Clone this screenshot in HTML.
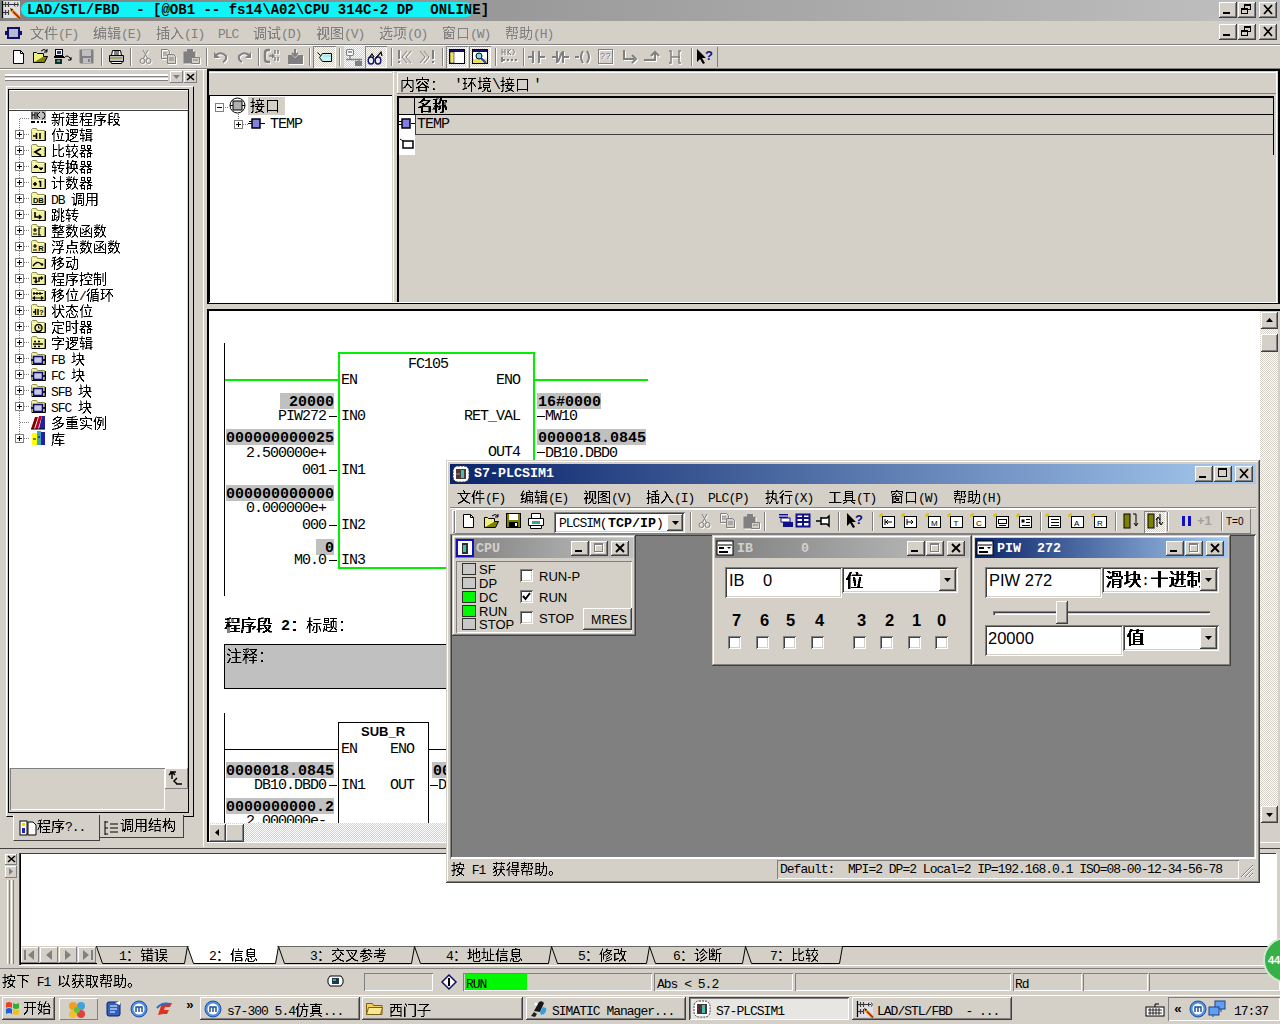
<!DOCTYPE html><html><head><meta charset="utf-8"><style>
*{margin:0;padding:0;box-sizing:border-box}
html,body{width:1280px;height:1024px;overflow:hidden;background:#D4D0C8;position:relative;font-family:"Liberation Mono",monospace;color:#000}
div{position:absolute}
.tx{white-space:nowrap;line-height:12px;height:12px}
svg.c{position:static;display:inline-block;vertical-align:top}
.ra{background:#D4D0C8;box-shadow:inset -1px -1px #404040,inset 1px 1px #fff,inset -2px -2px #808080,inset 2px 2px #D4D0C8}
.ra1{background:#D4D0C8;box-shadow:inset -1px -1px #808080,inset 1px 1px #fff}
.sk{box-shadow:inset 1px 1px #808080,inset -1px -1px #fff,inset 2px 2px #404040,inset -2px -2px #D4D0C8}
.sk1{box-shadow:inset 1px 1px #808080,inset -1px -1px #fff}
.sans{font-family:"Liberation Sans",sans-serif}
.dith{background-color:#fff;background-image:linear-gradient(45deg,#D4D0C8 25%,transparent 25%,transparent 75%,#D4D0C8 75%),linear-gradient(45deg,#D4D0C8 25%,transparent 25%,transparent 75%,#D4D0C8 75%);background-size:2px 2px;background-position:0 0,1px 1px}
svg{position:absolute;overflow:visible}
</style></head><body><svg width="0" height="0" style="position:absolute;left:0;top:0"><defs><g id="g146587"><path d="M6 0h1v1h-1zM7 1h1v1h-1zM7 2h1v1h-1zM1 3h12v1h-12zM3 4h1v1h-1zM10 4h1v1h-1zM4 5h1v1h-1zM9 5h1v1h-1zM4 6h1v1h-1zM9 6h1v1h-1zM5 7h1v1h-1zM8 7h1v1h-1zM5 8h2v1h-2zM8 8h1v1h-1zM6 9h2v1h-2zM5 10h4v1h-4zM4 11h2v1h-2zM8 11h2v1h-2zM2 12h2v1h-2zM10 12h2v1h-2zM1 13h1v1h-1zM12 13h1v1h-1z"/><path d="M6 1h1v1h-1zM0 3h1v1h-1zM13 3h1v1h-1zM3 5h1v1h-1zM10 5h1v1h-1zM4 7h1v1h-1zM9 7h1v1h-1zM7 8h1v1h-1zM3 11h1v1h-1zM10 11h1v1h-1zM1 12h1v1h-1zM4 12h1v1h-1zM9 12h1v1h-1zM12 12h1v1h-1zM2 13h1v1h-1z" opacity="0.5"/></g><g id="g144ef6"><path d="M3 1h1v1h-1zM6 1h1v1h-1zM3 2h1v1h-1zM6 2h1v1h-1zM2 3h1v1h-1zM5 3h8v1h-8zM2 4h1v1h-1zM5 4h1v1h-1zM1 5h2v1h-2zM5 5h1v1h-1zM1 6h2v1h-2zM2 7h1v1h-1zM2 8h1v1h-1zM5 8h8v1h-8zM2 9h1v1h-1zM2 10h1v1h-1zM2 11h1v1h-1zM2 12h1v1h-1z"/><path d="M3 0h2v1h-2zM8 0h2v1h-2zM8 1h2v1h-2zM2 2h1v1h-1zM5 2h1v1h-1zM8 2h2v1h-2zM3 3h1v1h-1zM1 4h1v1h-1zM3 4h1v1h-1zM8 4h2v1h-2zM3 5h2v1h-2zM8 5h2v1h-2zM0 6h1v1h-1zM3 6h1v1h-1zM8 6h2v1h-2zM3 7h1v1h-1zM8 7h2v1h-2zM3 8h2v1h-2zM13 8h1v1h-1zM3 9h1v1h-1zM8 9h2v1h-2zM3 10h1v1h-1zM8 10h2v1h-2zM3 11h1v1h-1zM8 11h2v1h-2zM3 12h1v1h-1zM8 12h2v1h-2zM2 13h2v1h-2zM8 13h2v1h-2z" opacity="0.5"/></g><g id="g147f16"><path d="M3 1h1v1h-1zM9 1h1v1h-1zM2 2h1v1h-1zM6 2h7v1h-7zM2 3h1v1h-1zM6 3h1v1h-1zM12 3h1v1h-1zM1 4h1v1h-1zM4 4h1v1h-1zM6 4h7v1h-7zM1 5h3v1h-3zM6 5h1v1h-1zM2 6h1v1h-1zM6 6h7v1h-7zM2 7h1v1h-1zM6 7h1v1h-1zM12 7h1v1h-1zM1 8h4v1h-4zM6 8h1v1h-1zM12 8h1v1h-1zM1 9h2v1h-2zM6 9h1v1h-1zM12 9h1v1h-1zM5 10h1v1h-1zM7 10h6v1h-6zM2 11h2v1h-2zM5 11h1v1h-1zM12 11h1v1h-1zM1 12h1v1h-1zM5 12h1v1h-1zM12 12h1v1h-1z"/><path d="M3 0h1v1h-1zM8 0h2v1h-2zM2 1h1v1h-1zM1 3h1v1h-1zM4 3h1v1h-1zM2 4h2v1h-2zM0 5h1v1h-1zM3 6h1v1h-1zM5 7h1v1h-1zM7 7h1v1h-1zM9 7h2v1h-2zM5 8h1v1h-1zM7 8h1v1h-1zM9 8h2v1h-2zM3 9h1v1h-1zM5 9h1v1h-1zM7 9h1v1h-1zM9 9h2v1h-2zM6 10h1v1h-1zM1 11h1v1h-1zM4 11h1v1h-1zM6 11h2v1h-2zM9 11h2v1h-2zM0 12h1v1h-1zM2 12h1v1h-1zM4 12h1v1h-1zM7 12h1v1h-1zM9 12h2v1h-2zM7 13h1v1h-1zM11 13h2v1h-2z" opacity="0.5"/></g><g id="g148f91"><path d="M7 1h5v1h-5zM1 2h5v1h-5zM7 2h1v1h-1zM2 3h1v1h-1zM7 3h5v1h-5zM2 4h1v1h-1zM6 5h7v1h-7zM1 6h1v1h-1zM7 6h1v1h-1zM1 7h5v1h-5zM7 7h5v1h-5zM7 8h1v1h-1zM7 9h5v1h-5zM1 10h4v1h-4zM7 10h1v1h-1zM7 11h1v1h-1zM11 11h2v1h-2zM6 12h2v1h-2zM11 12h1v1h-1z"/><path d="M2 0h2v1h-2zM2 1h2v1h-2zM12 1h1v1h-1zM0 2h1v1h-1zM11 2h2v1h-2zM12 3h1v1h-1zM3 4h1v1h-1zM1 5h4v1h-4zM13 5h1v1h-1zM3 6h2v1h-2zM11 6h2v1h-2zM12 7h1v1h-1zM3 8h2v1h-2zM11 8h2v1h-2zM3 9h3v1h-3zM12 9h1v1h-1zM5 10h1v1h-1zM11 10h2v1h-2zM1 11h1v1h-1zM3 11h2v1h-2zM6 11h1v1h-1zM8 11h3v1h-3zM13 11h1v1h-1zM3 12h2v1h-2zM8 12h3v1h-3zM12 12h1v1h-1zM3 13h2v1h-2zM11 13h2v1h-2z" opacity="0.5"/></g><g id="g1463d2"><path d="M2 0h1v1h-1zM11 0h1v1h-1zM2 1h1v1h-1zM6 1h4v1h-4zM2 2h1v1h-1zM9 2h1v1h-1zM1 3h3v1h-3zM9 3h1v1h-1zM2 4h1v1h-1zM5 4h8v1h-8zM2 5h1v1h-1zM9 5h1v1h-1zM2 6h1v1h-1zM6 6h2v1h-2zM9 6h4v1h-4zM2 7h3v1h-3zM9 7h1v1h-1zM12 7h1v1h-1zM1 8h2v1h-2zM9 8h1v1h-1zM12 8h1v1h-1zM2 9h1v1h-1zM6 9h2v1h-2zM9 9h4v1h-4zM2 10h1v1h-1zM9 10h1v1h-1zM12 10h1v1h-1zM2 11h1v1h-1zM9 11h1v1h-1zM12 11h1v1h-1zM2 12h1v1h-1zM6 12h7v1h-7zM1 13h2v1h-2zM12 13h1v1h-1z"/><path d="M10 0h1v1h-1zM10 1h2v1h-2zM8 2h1v1h-1zM4 3h1v1h-1zM13 4h1v1h-1zM5 6h1v1h-1zM8 6h1v1h-1zM1 7h1v1h-1zM5 7h2v1h-2zM0 8h1v1h-1zM3 8h1v1h-1zM5 8h2v1h-2zM5 9h1v1h-1zM8 9h1v1h-1zM5 10h2v1h-2zM5 11h2v1h-2zM5 12h1v1h-1zM5 13h2v1h-2z" opacity="0.5"/></g><g id="g145165"><path d="M5 2h1v1h-1zM6 3h1v1h-1zM6 4h2v1h-2zM6 5h2v1h-2zM6 6h1v1h-1zM8 6h1v1h-1zM5 7h1v1h-1zM8 7h1v1h-1zM5 8h1v1h-1zM9 8h1v1h-1zM4 9h1v1h-1zM9 9h2v1h-2zM3 10h2v1h-2zM10 10h1v1h-1zM2 11h2v1h-2zM11 11h1v1h-1zM1 12h2v1h-2zM12 12h1v1h-1z"/><path d="M4 1h2v1h-2zM6 2h1v1h-1zM8 5h1v1h-1zM5 6h1v1h-1zM7 6h1v1h-1zM6 7h1v1h-1zM9 7h1v1h-1zM5 9h1v1h-1zM11 10h1v1h-1zM10 11h1v1h-1zM12 11h1v1h-1zM11 12h1v1h-1zM13 12h1v1h-1zM1 13h1v1h-1z" opacity="0.5"/></g><g id="g148c03"><path d="M2 1h1v1h-1zM5 1h8v1h-8zM3 2h1v1h-1zM5 2h1v1h-1zM12 2h1v1h-1zM5 3h1v1h-1zM7 3h4v1h-4zM12 3h1v1h-1zM5 4h1v1h-1zM12 4h1v1h-1zM1 5h2v1h-2zM5 5h1v1h-1zM12 5h1v1h-1zM5 6h1v1h-1zM7 6h4v1h-4zM12 6h1v1h-1zM5 7h1v1h-1zM12 7h1v1h-1zM5 8h1v1h-1zM7 8h4v1h-4zM12 8h1v1h-1zM5 9h1v1h-1zM7 9h1v1h-1zM10 9h1v1h-1zM12 9h1v1h-1zM5 10h1v1h-1zM7 10h1v1h-1zM10 10h1v1h-1zM12 10h1v1h-1zM3 11h3v1h-3zM7 11h4v1h-4zM12 11h1v1h-1zM2 12h3v1h-3zM12 12h1v1h-1zM4 13h1v1h-1zM10 13h2v1h-2z"/><path d="M6 2h1v1h-1zM9 2h1v1h-1zM6 3h1v1h-1zM6 4h1v1h-1zM8 4h2v1h-2zM0 5h1v1h-1zM3 5h1v1h-1zM6 5h1v1h-1zM8 5h2v1h-2zM2 6h2v1h-2zM6 6h1v1h-1zM11 6h1v1h-1zM2 7h2v1h-2zM2 8h2v1h-2zM2 9h2v1h-2zM2 10h2v1h-2zM2 11h1v1h-1zM5 12h1v1h-1zM7 12h1v1h-1zM2 13h1v1h-1zM12 13h1v1h-1z" opacity="0.5"/></g><g id="g148bd5"><path d="M2 1h2v1h-2zM12 1h1v1h-1zM3 2h1v1h-1zM5 3h8v1h-8zM1 5h3v1h-3zM10 5h1v1h-1zM3 6h1v1h-1zM10 6h1v1h-1zM3 7h1v1h-1zM5 7h4v1h-4zM10 7h1v1h-1zM3 8h1v1h-1zM7 8h1v1h-1zM10 8h1v1h-1zM3 9h1v1h-1zM7 9h1v1h-1zM10 9h1v1h-1zM3 10h1v1h-1zM7 10h1v1h-1zM10 10h1v1h-1zM3 11h2v1h-2zM7 11h2v1h-2zM10 11h1v1h-1zM2 12h2v1h-2zM5 12h1v1h-1zM11 12h2v1h-2zM11 13h2v1h-2z"/><path d="M2 0h1v1h-1zM9 0h3v1h-3zM9 1h3v1h-3zM9 2h2v1h-2zM12 2h1v1h-1zM13 3h1v1h-1zM9 4h2v1h-2zM0 5h1v1h-1zM9 5h1v1h-1zM2 6h1v1h-1zM9 6h1v1h-1zM2 7h1v1h-1zM9 7h1v1h-1zM2 8h1v1h-1zM2 9h1v1h-1zM2 10h1v1h-1zM2 11h1v1h-1zM5 11h2v1h-2zM9 11h1v1h-1zM11 11h3v1h-3zM6 12h2v1h-2zM10 12h1v1h-1z" opacity="0.5"/></g><g id="g1489c6"><path d="M3 1h1v1h-1zM6 1h7v1h-7zM6 2h1v1h-1zM12 2h1v1h-1zM1 3h4v1h-4zM6 3h1v1h-1zM9 3h1v1h-1zM12 3h1v1h-1zM4 4h1v1h-1zM6 4h1v1h-1zM9 4h1v1h-1zM12 4h1v1h-1zM3 5h1v1h-1zM6 5h1v1h-1zM9 5h1v1h-1zM12 5h1v1h-1zM3 6h1v1h-1zM6 6h1v1h-1zM9 6h1v1h-1zM12 6h1v1h-1zM2 7h3v1h-3zM6 7h1v1h-1zM9 7h1v1h-1zM12 7h1v1h-1zM1 8h4v1h-4zM6 8h1v1h-1zM9 8h1v1h-1zM12 8h1v1h-1zM3 9h1v1h-1zM8 9h2v1h-2zM3 10h1v1h-1zM8 10h2v1h-2zM3 11h1v1h-1zM7 11h1v1h-1zM3 12h1v1h-1zM6 12h2v1h-2zM3 13h1v1h-1zM5 13h1v1h-1zM10 13h3v1h-3z"/><path d="M2 0h1v1h-1zM2 1h1v1h-1zM3 2h1v1h-1zM7 2h1v1h-1zM11 2h1v1h-1zM5 3h1v1h-1zM7 3h1v1h-1zM11 3h1v1h-1zM7 4h1v1h-1zM11 4h1v1h-1zM4 5h1v1h-1zM7 5h1v1h-1zM11 5h1v1h-1zM7 6h1v1h-1zM11 6h1v1h-1zM7 7h1v1h-1zM11 7h1v1h-1zM5 8h1v1h-1zM7 8h2v1h-2zM11 8h1v1h-1zM1 9h2v1h-2zM10 9h1v1h-1zM2 10h1v1h-1zM10 10h1v1h-1zM2 11h1v1h-1zM8 11h3v1h-3zM12 11h2v1h-2zM2 12h1v1h-1zM9 12h2v1h-2zM12 12h2v1h-2zM2 13h1v1h-1zM6 13h1v1h-1z" opacity="0.5"/></g><g id="g1456fe"><path d="M1 1h12v1h-12zM1 2h1v1h-1zM12 2h1v1h-1zM1 3h1v1h-1zM5 3h5v1h-5zM12 3h1v1h-1zM1 4h1v1h-1zM4 4h2v1h-2zM9 4h1v1h-1zM12 4h1v1h-1zM1 5h1v1h-1zM6 5h2v1h-2zM12 5h1v1h-1zM1 6h1v1h-1zM5 6h4v1h-4zM12 6h1v1h-1zM1 7h1v1h-1zM3 7h2v1h-2zM9 7h2v1h-2zM12 7h1v1h-1zM1 8h1v1h-1zM6 8h2v1h-2zM12 8h1v1h-1zM1 9h1v1h-1zM12 9h1v1h-1zM1 10h1v1h-1zM6 10h3v1h-3zM12 10h1v1h-1zM1 11h1v1h-1zM12 11h1v1h-1zM1 12h12v1h-12zM1 13h1v1h-1zM12 13h1v1h-1z"/><path d="M5 2h2v1h-2zM4 3h1v1h-1zM3 4h1v1h-1zM8 4h1v1h-1zM3 5h1v1h-1zM5 5h1v1h-1zM8 5h1v1h-1zM9 6h1v1h-1zM2 7h1v1h-1zM5 7h1v1h-1zM11 7h1v1h-1zM5 8h1v1h-1zM8 8h1v1h-1zM4 9h2v1h-2zM8 9h1v1h-1zM4 10h2v1h-2zM9 10h1v1h-1zM9 11h1v1h-1z" opacity="0.5"/></g><g id="g149009"><path d="M1 1h2v1h-2zM6 1h1v1h-1zM2 2h1v1h-1zM6 2h7v1h-7zM5 3h1v1h-1zM5 5h8v1h-8zM1 6h2v1h-2zM7 6h1v1h-1zM7 7h1v1h-1zM6 8h1v1h-1zM6 9h1v1h-1zM12 9h1v1h-1zM4 10h2v1h-2zM10 10h3v1h-3zM2 11h2v1h-2zM1 12h2v1h-2zM4 12h2v1h-2zM1 13h1v1h-1zM6 13h7v1h-7z"/><path d="M6 0h1v1h-1zM8 0h2v1h-2zM8 1h2v1h-2zM3 2h1v1h-1zM5 2h1v1h-1zM8 3h2v1h-2zM8 4h2v1h-2zM4 5h1v1h-1zM13 5h1v1h-1zM3 6h1v1h-1zM9 6h2v1h-2zM2 7h2v1h-2zM6 7h1v1h-1zM9 7h2v1h-2zM2 8h2v1h-2zM7 8h1v1h-1zM9 8h2v1h-2zM12 8h1v1h-1zM2 9h2v1h-2zM5 9h1v1h-1zM9 9h2v1h-2zM13 9h1v1h-1zM2 10h2v1h-2zM9 10h1v1h-1zM4 11h1v1h-1zM12 12h1v1h-1zM5 13h1v1h-1z" opacity="0.5"/></g><g id="g149879"><path d="M1 1h12v1h-12zM8 2h1v1h-1zM6 3h6v1h-6zM6 4h1v1h-1zM6 5h1v1h-1zM9 5h1v1h-1zM6 6h1v1h-1zM9 6h1v1h-1zM6 7h1v1h-1zM9 7h1v1h-1zM6 8h1v1h-1zM9 8h1v1h-1zM2 9h2v1h-2zM6 9h1v1h-1zM1 10h1v1h-1zM8 10h1v1h-1zM7 11h2v1h-2zM10 11h1v1h-1zM6 12h1v1h-1zM11 12h2v1h-2zM5 13h1v1h-1z"/><path d="M0 1h1v1h-1zM13 1h1v1h-1zM2 2h2v1h-2zM9 2h1v1h-1zM2 3h2v1h-2zM12 3h1v1h-1zM2 4h2v1h-2zM11 4h2v1h-2zM2 5h2v1h-2zM8 5h1v1h-1zM11 5h2v1h-2zM2 6h2v1h-2zM8 6h1v1h-1zM11 6h2v1h-2zM2 7h2v1h-2zM8 7h1v1h-1zM11 7h2v1h-2zM2 8h4v1h-4zM8 8h1v1h-1zM11 8h2v1h-2zM1 9h1v1h-1zM4 9h1v1h-1zM8 9h2v1h-2zM11 9h2v1h-2zM0 10h1v1h-1zM2 10h1v1h-1zM11 11h1v1h-1zM5 12h1v1h-1zM7 12h1v1h-1zM12 13h1v1h-1z" opacity="0.5"/></g><g id="g147a97"><path d="M6 0h1v1h-1zM1 1h12v1h-12zM1 2h1v1h-1zM12 2h1v1h-1zM4 3h1v1h-1zM9 3h1v1h-1zM2 4h2v1h-2zM6 4h1v1h-1zM10 4h2v1h-2zM2 6h10v1h-10zM2 7h1v1h-1zM5 7h1v1h-1zM11 7h1v1h-1zM2 8h1v1h-1zM5 8h4v1h-4zM11 8h1v1h-1zM2 9h1v1h-1zM8 9h1v1h-1zM11 9h1v1h-1zM2 10h1v1h-1zM6 10h3v1h-3zM11 10h1v1h-1zM2 11h1v1h-1zM4 11h2v1h-2zM11 11h1v1h-1zM2 12h10v1h-10z"/><path d="M7 0h1v1h-1zM5 2h1v1h-1zM8 2h1v1h-1zM1 3h1v1h-1zM3 3h1v1h-1zM5 3h1v1h-1zM8 3h1v1h-1zM10 3h1v1h-1zM12 3h1v1h-1zM4 4h1v1h-1zM1 5h2v1h-2zM5 5h2v1h-2zM11 5h2v1h-2zM3 7h1v1h-1zM3 8h2v1h-2zM9 8h1v1h-1zM3 9h5v1h-5zM3 10h1v1h-1zM3 11h1v1h-1zM9 11h1v1h-1zM2 13h1v1h-1zM11 13h1v1h-1z" opacity="0.5"/></g><g id="g1453e3"><path d="M2 2h10v1h-10zM2 3h1v1h-1zM11 3h1v1h-1zM2 4h1v1h-1zM11 4h1v1h-1zM2 5h1v1h-1zM11 5h1v1h-1zM2 6h1v1h-1zM11 6h1v1h-1zM2 7h1v1h-1zM11 7h1v1h-1zM2 8h1v1h-1zM11 8h1v1h-1zM2 9h1v1h-1zM11 9h1v1h-1zM2 10h1v1h-1zM11 10h1v1h-1zM2 11h10v1h-10zM2 12h1v1h-1zM11 12h1v1h-1z"/><path d="M2 13h1v1h-1zM11 13h1v1h-1z" opacity="0.5"/></g><g id="g145e2e"><path d="M4 0h1v1h-1zM1 1h6v1h-6zM8 1h5v1h-5zM4 2h1v1h-1zM8 2h1v1h-1zM11 2h1v1h-1zM1 3h6v1h-6zM8 3h1v1h-1zM11 3h1v1h-1zM4 4h1v1h-1zM8 4h1v1h-1zM1 5h6v1h-6zM8 5h1v1h-1zM12 5h1v1h-1zM3 6h1v1h-1zM8 6h1v1h-1zM11 6h2v1h-2zM2 7h1v1h-1zM8 7h1v1h-1zM1 8h1v1h-1zM2 9h10v1h-10zM2 10h1v1h-1zM11 10h1v1h-1zM2 11h1v1h-1zM11 11h1v1h-1zM2 12h1v1h-1zM9 12h3v1h-3z"/><path d="M7 1h1v1h-1zM10 3h1v1h-1zM11 4h2v1h-2zM7 5h1v1h-1zM9 6h2v1h-2zM1 7h1v1h-1zM3 7h1v1h-1zM6 7h1v1h-1zM10 7h2v1h-2zM2 8h1v1h-1zM6 8h2v1h-2zM6 10h2v1h-2zM6 11h2v1h-2zM6 12h2v1h-2zM6 13h2v1h-2z" opacity="0.5"/></g><g id="g1452a9"><path d="M9 0h1v1h-1zM2 1h4v1h-4zM9 1h1v1h-1zM5 2h1v1h-1zM9 2h1v1h-1zM5 3h1v1h-1zM9 3h1v1h-1zM2 4h4v1h-4zM7 4h6v1h-6zM5 5h1v1h-1zM9 5h1v1h-1zM12 5h1v1h-1zM5 6h1v1h-1zM9 6h1v1h-1zM12 6h1v1h-1zM2 7h4v1h-4zM12 7h1v1h-1zM5 8h1v1h-1zM8 8h1v1h-1zM12 8h1v1h-1zM5 9h1v1h-1zM8 9h1v1h-1zM12 9h1v1h-1zM4 10h3v1h-3zM8 10h1v1h-1zM12 10h1v1h-1zM1 11h3v1h-3zM7 11h1v1h-1zM12 11h1v1h-1zM6 12h1v1h-1zM9 13h3v1h-3z"/><path d="M1 1h1v1h-1zM1 2h2v1h-2zM1 3h2v1h-2zM1 4h1v1h-1zM6 4h1v1h-1zM1 5h2v1h-2zM1 6h2v1h-2zM8 6h1v1h-1zM1 7h1v1h-1zM8 7h2v1h-2zM1 8h2v1h-2zM1 9h2v1h-2zM1 10h3v1h-3zM7 10h1v1h-1zM0 11h1v1h-1zM4 11h2v1h-2zM11 11h1v1h-1zM1 12h1v1h-1zM7 12h1v1h-1zM11 12h2v1h-2zM5 13h2v1h-2z" opacity="0.5"/></g><g id="g147a0b"><path d="M2 1h2v1h-2zM7 1h6v1h-6zM3 2h1v1h-1zM12 2h1v1h-1zM3 3h1v1h-1zM12 3h1v1h-1zM1 4h5v1h-5zM7 4h6v1h-6zM3 5h1v1h-1zM2 6h2v1h-2zM2 7h3v1h-3zM6 7h7v1h-7zM3 8h1v1h-1zM5 8h1v1h-1zM9 8h1v1h-1zM1 9h1v1h-1zM3 9h1v1h-1zM9 9h1v1h-1zM3 10h1v1h-1zM6 10h7v1h-7zM3 11h1v1h-1zM9 11h1v1h-1zM3 12h1v1h-1zM9 12h1v1h-1zM3 13h1v1h-1zM5 13h8v1h-8z"/><path d="M4 0h1v1h-1zM1 1h1v1h-1zM4 1h1v1h-1zM6 1h1v1h-1zM1 2h1v1h-1zM6 2h2v1h-2zM11 2h1v1h-1zM6 3h2v1h-2zM11 3h1v1h-1zM0 4h1v1h-1zM6 4h1v1h-1zM2 5h1v1h-1zM1 8h2v1h-2zM4 8h1v1h-1zM0 10h2v1h-2zM13 13h1v1h-1z" opacity="0.5"/></g><g id="g145e8f"><path d="M7 0h1v1h-1zM7 1h1v1h-1zM2 2h11v1h-11zM2 3h1v1h-1zM2 4h1v1h-1zM4 4h8v1h-8zM2 5h1v1h-1zM10 5h1v1h-1zM2 6h1v1h-1zM6 6h1v1h-1zM8 6h2v1h-2zM7 7h2v1h-2zM3 8h10v1h-10zM8 9h1v1h-1zM11 9h1v1h-1zM1 10h1v1h-1zM8 10h1v1h-1zM1 11h1v1h-1zM8 11h1v1h-1zM1 12h1v1h-1zM8 12h1v1h-1zM5 13h3v1h-3z"/><path d="M1 2h1v1h-1zM13 2h1v1h-1zM1 3h1v1h-1zM1 4h1v1h-1zM1 5h1v1h-1zM9 5h1v1h-1zM1 6h1v1h-1zM5 6h1v1h-1zM7 6h1v1h-1zM1 7h2v1h-2zM9 7h1v1h-1zM1 8h2v1h-2zM1 9h2v1h-2zM7 9h1v1h-1zM12 9h1v1h-1zM2 10h1v1h-1zM7 10h1v1h-1zM10 10h2v1h-2zM7 11h1v1h-1zM7 12h1v1h-1zM0 13h2v1h-2zM8 13h1v1h-1z" opacity="0.5"/></g><g id="g147528"><path d="M2 1h10v1h-10zM2 2h1v1h-1zM11 2h1v1h-1zM2 3h1v1h-1zM11 3h1v1h-1zM2 4h1v1h-1zM11 4h1v1h-1zM2 5h10v1h-10zM2 6h1v1h-1zM11 6h1v1h-1zM2 7h1v1h-1zM11 7h1v1h-1zM2 8h10v1h-10zM2 9h1v1h-1zM11 9h1v1h-1zM2 10h1v1h-1zM11 10h1v1h-1zM11 11h1v1h-1zM1 12h1v1h-1zM11 12h1v1h-1zM1 13h1v1h-1zM9 13h3v1h-3z"/><path d="M12 1h1v1h-1zM6 2h2v1h-2zM12 2h1v1h-1zM6 3h2v1h-2zM12 3h1v1h-1zM6 4h2v1h-2zM12 4h1v1h-1zM12 5h1v1h-1zM6 6h2v1h-2zM12 6h1v1h-1zM6 7h2v1h-2zM12 7h1v1h-1zM12 8h1v1h-1zM6 9h2v1h-2zM12 9h1v1h-1zM6 10h2v1h-2zM12 10h1v1h-1zM1 11h2v1h-2zM6 11h2v1h-2zM12 11h1v1h-1zM6 12h2v1h-2zM12 12h1v1h-1zM0 13h1v1h-1zM6 13h2v1h-2z" opacity="0.5"/></g><g id="g147ed3"><path d="M3 0h1v1h-1zM9 0h1v1h-1zM3 1h1v1h-1zM9 1h1v1h-1zM2 2h1v1h-1zM6 2h7v1h-7zM2 3h1v1h-1zM9 3h1v1h-1zM1 4h1v1h-1zM4 4h1v1h-1zM9 4h1v1h-1zM1 5h4v1h-4zM9 5h1v1h-1zM3 6h1v1h-1zM6 6h7v1h-7zM2 7h1v1h-1zM1 8h2v1h-2zM4 8h1v1h-1zM7 8h5v1h-5zM1 9h1v1h-1zM2 11h3v1h-3zM1 12h1v1h-1zM7 12h5v1h-5z"/><path d="M2 1h1v1h-1zM3 2h1v1h-1zM5 2h1v1h-1zM1 3h1v1h-1zM4 3h1v1h-1zM2 4h1v1h-1zM5 4h1v1h-1zM0 5h1v1h-1zM1 6h2v1h-2zM3 7h1v1h-1zM3 8h1v1h-1zM5 8h2v1h-2zM12 8h1v1h-1zM0 9h1v1h-1zM2 9h2v1h-2zM6 9h2v1h-2zM11 9h2v1h-2zM6 10h2v1h-2zM11 10h2v1h-2zM1 11h1v1h-1zM5 11h3v1h-3zM11 11h2v1h-2zM0 12h1v1h-1zM2 12h1v1h-1zM6 12h1v1h-1zM12 12h1v1h-1zM6 13h2v1h-2zM11 13h2v1h-2z" opacity="0.5"/></g><g id="g146784"><path d="M3 0h1v1h-1zM7 0h1v1h-1zM3 1h1v1h-1zM7 1h1v1h-1zM3 2h1v1h-1zM7 2h1v1h-1zM1 3h4v1h-4zM6 3h7v1h-7zM3 4h1v1h-1zM6 4h1v1h-1zM12 4h1v1h-1zM2 5h2v1h-2zM5 5h1v1h-1zM12 5h1v1h-1zM2 6h3v1h-3zM7 6h1v1h-1zM12 6h1v1h-1zM2 7h2v1h-2zM7 7h1v1h-1zM9 7h1v1h-1zM12 7h1v1h-1zM1 8h1v1h-1zM3 8h1v1h-1zM9 8h1v1h-1zM12 8h1v1h-1zM1 9h1v1h-1zM3 9h1v1h-1zM6 9h4v1h-4zM12 9h1v1h-1zM3 10h1v1h-1zM6 10h1v1h-1zM10 10h1v1h-1zM12 10h1v1h-1zM3 11h1v1h-1zM12 11h1v1h-1zM3 12h1v1h-1zM11 12h1v1h-1zM3 13h1v1h-1zM9 13h3v1h-3z"/><path d="M6 2h1v1h-1zM0 3h1v1h-1zM5 3h1v1h-1zM2 4h1v1h-1zM5 4h1v1h-1zM4 5h1v1h-1zM6 5h3v1h-3zM8 6h1v1h-1zM1 7h1v1h-1zM4 7h2v1h-2zM2 8h1v1h-1zM6 8h2v1h-2zM0 9h1v1h-1zM10 9h1v1h-1zM7 10h1v1h-1zM11 11h1v1h-1zM12 12h1v1h-1z" opacity="0.5"/></g><g id="g1465b0"><path d="M3 0h1v1h-1zM10 1h1v1h-1zM1 2h6v1h-6zM8 2h1v1h-1zM2 3h1v1h-1zM5 3h1v1h-1zM8 3h1v1h-1zM2 4h1v1h-1zM5 4h1v1h-1zM8 4h1v1h-1zM1 5h6v1h-6zM8 5h5v1h-5zM8 6h1v1h-1zM11 6h1v1h-1zM8 7h1v1h-1zM11 7h1v1h-1zM1 8h6v1h-6zM11 8h1v1h-1zM11 9h1v1h-1zM5 10h1v1h-1zM11 10h1v1h-1zM1 11h1v1h-1zM6 11h2v1h-2zM11 11h1v1h-1zM7 12h1v1h-1zM11 12h1v1h-1zM3 13h1v1h-1zM11 13h1v1h-1z"/><path d="M11 0h2v1h-2zM3 1h2v1h-2zM8 1h2v1h-2zM11 1h2v1h-2zM7 2h1v1h-1zM0 5h1v1h-1zM7 5h1v1h-1zM13 5h1v1h-1zM3 6h2v1h-2zM3 7h2v1h-2zM7 7h1v1h-1zM0 8h1v1h-1zM7 8h2v1h-2zM3 9h3v1h-3zM7 9h2v1h-2zM1 10h4v1h-4zM6 10h3v1h-3zM3 11h2v1h-2zM3 12h2v1h-2zM2 13h1v1h-1zM6 13h2v1h-2z" opacity="0.5"/></g><g id="g145efa"><path d="M8 0h1v1h-1zM1 1h3v1h-3zM6 1h6v1h-6zM3 2h1v1h-1zM8 2h1v1h-1zM11 2h1v1h-1zM5 3h8v1h-8zM2 4h1v1h-1zM8 4h1v1h-1zM11 4h1v1h-1zM1 5h3v1h-3zM6 5h6v1h-6zM8 6h1v1h-1zM3 7h1v1h-1zM6 7h6v1h-6zM1 8h1v1h-1zM3 8h1v1h-1zM8 8h1v1h-1zM3 9h1v1h-1zM8 9h1v1h-1zM2 10h2v1h-2zM5 10h8v1h-8zM2 11h2v1h-2zM8 11h1v1h-1zM2 12h1v1h-1zM4 12h1v1h-1zM1 13h1v1h-1zM6 13h7v1h-7z"/><path d="M4 1h2v1h-2zM2 3h3v1h-3zM4 5h2v1h-2zM3 6h2v1h-2zM1 7h1v1h-1zM4 7h2v1h-2zM12 7h1v1h-1zM1 9h2v1h-2zM1 12h1v1h-1zM3 12h1v1h-1zM5 12h2v1h-2zM8 12h1v1h-1zM5 13h1v1h-1z" opacity="0.5"/></g><g id="g146bb5"><path d="M3 1h2v1h-2zM8 1h3v1h-3zM2 2h1v1h-1zM2 3h1v1h-1zM2 4h4v1h-4zM7 4h1v1h-1zM2 5h1v1h-1zM7 5h1v1h-1zM11 5h2v1h-2zM2 6h1v1h-1zM2 7h4v1h-4zM7 7h5v1h-5zM2 8h1v1h-1zM7 8h1v1h-1zM11 8h1v1h-1zM2 9h1v1h-1zM8 9h1v1h-1zM1 10h4v1h-4zM8 10h3v1h-3zM2 11h1v1h-1zM9 11h2v1h-2zM2 12h1v1h-1zM7 12h2v1h-2zM10 12h2v1h-2zM6 13h1v1h-1zM12 13h1v1h-1z"/><path d="M4 0h2v1h-2zM2 1h1v1h-1zM5 1h1v1h-1zM7 1h1v1h-1zM11 1h1v1h-1zM1 2h1v1h-1zM7 2h2v1h-2zM10 2h2v1h-2zM1 3h1v1h-1zM7 3h2v1h-2zM10 3h2v1h-2zM1 4h1v1h-1zM10 4h2v1h-2zM1 5h1v1h-1zM6 5h1v1h-1zM10 5h1v1h-1zM1 6h1v1h-1zM6 6h1v1h-1zM1 7h1v1h-1zM6 7h1v1h-1zM1 8h1v1h-1zM1 9h1v1h-1zM5 9h1v1h-1zM7 9h1v1h-1zM10 9h2v1h-2zM0 10h1v1h-1zM5 10h1v1h-1zM1 11h1v1h-1zM8 11h1v1h-1zM1 12h1v1h-1zM6 12h1v1h-1zM9 12h1v1h-1zM12 12h1v1h-1zM2 13h1v1h-1zM7 13h1v1h-1zM11 13h1v1h-1z" opacity="0.5"/></g><g id="g144f4d"><path d="M8 0h1v1h-1zM8 1h1v1h-1zM3 2h1v1h-1zM3 3h1v1h-1zM5 3h8v1h-8zM2 4h1v1h-1zM1 5h2v1h-2zM6 5h1v1h-1zM11 5h1v1h-1zM1 6h1v1h-1zM6 6h1v1h-1zM11 6h1v1h-1zM7 8h1v1h-1zM10 8h1v1h-1zM7 9h1v1h-1zM10 9h1v1h-1zM7 10h1v1h-1zM10 10h1v1h-1zM5 12h8v1h-8z"/><path d="M4 0h1v1h-1zM3 1h2v1h-2zM9 1h1v1h-1zM8 2h2v1h-2zM2 3h1v1h-1zM3 4h1v1h-1zM3 5h1v1h-1zM10 5h1v1h-1zM2 6h2v1h-2zM7 6h1v1h-1zM10 6h1v1h-1zM2 7h2v1h-2zM6 7h2v1h-2zM10 7h2v1h-2zM2 8h2v1h-2zM6 8h1v1h-1zM2 9h2v1h-2zM2 10h2v1h-2zM2 11h2v1h-2zM9 11h2v1h-2zM2 12h3v1h-3zM13 12h1v1h-1zM2 13h2v1h-2z" opacity="0.5"/></g><g id="g14903b"><path d="M5 1h8v1h-8zM2 2h1v1h-1zM5 2h1v1h-1zM7 2h1v1h-1zM12 2h1v1h-1zM3 3h1v1h-1zM5 3h1v1h-1zM7 3h1v1h-1zM12 3h1v1h-1zM5 4h8v1h-8zM1 5h3v1h-3zM7 5h1v1h-1zM3 6h1v1h-1zM6 6h6v1h-6zM3 7h1v1h-1zM5 7h2v1h-2zM11 7h1v1h-1zM3 8h1v1h-1zM7 8h1v1h-1zM10 8h1v1h-1zM3 9h1v1h-1zM8 9h2v1h-2zM3 10h1v1h-1zM7 10h2v1h-2zM2 11h2v1h-2zM5 11h2v1h-2zM1 12h1v1h-1zM4 12h2v1h-2zM1 13h1v1h-1zM5 13h8v1h-8z"/><path d="M1 1h2v1h-2zM3 2h1v1h-1zM9 2h2v1h-2zM9 3h2v1h-2zM0 5h1v1h-1zM8 5h1v1h-1zM2 6h1v1h-1zM2 7h1v1h-1zM10 7h1v1h-1zM2 8h1v1h-1zM5 8h1v1h-1zM8 8h1v1h-1zM2 9h1v1h-1zM10 9h1v1h-1zM2 10h1v1h-1zM7 11h1v1h-1zM2 12h2v1h-2zM0 13h1v1h-1zM13 13h1v1h-1z" opacity="0.5"/></g><g id="g146bd4"><path d="M2 0h1v1h-1zM2 1h1v1h-1zM2 2h1v1h-1zM2 3h1v1h-1zM2 4h1v1h-1zM11 4h1v1h-1zM2 5h4v1h-4zM8 5h3v1h-3zM2 6h1v1h-1zM8 6h1v1h-1zM2 7h1v1h-1zM2 8h1v1h-1zM2 9h1v1h-1zM12 9h1v1h-1zM2 10h1v1h-1zM12 10h1v1h-1zM2 11h1v1h-1zM4 11h2v1h-2zM8 11h1v1h-1zM12 11h1v1h-1zM2 12h1v1h-1zM8 12h4v1h-4z"/><path d="M7 0h2v1h-2zM7 1h2v1h-2zM7 2h2v1h-2zM7 3h2v1h-2zM11 3h2v1h-2zM7 4h2v1h-2zM10 4h1v1h-1zM12 4h1v1h-1zM6 5h2v1h-2zM7 6h1v1h-1zM9 6h1v1h-1zM7 7h2v1h-2zM7 8h2v1h-2zM7 9h2v1h-2zM7 10h2v1h-2zM3 11h1v1h-1zM7 11h1v1h-1zM1 12h1v1h-1zM3 12h1v1h-1zM12 12h1v1h-1z" opacity="0.5"/></g><g id="g148f83"><path d="M9 0h1v1h-1zM9 1h1v1h-1zM1 2h4v1h-4zM6 2h7v1h-7zM2 3h1v1h-1zM2 4h1v1h-1zM8 4h1v1h-1zM11 4h1v1h-1zM7 5h1v1h-1zM1 6h1v1h-1zM7 6h1v1h-1zM12 6h1v1h-1zM1 7h4v1h-4zM11 7h1v1h-1zM8 8h1v1h-1zM10 8h1v1h-1zM9 9h2v1h-2zM1 10h4v1h-4zM9 10h1v1h-1zM8 11h3v1h-3zM7 12h2v1h-2zM11 12h1v1h-1zM6 13h1v1h-1zM12 13h1v1h-1z"/><path d="M2 0h2v1h-2zM2 1h2v1h-2zM0 2h1v1h-1zM5 2h1v1h-1zM8 3h1v1h-1zM3 4h1v1h-1zM7 4h1v1h-1zM1 5h4v1h-4zM11 5h2v1h-2zM3 6h2v1h-2zM6 6h1v1h-1zM5 7h4v1h-4zM12 7h1v1h-1zM3 8h2v1h-2zM11 8h1v1h-1zM3 9h2v1h-2zM8 9h1v1h-1zM5 10h1v1h-1zM10 10h1v1h-1zM1 11h1v1h-1zM3 11h2v1h-2zM3 12h2v1h-2zM10 12h1v1h-1zM12 12h1v1h-1zM3 13h2v1h-2zM7 13h1v1h-1z" opacity="0.5"/></g><g id="g145668"><path d="M2 1h4v1h-4zM8 1h4v1h-4zM2 2h1v1h-1zM5 2h1v1h-1zM8 2h1v1h-1zM11 2h1v1h-1zM2 3h1v1h-1zM5 3h1v1h-1zM8 3h1v1h-1zM11 3h1v1h-1zM2 4h4v1h-4zM8 4h4v1h-4zM6 5h1v1h-1zM9 5h2v1h-2zM1 6h12v1h-12zM4 7h1v1h-1zM9 7h1v1h-1zM2 8h2v1h-2zM10 8h2v1h-2zM1 9h5v1h-5zM8 9h5v1h-5zM2 10h1v1h-1zM5 10h1v1h-1zM8 10h1v1h-1zM11 10h1v1h-1zM2 11h1v1h-1zM5 11h1v1h-1zM8 11h1v1h-1zM11 11h1v1h-1zM2 12h4v1h-4zM8 12h4v1h-4zM5 13h1v1h-1zM8 13h1v1h-1z"/><path d="M5 5h1v1h-1zM3 7h1v1h-1zM8 7h1v1h-1zM9 8h1v1h-1zM0 9h1v1h-1zM13 9h1v1h-1zM1 10h1v1h-1zM2 13h1v1h-1zM11 13h1v1h-1z" opacity="0.5"/></g><g id="g148f6c"><path d="M3 1h1v1h-1zM9 1h1v1h-1zM1 2h5v1h-5zM7 2h6v1h-6zM2 3h1v1h-1zM9 3h1v1h-1zM2 4h1v1h-1zM6 5h7v1h-7zM1 6h1v1h-1zM8 6h1v1h-1zM1 7h5v1h-5zM8 7h1v1h-1zM7 8h6v1h-6zM11 9h1v1h-1zM1 10h4v1h-4zM10 10h1v1h-1zM3 11h1v1h-1zM8 11h2v1h-2zM10 12h1v1h-1zM11 13h1v1h-1z"/><path d="M3 0h1v1h-1zM9 0h2v1h-2zM2 1h1v1h-1zM0 2h1v1h-1zM6 2h1v1h-1zM8 3h1v1h-1zM3 4h1v1h-1zM8 4h2v1h-2zM1 5h4v1h-4zM13 5h1v1h-1zM3 6h2v1h-2zM7 7h1v1h-1zM3 8h2v1h-2zM3 9h3v1h-3zM5 10h1v1h-1zM8 10h1v1h-1zM11 10h1v1h-1zM1 11h1v1h-1zM4 11h1v1h-1zM10 11h1v1h-1zM3 12h2v1h-2zM9 12h1v1h-1zM3 13h2v1h-2z" opacity="0.5"/></g><g id="g146362"><path d="M2 0h1v1h-1zM7 0h1v1h-1zM2 1h1v1h-1zM7 1h5v1h-5zM2 2h1v1h-1zM6 2h1v1h-1zM10 2h1v1h-1zM1 3h3v1h-3zM5 3h2v1h-2zM10 3h1v1h-1zM2 4h1v1h-1zM5 4h7v1h-7zM2 5h1v1h-1zM6 5h1v1h-1zM11 5h1v1h-1zM2 6h1v1h-1zM6 6h1v1h-1zM11 6h1v1h-1zM2 7h2v1h-2zM6 7h1v1h-1zM11 7h1v1h-1zM1 8h2v1h-2zM5 8h8v1h-8zM2 9h1v1h-1zM8 9h2v1h-2zM2 10h1v1h-1zM7 10h1v1h-1zM2 11h1v1h-1zM7 11h1v1h-1zM10 11h1v1h-1zM2 12h1v1h-1zM5 12h2v1h-2zM11 12h1v1h-1zM1 13h2v1h-2zM4 13h1v1h-1zM12 13h1v1h-1z"/><path d="M3 0h1v1h-1zM8 0h1v1h-1zM3 1h1v1h-1zM6 1h1v1h-1zM3 2h1v1h-1zM11 2h1v1h-1zM0 3h1v1h-1zM4 3h1v1h-1zM9 3h1v1h-1zM3 4h1v1h-1zM12 4h1v1h-1zM3 5h1v1h-1zM5 5h1v1h-1zM8 5h2v1h-2zM12 5h1v1h-1zM3 6h3v1h-3zM8 6h2v1h-2zM12 6h1v1h-1zM1 7h1v1h-1zM4 7h2v1h-2zM8 7h2v1h-2zM12 7h1v1h-1zM3 8h2v1h-2zM3 9h1v1h-1zM3 10h1v1h-1zM8 10h3v1h-3zM3 11h1v1h-1zM6 11h1v1h-1zM11 11h1v1h-1zM3 12h1v1h-1zM12 12h1v1h-1zM5 13h1v1h-1z" opacity="0.5"/></g><g id="g148ba1"><path d="M9 0h1v1h-1zM2 1h2v1h-2zM9 1h1v1h-1zM3 2h1v1h-1zM9 2h1v1h-1zM9 3h1v1h-1zM9 4h1v1h-1zM1 5h3v1h-3zM5 5h8v1h-8zM3 6h1v1h-1zM9 6h1v1h-1zM3 7h1v1h-1zM9 7h1v1h-1zM3 8h1v1h-1zM9 8h1v1h-1zM3 9h1v1h-1zM9 9h1v1h-1zM3 10h1v1h-1zM5 10h1v1h-1zM9 10h1v1h-1zM3 11h2v1h-2zM9 11h1v1h-1zM2 12h2v1h-2zM9 12h1v1h-1zM9 13h1v1h-1z"/><path d="M2 0h1v1h-1zM4 2h1v1h-1zM0 5h1v1h-1zM13 5h1v1h-1zM8 6h1v1h-1zM5 11h1v1h-1z" opacity="0.5"/></g><g id="g146570"><path d="M6 1h1v1h-1zM8 2h1v1h-1zM1 3h6v1h-6zM8 3h5v1h-5zM3 4h3v1h-3zM8 4h1v1h-1zM11 4h1v1h-1zM2 5h1v1h-1zM6 5h1v1h-1zM8 5h1v1h-1zM11 5h1v1h-1zM1 6h1v1h-1zM7 6h1v1h-1zM11 6h1v1h-1zM3 7h1v1h-1zM9 7h1v1h-1zM1 8h6v1h-6zM9 8h2v1h-2zM2 9h1v1h-1zM5 9h1v1h-1zM10 9h1v1h-1zM2 10h1v1h-1zM5 10h1v1h-1zM9 10h2v1h-2zM3 11h2v1h-2zM9 11h1v1h-1zM11 11h1v1h-1zM2 12h2v1h-2zM7 12h2v1h-2zM12 12h1v1h-1zM1 13h1v1h-1z"/><path d="M3 0h2v1h-2zM6 0h1v1h-1zM9 0h1v1h-1zM1 1h5v1h-5zM8 1h2v1h-2zM2 2h4v1h-4zM9 2h1v1h-1zM7 3h1v1h-1zM2 4h1v1h-1zM1 5h1v1h-1zM3 5h3v1h-3zM7 5h1v1h-1zM9 5h1v1h-1zM3 6h2v1h-2zM8 6h2v1h-2zM7 7h1v1h-1zM10 7h2v1h-2zM6 9h1v1h-1zM9 9h1v1h-1zM3 10h2v1h-2zM5 11h1v1h-1zM8 11h1v1h-1zM10 11h1v1h-1zM1 12h1v1h-1zM5 12h1v1h-1zM11 12h1v1h-1zM6 13h2v1h-2zM12 13h1v1h-1z" opacity="0.5"/></g><g id="g148df3"><path d="M10 0h1v1h-1zM1 1h4v1h-4zM10 1h1v1h-1zM1 2h1v1h-1zM4 2h1v1h-1zM10 2h1v1h-1zM12 2h1v1h-1zM1 3h1v1h-1zM4 3h1v1h-1zM6 3h1v1h-1zM10 3h1v1h-1zM12 3h1v1h-1zM1 4h4v1h-4zM7 4h1v1h-1zM10 4h2v1h-2zM3 5h1v1h-1zM10 5h2v1h-2zM3 6h1v1h-1zM10 6h1v1h-1zM1 7h1v1h-1zM3 7h2v1h-2zM10 7h1v1h-1zM1 8h1v1h-1zM3 8h1v1h-1zM7 8h1v1h-1zM10 8h2v1h-2zM1 9h1v1h-1zM3 9h1v1h-1zM5 9h1v1h-1zM7 9h1v1h-1zM10 9h1v1h-1zM12 9h1v1h-1zM1 10h1v1h-1zM3 10h1v1h-1zM7 10h1v1h-1zM10 10h1v1h-1zM1 11h1v1h-1zM3 11h2v1h-2zM7 11h1v1h-1zM10 11h1v1h-1zM1 12h2v1h-2zM6 12h1v1h-1zM10 12h1v1h-1zM10 13h3v1h-3z"/><path d="M7 0h2v1h-2zM7 1h2v1h-2zM5 2h4v1h-4zM5 3h1v1h-1zM7 3h2v1h-2zM6 4h1v1h-1zM8 4h1v1h-1zM12 4h1v1h-1zM7 5h2v1h-2zM7 6h2v1h-2zM5 7h1v1h-1zM7 7h2v1h-2zM11 7h1v1h-1zM6 8h1v1h-1zM8 8h1v1h-1zM12 8h1v1h-1zM6 9h1v1h-1zM8 9h1v1h-1zM13 9h1v1h-1zM5 10h1v1h-1zM2 11h1v1h-1zM5 11h2v1h-2zM0 12h1v1h-1zM3 12h1v1h-1zM5 12h1v1h-1zM12 12h2v1h-2zM5 13h1v1h-1z" opacity="0.5"/></g><g id="g146574"><path d="M1 1h6v1h-6zM8 2h5v1h-5zM1 3h8v1h-8zM11 3h1v1h-1zM1 4h6v1h-6zM9 4h1v1h-1zM11 4h1v1h-1zM3 5h2v1h-2zM10 5h1v1h-1zM2 6h1v1h-1zM9 6h3v1h-3zM7 7h1v1h-1zM12 7h1v1h-1zM2 8h10v1h-10zM3 10h1v1h-1zM7 10h4v1h-4zM3 11h1v1h-1zM3 12h1v1h-1zM1 13h12v1h-12z"/><path d="M3 0h2v1h-2zM9 0h1v1h-1zM8 1h2v1h-2zM3 2h2v1h-2zM13 2h1v1h-1zM9 3h1v1h-1zM7 4h1v1h-1zM10 4h1v1h-1zM2 5h1v1h-1zM5 5h1v1h-1zM9 5h1v1h-1zM1 6h1v1h-1zM3 6h4v1h-4zM8 6h1v1h-1zM1 7h1v1h-1zM3 7h2v1h-2zM8 7h1v1h-1zM11 7h1v1h-1zM1 8h1v1h-1zM12 8h1v1h-1zM6 9h2v1h-2zM6 10h1v1h-1zM11 10h1v1h-1zM6 11h2v1h-2zM6 12h2v1h-2zM0 13h1v1h-1zM13 13h1v1h-1z" opacity="0.5"/></g><g id="g1451fd"><path d="M3 1h8v1h-8zM9 2h1v1h-1zM7 3h1v1h-1zM1 4h1v1h-1zM10 4h1v1h-1zM12 4h1v1h-1zM1 5h1v1h-1zM4 5h1v1h-1zM9 5h1v1h-1zM12 5h1v1h-1zM1 6h1v1h-1zM7 6h2v1h-2zM12 6h1v1h-1zM1 7h1v1h-1zM5 7h4v1h-4zM12 7h1v1h-1zM1 8h1v1h-1zM4 8h1v1h-1zM9 8h1v1h-1zM12 8h1v1h-1zM1 9h1v1h-1zM3 9h1v1h-1zM10 9h1v1h-1zM12 9h1v1h-1zM1 10h1v1h-1zM5 10h2v1h-2zM12 10h1v1h-1zM1 11h1v1h-1zM12 11h1v1h-1zM1 12h12v1h-12zM12 13h1v1h-1z"/><path d="M2 1h1v1h-1zM8 2h1v1h-1zM1 3h1v1h-1zM8 3h1v1h-1zM12 3h1v1h-1zM3 4h1v1h-1zM6 4h2v1h-2zM3 5h1v1h-1zM6 5h2v1h-2zM4 6h1v1h-1zM6 6h1v1h-1zM9 6h1v1h-1zM9 7h1v1h-1zM2 8h2v1h-2zM5 8h3v1h-3zM10 8h1v1h-1zM2 9h1v1h-1zM6 9h2v1h-2zM11 9h1v1h-1zM7 10h1v1h-1z" opacity="0.5"/></g><g id="g146d6e"><path d="M11 0h1v1h-1zM2 1h2v1h-2zM5 1h4v1h-4zM8 2h1v1h-1zM11 2h1v1h-1zM8 3h1v1h-1zM11 3h1v1h-1zM1 4h1v1h-1zM6 4h1v1h-1zM2 5h1v1h-1zM5 5h7v1h-7zM10 6h1v1h-1zM9 7h1v1h-1zM8 8h1v1h-1zM3 9h10v1h-10zM2 10h1v1h-1zM8 10h1v1h-1zM2 11h1v1h-1zM8 11h1v1h-1zM1 12h1v1h-1zM8 12h1v1h-1zM7 13h2v1h-2z"/><path d="M1 0h2v1h-2zM9 0h2v1h-2zM12 0h1v1h-1zM4 1h1v1h-1zM9 1h3v1h-3zM3 2h1v1h-1zM5 2h1v1h-1zM5 3h2v1h-2zM10 3h1v1h-1zM8 4h1v1h-1zM10 4h1v1h-1zM1 5h1v1h-1zM3 5h1v1h-1zM11 6h1v1h-1zM10 7h1v1h-1zM3 8h1v1h-1zM9 8h1v1h-1zM2 9h1v1h-1zM3 10h1v1h-1zM9 10h1v1h-1zM9 11h1v1h-1zM2 12h1v1h-1zM9 12h1v1h-1zM1 13h1v1h-1zM6 13h1v1h-1z" opacity="0.5"/></g><g id="g1470b9"><path d="M6 0h1v1h-1zM6 1h1v1h-1zM6 2h7v1h-7zM6 3h1v1h-1zM6 4h1v1h-1zM2 5h10v1h-10zM2 6h1v1h-1zM11 6h1v1h-1zM2 7h1v1h-1zM11 7h1v1h-1zM2 8h10v1h-10zM2 10h1v1h-1zM11 10h1v1h-1zM2 11h1v1h-1zM5 11h1v1h-1zM8 11h1v1h-1zM11 11h1v1h-1zM1 12h1v1h-1zM5 12h1v1h-1zM8 12h1v1h-1zM12 12h1v1h-1z"/><path d="M7 0h1v1h-1zM7 1h1v1h-1zM7 3h1v1h-1zM7 4h1v1h-1zM3 6h1v1h-1zM10 6h1v1h-1zM3 7h1v1h-1zM10 7h1v1h-1zM5 10h1v1h-1zM8 10h1v1h-1zM12 11h1v1h-1zM2 12h1v1h-1zM9 12h1v1h-1zM1 13h1v1h-1zM5 13h1v1h-1zM9 13h1v1h-1zM12 13h1v1h-1z" opacity="0.5"/></g><g id="g1479fb"><path d="M2 1h3v1h-3zM8 1h1v1h-1zM3 2h1v1h-1zM7 2h5v1h-5zM3 3h1v1h-1zM6 3h1v1h-1zM10 3h2v1h-2zM1 4h4v1h-4zM8 4h2v1h-2zM3 5h1v1h-1zM7 5h3v1h-3zM2 6h2v1h-2zM6 6h1v1h-1zM9 6h1v1h-1zM2 7h3v1h-3zM8 7h5v1h-5zM3 8h1v1h-1zM7 8h2v1h-2zM12 8h1v1h-1zM1 9h1v1h-1zM3 9h1v1h-1zM6 9h1v1h-1zM11 9h1v1h-1zM3 10h1v1h-1zM9 10h2v1h-2zM3 11h1v1h-1zM9 11h1v1h-1zM3 12h1v1h-1zM7 12h2v1h-2zM3 13h1v1h-1zM5 13h2v1h-2z"/><path d="M4 0h1v1h-1zM9 0h1v1h-1zM1 1h1v1h-1zM9 1h1v1h-1zM1 2h2v1h-2zM12 2h1v1h-1zM5 3h1v1h-1zM7 3h2v1h-2zM0 4h1v1h-1zM5 4h1v1h-1zM10 4h1v1h-1zM2 5h1v1h-1zM6 5h1v1h-1zM10 5h1v1h-1zM4 6h2v1h-2zM7 6h1v1h-1zM10 6h1v1h-1zM1 8h2v1h-2zM4 8h1v1h-1zM7 9h2v1h-2zM12 9h1v1h-1zM0 10h2v1h-2zM8 10h1v1h-1zM11 10h1v1h-1zM8 11h1v1h-1zM10 11h1v1h-1zM6 12h1v1h-1zM7 13h1v1h-1z" opacity="0.5"/></g><g id="g1452a8"><path d="M9 0h1v1h-1zM1 1h5v1h-5zM9 1h1v1h-1zM9 2h1v1h-1zM7 3h6v1h-6zM9 4h1v1h-1zM12 4h1v1h-1zM1 5h6v1h-6zM9 5h1v1h-1zM12 5h1v1h-1zM3 6h1v1h-1zM9 6h1v1h-1zM12 6h1v1h-1zM2 7h1v1h-1zM9 7h1v1h-1zM12 7h1v1h-1zM2 8h1v1h-1zM5 8h1v1h-1zM12 8h1v1h-1zM2 9h1v1h-1zM12 9h1v1h-1zM2 10h1v1h-1zM4 10h3v1h-3zM8 10h1v1h-1zM12 10h1v1h-1zM1 11h3v1h-3zM6 11h1v1h-1zM8 11h1v1h-1zM12 11h1v1h-1zM7 12h1v1h-1zM12 12h1v1h-1zM7 13h1v1h-1zM9 13h3v1h-3z"/><path d="M6 1h1v1h-1zM2 6h1v1h-1zM3 7h1v1h-1zM5 7h1v1h-1zM8 8h2v1h-2zM5 9h2v1h-2zM8 9h2v1h-2zM1 10h1v1h-1zM3 10h1v1h-1zM4 11h1v1h-1zM7 11h1v1h-1zM8 12h1v1h-1zM11 12h1v1h-1zM6 13h1v1h-1z" opacity="0.5"/></g><g id="g1463a7"><path d="M2 0h1v1h-1zM2 1h1v1h-1zM9 1h1v1h-1zM2 2h1v1h-1zM5 2h8v1h-8zM1 3h5v1h-5zM12 3h1v1h-1zM2 4h1v1h-1zM10 4h1v1h-1zM2 5h1v1h-1zM7 5h1v1h-1zM11 5h1v1h-1zM2 6h1v1h-1zM6 6h1v1h-1zM12 6h1v1h-1zM2 7h2v1h-2zM1 8h3v1h-3zM6 8h6v1h-6zM2 9h1v1h-1zM9 9h1v1h-1zM2 10h1v1h-1zM9 10h1v1h-1zM2 11h1v1h-1zM9 11h1v1h-1zM2 12h1v1h-1zM5 12h8v1h-8zM1 13h2v1h-2z"/><path d="M8 0h2v1h-2zM8 1h1v1h-1zM13 2h1v1h-1zM0 3h1v1h-1zM13 3h1v1h-1zM5 4h1v1h-1zM7 4h2v1h-2zM12 4h1v1h-1zM6 5h1v1h-1zM10 5h1v1h-1zM5 6h1v1h-1zM11 6h1v1h-1zM4 7h1v1h-1zM12 8h1v1h-1zM1 9h1v1h-1zM8 9h1v1h-1zM8 10h1v1h-1zM8 11h1v1h-1zM4 12h1v1h-1zM13 12h1v1h-1z" opacity="0.5"/></g><g id="g145236"><path d="M4 0h1v1h-1zM12 0h1v1h-1zM2 1h1v1h-1zM4 1h1v1h-1zM12 1h1v1h-1zM1 2h7v1h-7zM12 2h1v1h-1zM1 3h1v1h-1zM4 3h1v1h-1zM12 3h1v1h-1zM4 4h1v1h-1zM12 4h1v1h-1zM1 5h7v1h-7zM12 5h1v1h-1zM4 6h1v1h-1zM12 6h1v1h-1zM1 7h7v1h-7zM12 7h1v1h-1zM1 8h1v1h-1zM4 8h1v1h-1zM7 8h1v1h-1zM12 8h1v1h-1zM1 9h1v1h-1zM4 9h1v1h-1zM7 9h1v1h-1zM12 9h1v1h-1zM1 10h1v1h-1zM4 10h1v1h-1zM7 10h1v1h-1zM12 10h1v1h-1zM1 11h1v1h-1zM4 11h1v1h-1zM7 11h1v1h-1zM12 11h1v1h-1zM1 12h1v1h-1zM4 12h1v1h-1zM6 12h2v1h-2zM12 12h1v1h-1zM4 13h1v1h-1zM10 13h2v1h-2z"/><path d="M2 0h1v1h-1zM1 1h1v1h-1zM9 1h2v1h-2zM9 2h2v1h-2zM9 3h2v1h-2zM1 4h1v1h-1zM9 4h2v1h-2zM0 5h1v1h-1zM8 5h3v1h-3zM9 6h2v1h-2zM9 7h2v1h-2zM9 8h2v1h-2zM9 9h2v1h-2zM5 12h1v1h-1zM12 13h1v1h-1z" opacity="0.5"/></g><g id="g145faa"><path d="M2 1h1v1h-1zM6 1h5v1h-5zM2 2h1v1h-1zM5 2h1v1h-1zM9 2h1v1h-1zM1 3h1v1h-1zM5 3h1v1h-1zM9 3h1v1h-1zM3 4h1v1h-1zM5 4h8v1h-8zM2 5h1v1h-1zM5 5h1v1h-1zM9 5h1v1h-1zM1 6h2v1h-2zM5 6h1v1h-1zM7 6h5v1h-5zM1 7h2v1h-2zM5 7h1v1h-1zM2 8h1v1h-1zM5 8h1v1h-1zM7 8h5v1h-5zM2 9h1v1h-1zM5 9h1v1h-1zM2 10h1v1h-1zM7 10h5v1h-5zM2 11h1v1h-1zM2 12h1v1h-1zM4 12h1v1h-1zM7 12h5v1h-5zM4 13h1v1h-1z"/><path d="M3 0h1v1h-1zM10 0h2v1h-2zM3 1h1v1h-1zM5 1h1v1h-1zM11 1h1v1h-1zM1 2h1v1h-1zM6 2h1v1h-1zM3 5h1v1h-1zM6 6h1v1h-1zM12 6h1v1h-1zM0 7h1v1h-1zM6 7h2v1h-2zM11 7h2v1h-2zM6 8h1v1h-1zM12 8h1v1h-1zM4 9h1v1h-1zM6 9h2v1h-2zM11 9h2v1h-2zM4 10h3v1h-3zM12 10h1v1h-1zM4 11h4v1h-4zM11 11h2v1h-2zM6 12h1v1h-1zM12 12h1v1h-1zM2 13h1v1h-1zM6 13h2v1h-2zM11 13h2v1h-2z" opacity="0.5"/></g><g id="g1473af"><path d="M1 1h4v1h-4zM6 1h7v1h-7zM2 2h1v1h-1zM9 2h1v1h-1zM2 3h1v1h-1zM8 3h1v1h-1zM2 4h1v1h-1zM8 4h2v1h-2zM1 5h3v1h-3zM7 5h2v1h-2zM10 5h1v1h-1zM2 6h1v1h-1zM7 6h1v1h-1zM11 6h1v1h-1zM2 7h1v1h-1zM6 7h1v1h-1zM12 7h1v1h-1zM2 8h1v1h-1zM5 8h1v1h-1zM12 8h1v1h-1zM2 9h1v1h-1zM2 10h2v1h-2zM1 11h1v1h-1z"/><path d="M0 1h1v1h-1zM5 1h1v1h-1zM9 3h1v1h-1zM10 4h1v1h-1zM4 5h1v1h-1zM9 5h1v1h-1zM6 6h1v1h-1zM8 6h3v1h-3zM5 7h1v1h-1zM8 7h2v1h-2zM11 7h1v1h-1zM6 8h1v1h-1zM8 8h2v1h-2zM3 9h2v1h-2zM8 9h2v1h-2zM1 10h1v1h-1zM4 10h1v1h-1zM8 10h2v1h-2zM0 11h1v1h-1zM2 11h1v1h-1zM8 11h2v1h-2zM8 12h2v1h-2zM8 13h2v1h-2z" opacity="0.5"/></g><g id="g1472b6"><path d="M8 1h1v1h-1zM11 1h1v1h-1zM8 2h1v1h-1zM11 2h1v1h-1zM1 3h1v1h-1zM8 3h1v1h-1zM12 3h1v1h-1zM2 4h1v1h-1zM8 4h1v1h-1zM3 5h1v1h-1zM5 5h8v1h-8zM8 6h1v1h-1zM3 7h1v1h-1zM8 7h2v1h-2zM2 8h2v1h-2zM8 8h2v1h-2zM1 9h1v1h-1zM7 9h1v1h-1zM7 10h1v1h-1zM10 10h1v1h-1zM6 11h1v1h-1zM11 11h1v1h-1zM5 12h2v1h-2zM11 12h2v1h-2zM4 13h2v1h-2zM12 13h1v1h-1z"/><path d="M3 0h2v1h-2zM8 0h1v1h-1zM3 1h2v1h-2zM10 1h1v1h-1zM1 2h1v1h-1zM3 2h2v1h-2zM12 2h1v1h-1zM2 3h3v1h-3zM11 3h1v1h-1zM3 4h2v1h-2zM9 4h1v1h-1zM2 5h1v1h-1zM4 5h1v1h-1zM13 5h1v1h-1zM3 6h2v1h-2zM9 6h1v1h-1zM4 7h1v1h-1zM4 8h1v1h-1zM7 8h1v1h-1zM2 9h3v1h-3zM8 9h3v1h-3zM1 10h1v1h-1zM3 10h2v1h-2zM3 11h2v1h-2zM7 11h1v1h-1zM10 11h1v1h-1zM3 12h2v1h-2zM3 13h1v1h-1zM13 13h1v1h-1z" opacity="0.5"/></g><g id="g146001"><path d="M6 1h1v1h-1zM1 2h12v1h-12zM6 3h2v1h-2zM5 4h1v1h-1zM8 4h1v1h-1zM5 5h1v1h-1zM8 5h2v1h-2zM4 6h1v1h-1zM6 6h1v1h-1zM9 6h2v1h-2zM2 7h2v1h-2zM7 7h1v1h-1zM10 7h3v1h-3zM1 8h1v1h-1zM6 9h1v1h-1zM2 10h1v1h-1zM4 10h1v1h-1zM7 10h1v1h-1zM11 10h1v1h-1zM4 11h1v1h-1zM1 12h1v1h-1zM4 12h1v1h-1zM10 12h1v1h-1zM12 12h1v1h-1zM4 13h6v1h-6z"/><path d="M6 0h2v1h-2zM7 1h1v1h-1zM5 3h1v1h-1zM8 3h1v1h-1zM6 4h1v1h-1zM4 5h1v1h-1zM3 6h1v1h-1zM5 6h1v1h-1zM1 7h1v1h-1zM6 7h1v1h-1zM6 8h2v1h-2zM12 8h1v1h-1zM2 9h1v1h-1zM4 9h1v1h-1zM7 9h1v1h-1zM11 9h1v1h-1zM8 10h1v1h-1zM1 11h2v1h-2zM8 11h1v1h-1zM10 11h3v1h-3zM9 12h1v1h-1zM1 13h1v1h-1zM10 13h1v1h-1zM12 13h1v1h-1z" opacity="0.5"/></g><g id="g145b9a"><path d="M6 0h1v1h-1zM1 2h12v1h-12zM1 3h1v1h-1zM12 3h1v1h-1zM1 4h1v1h-1zM12 4h1v1h-1zM3 5h8v1h-8zM3 7h1v1h-1zM3 8h1v1h-1zM7 8h5v1h-5zM3 9h1v1h-1zM2 10h2v1h-2zM2 11h1v1h-1zM4 11h1v1h-1zM1 12h2v1h-2zM5 12h3v1h-3zM1 13h1v1h-1zM7 13h6v1h-6z"/><path d="M6 1h2v1h-2zM6 6h2v1h-2zM6 7h2v1h-2zM6 8h1v1h-1zM2 9h1v1h-1zM6 9h2v1h-2zM4 10h1v1h-1zM6 10h2v1h-2zM5 11h3v1h-3zM6 13h1v1h-1z" opacity="0.5"/></g><g id="g1465f6"><path d="M11 0h1v1h-1zM1 1h4v1h-4zM11 1h1v1h-1zM1 2h1v1h-1zM11 2h1v1h-1zM1 3h1v1h-1zM6 3h7v1h-7zM1 4h1v1h-1zM11 4h1v1h-1zM1 5h1v1h-1zM11 5h1v1h-1zM1 6h4v1h-4zM7 6h1v1h-1zM11 6h1v1h-1zM1 7h1v1h-1zM8 7h1v1h-1zM11 7h1v1h-1zM1 8h1v1h-1zM8 8h1v1h-1zM11 8h1v1h-1zM1 9h1v1h-1zM11 9h1v1h-1zM1 10h4v1h-4zM11 10h1v1h-1zM1 11h1v1h-1zM11 11h1v1h-1zM11 12h1v1h-1zM8 13h3v1h-3z"/><path d="M10 0h1v1h-1zM5 1h1v1h-1zM10 1h1v1h-1zM4 2h2v1h-2zM10 2h1v1h-1zM4 3h2v1h-2zM13 3h1v1h-1zM4 4h2v1h-2zM10 4h1v1h-1zM4 5h2v1h-2zM10 5h1v1h-1zM5 6h1v1h-1zM10 6h1v1h-1zM4 7h2v1h-2zM7 7h1v1h-1zM10 7h1v1h-1zM4 8h2v1h-2zM9 8h2v1h-2zM4 9h2v1h-2zM10 9h1v1h-1zM5 10h1v1h-1zM10 10h1v1h-1zM10 11h1v1h-1zM1 12h1v1h-1zM10 12h1v1h-1zM11 13h1v1h-1z" opacity="0.5"/></g><g id="g145b57"><path d="M6 0h1v1h-1zM7 1h1v1h-1zM1 2h12v1h-12zM1 3h1v1h-1zM12 3h1v1h-1zM1 4h1v1h-1zM3 4h7v1h-7zM12 4h1v1h-1zM8 5h2v1h-2zM7 6h2v1h-2zM7 7h1v1h-1zM1 8h12v1h-12zM6 12h1v1h-1zM4 13h3v1h-3z"/><path d="M6 1h1v1h-1zM10 4h1v1h-1zM10 5h1v1h-1zM6 7h1v1h-1zM6 9h2v1h-2zM6 10h2v1h-2zM6 11h2v1h-2zM7 12h1v1h-1z" opacity="0.5"/></g><g id="g145757"><path d="M8 1h1v1h-1zM8 2h1v1h-1zM6 3h6v1h-6zM1 4h4v1h-4zM8 4h1v1h-1zM11 4h1v1h-1zM8 5h1v1h-1zM11 5h1v1h-1zM8 6h1v1h-1zM11 6h1v1h-1zM5 7h8v1h-8zM8 8h2v1h-2zM2 9h2v1h-2zM9 9h1v1h-1zM1 10h1v1h-1zM7 10h1v1h-1zM10 10h1v1h-1zM6 11h1v1h-1zM10 11h2v1h-2zM5 12h2v1h-2zM11 12h2v1h-2zM12 13h1v1h-1z"/><path d="M2 0h1v1h-1zM8 0h1v1h-1zM2 1h2v1h-2zM2 2h2v1h-2zM2 3h2v1h-2zM5 3h1v1h-1zM12 3h1v1h-1zM12 4h1v1h-1zM2 5h2v1h-2zM12 5h1v1h-1zM2 6h2v1h-2zM12 6h1v1h-1zM2 7h2v1h-2zM13 7h1v1h-1zM2 8h3v1h-3zM4 9h1v1h-1zM7 9h2v1h-2zM10 9h1v1h-1zM0 10h1v1h-1zM2 10h1v1h-1zM9 10h1v1h-1zM7 11h1v1h-1zM4 13h2v1h-2z" opacity="0.5"/></g><g id="g14591a"><path d="M6 0h1v1h-1zM5 1h6v1h-6zM3 2h2v1h-2zM9 2h1v1h-1zM2 3h2v1h-2zM8 3h2v1h-2zM5 4h1v1h-1zM7 4h2v1h-2zM6 5h1v1h-1zM4 6h2v1h-2zM8 6h1v1h-1zM1 7h3v1h-3zM7 7h6v1h-6zM6 8h1v1h-1zM11 8h1v1h-1zM4 9h1v1h-1zM10 9h2v1h-2zM7 10h1v1h-1zM9 10h2v1h-2zM7 11h2v1h-2zM4 12h3v1h-3zM1 13h2v1h-2z"/><path d="M4 1h1v1h-1zM10 2h1v1h-1zM4 3h1v1h-1zM2 4h1v1h-1zM6 4h1v1h-1zM5 5h1v1h-1zM7 5h3v1h-3zM3 6h1v1h-1zM6 7h1v1h-1zM5 8h1v1h-1zM12 8h1v1h-1zM3 9h1v1h-1zM5 9h3v1h-3zM3 10h1v1h-1zM8 10h1v1h-1zM6 11h1v1h-1zM9 11h1v1h-1zM2 12h2v1h-2zM7 12h1v1h-1zM3 13h2v1h-2z" opacity="0.5"/></g><g id="g1491cd"><path d="M10 0h1v1h-1zM2 1h6v1h-6zM1 3h12v1h-12zM2 5h10v1h-10zM2 6h10v1h-10zM2 7h1v1h-1zM11 7h1v1h-1zM2 8h10v1h-10zM2 10h10v1h-10zM1 12h12v1h-12z"/><path d="M7 0h3v1h-3zM11 0h1v1h-1zM8 1h2v1h-2zM6 2h2v1h-2zM6 4h2v1h-2zM6 7h2v1h-2zM6 9h2v1h-2zM12 10h1v1h-1zM6 11h2v1h-2z" opacity="0.5"/></g><g id="g145b9e"><path d="M6 0h1v1h-1zM7 1h1v1h-1zM1 2h12v1h-12zM1 3h1v1h-1zM12 3h1v1h-1zM1 4h1v1h-1zM4 4h1v1h-1zM7 4h1v1h-1zM12 4h1v1h-1zM5 5h1v1h-1zM7 5h1v1h-1zM2 6h1v1h-1zM7 6h1v1h-1zM3 7h1v1h-1zM7 7h1v1h-1zM7 8h1v1h-1zM1 9h12v1h-12zM6 10h1v1h-1zM5 11h1v1h-1zM9 11h1v1h-1zM3 12h2v1h-2zM11 12h1v1h-1zM2 13h1v1h-1z"/><path d="M6 1h1v1h-1zM2 3h1v1h-1zM11 3h1v1h-1zM3 4h1v1h-1zM4 5h1v1h-1zM3 6h1v1h-1zM4 7h1v1h-1zM6 8h1v1h-1zM5 10h1v1h-1zM8 10h1v1h-1zM4 11h1v1h-1zM8 11h1v1h-1zM10 11h1v1h-1zM2 12h1v1h-1zM10 12h1v1h-1zM12 12h1v1h-1zM1 13h1v1h-1zM3 13h1v1h-1zM12 13h1v1h-1z" opacity="0.5"/></g><g id="g144f8b"><path d="M12 0h1v1h-1zM4 1h5v1h-5zM12 1h1v1h-1zM2 2h1v1h-1zM12 2h1v1h-1zM2 3h1v1h-1zM5 3h1v1h-1zM12 3h1v1h-1zM1 4h2v1h-2zM5 4h4v1h-4zM12 4h1v1h-1zM1 5h2v1h-2zM5 5h1v1h-1zM12 5h1v1h-1zM2 6h1v1h-1zM4 6h1v1h-1zM7 6h1v1h-1zM12 6h1v1h-1zM2 7h1v1h-1zM4 7h1v1h-1zM7 7h1v1h-1zM12 7h1v1h-1zM2 8h1v1h-1zM5 8h3v1h-3zM12 8h1v1h-1zM2 9h1v1h-1zM6 9h2v1h-2zM12 9h1v1h-1zM2 10h1v1h-1zM6 10h1v1h-1zM12 10h1v1h-1zM2 11h1v1h-1zM6 11h1v1h-1zM12 11h1v1h-1zM2 12h1v1h-1zM5 12h1v1h-1zM12 12h1v1h-1zM2 13h1v1h-1zM4 13h1v1h-1zM10 13h2v1h-2z"/><path d="M3 0h1v1h-1zM2 1h2v1h-2zM5 2h2v1h-2zM9 2h2v1h-2zM1 3h1v1h-1zM6 3h1v1h-1zM9 3h2v1h-2zM9 4h2v1h-2zM0 5h1v1h-1zM4 5h1v1h-1zM7 5h4v1h-4zM5 6h1v1h-1zM8 6h3v1h-3zM9 7h2v1h-2zM4 8h1v1h-1zM9 8h2v1h-2zM9 9h2v1h-2zM5 11h1v1h-1zM12 13h1v1h-1z" opacity="0.5"/></g><g id="g145e93"><path d="M7 1h1v1h-1zM2 2h11v1h-11zM2 3h1v1h-1zM2 4h1v1h-1zM4 4h9v1h-9zM2 5h1v1h-1zM6 5h1v1h-1zM2 6h1v1h-1zM5 6h1v1h-1zM5 7h1v1h-1zM8 7h1v1h-1zM4 8h8v1h-8zM8 9h1v1h-1zM1 10h1v1h-1zM8 10h1v1h-1zM1 11h1v1h-1zM3 11h10v1h-10zM1 12h1v1h-1zM8 12h1v1h-1zM8 13h1v1h-1z"/><path d="M7 0h1v1h-1zM1 2h1v1h-1zM13 2h1v1h-1zM1 3h1v1h-1zM6 3h2v1h-2zM1 4h1v1h-1zM3 4h1v1h-1zM1 5h1v1h-1zM5 5h1v1h-1zM1 6h1v1h-1zM8 6h1v1h-1zM1 7h2v1h-2zM4 7h1v1h-1zM9 7h1v1h-1zM1 8h2v1h-2zM12 8h1v1h-1zM1 9h2v1h-2zM9 9h1v1h-1zM2 10h1v1h-1zM9 10h1v1h-1zM13 11h1v1h-1zM9 12h1v1h-1zM0 13h2v1h-2zM9 13h1v1h-1z" opacity="0.5"/></g><g id="g1563a5"><path d="M9 1h1v1h-1zM6 2h8v1h-8zM2 3h1v1h-1zM1 4h4v1h-4zM7 4h1v1h-1zM11 4h1v1h-1zM11 5h1v1h-1zM5 6h9v1h-9zM2 7h2v1h-2zM8 7h1v1h-1zM1 8h3v1h-3zM5 8h9v1h-9zM7 9h1v1h-1zM11 9h1v1h-1zM7 10h1v1h-1zM11 10h1v1h-1zM7 11h2v1h-2zM10 11h2v1h-2zM9 12h2v1h-2zM2 13h1v1h-1zM8 13h2v1h-2zM11 13h2v1h-2zM1 14h2v1h-2zM5 14h2v1h-2zM13 14h1v1h-1z"/><path d="M2 0h2v1h-2zM9 0h1v1h-1zM2 1h2v1h-2zM2 2h2v1h-2zM3 3h1v1h-1zM7 3h1v1h-1zM11 3h1v1h-1zM0 4h1v1h-1zM8 4h1v1h-1zM2 5h2v1h-2zM7 5h2v1h-2zM10 5h1v1h-1zM2 6h2v1h-2zM4 7h1v1h-1zM9 7h1v1h-1zM0 8h1v1h-1zM14 8h1v1h-1zM2 9h2v1h-2zM12 9h1v1h-1zM2 10h2v1h-2zM6 10h1v1h-1zM2 11h2v1h-2zM6 11h1v1h-1zM9 11h1v1h-1zM2 12h2v1h-2zM8 12h1v1h-1zM11 12h1v1h-1zM3 13h1v1h-1zM6 13h2v1h-2zM10 13h1v1h-1zM7 14h1v1h-1zM12 14h1v1h-1z" opacity="0.5"/></g><g id="g1553e3"><path d="M2 2h11v1h-11zM2 3h1v1h-1zM12 3h1v1h-1zM2 4h1v1h-1zM12 4h1v1h-1zM2 5h1v1h-1zM12 5h1v1h-1zM2 6h1v1h-1zM12 6h1v1h-1zM2 7h1v1h-1zM12 7h1v1h-1zM2 8h1v1h-1zM12 8h1v1h-1zM2 9h1v1h-1zM12 9h1v1h-1zM2 10h1v1h-1zM12 10h1v1h-1zM2 11h1v1h-1zM12 11h1v1h-1zM2 12h11v1h-11zM2 13h1v1h-1zM12 13h1v1h-1z"/><path d="M2 14h1v1h-1zM12 14h1v1h-1z" opacity="0.5"/></g><g id="g155185"><path d="M7 0h1v1h-1zM7 1h1v1h-1zM7 2h1v1h-1zM2 3h11v1h-11zM7 4h1v1h-1zM7 5h1v1h-1zM7 6h1v1h-1zM6 7h3v1h-3zM6 8h1v1h-1zM9 8h1v1h-1zM5 9h1v1h-1zM10 9h1v1h-1zM4 10h1v1h-1zM10 10h2v1h-2zM12 13h1v1h-1zM10 14h3v1h-3z"/><path d="M1 3h1v1h-1zM13 3h1v1h-1zM1 4h2v1h-2zM12 4h2v1h-2zM1 5h2v1h-2zM12 5h2v1h-2zM1 6h2v1h-2zM6 6h1v1h-1zM12 6h2v1h-2zM1 7h2v1h-2zM12 7h2v1h-2zM1 8h2v1h-2zM5 8h1v1h-1zM8 8h1v1h-1zM12 8h2v1h-2zM1 9h2v1h-2zM4 9h1v1h-1zM9 9h1v1h-1zM12 9h2v1h-2zM1 10h3v1h-3zM5 10h1v1h-1zM12 10h2v1h-2zM1 11h3v1h-3zM12 11h2v1h-2zM1 12h2v1h-2zM12 12h2v1h-2zM1 13h2v1h-2zM13 13h1v1h-1zM1 14h2v1h-2z" opacity="0.5"/></g><g id="g155bb9"><path d="M7 0h1v1h-1zM7 1h1v1h-1zM1 2h13v1h-13zM1 3h1v1h-1zM13 3h1v1h-1zM4 4h2v1h-2zM9 4h1v1h-1zM3 5h2v1h-2zM7 5h1v1h-1zM10 5h2v1h-2zM2 6h2v1h-2zM7 6h2v1h-2zM11 6h2v1h-2zM6 7h1v1h-1zM8 7h2v1h-2zM5 8h1v1h-1zM9 8h2v1h-2zM3 9h2v1h-2zM10 9h3v1h-3zM1 10h11v1h-11zM13 10h1v1h-1zM3 11h1v1h-1zM11 11h1v1h-1zM3 12h1v1h-1zM11 12h1v1h-1zM3 13h9v1h-9z"/><path d="M2 3h1v1h-1zM12 3h1v1h-1zM1 4h1v1h-1zM10 4h1v1h-1zM12 4h2v1h-2zM6 6h1v1h-1zM2 7h1v1h-1zM5 7h1v1h-1zM7 7h1v1h-1zM12 7h1v1h-1zM4 8h1v1h-1zM11 8h1v1h-1zM13 9h1v1h-1zM12 10h1v1h-1zM1 11h1v1h-1zM4 11h1v1h-1zM10 11h1v1h-1zM4 12h1v1h-1zM10 12h1v1h-1zM3 14h2v1h-2zM10 14h2v1h-2z" opacity="0.5"/></g><g id="g15ff1a"><path d="M3 4h2v1h-2zM3 5h1v1h-1zM3 11h1v1h-1zM3 12h2v1h-2z"/><path d="M4 5h1v1h-1zM4 11h1v1h-1z" opacity="0.5"/></g><g id="g1573af"><path d="M1 1h4v1h-4zM6 1h8v1h-8zM2 2h1v1h-1zM10 2h1v1h-1zM9 3h1v1h-1zM9 4h1v1h-1zM2 5h1v1h-1zM8 5h2v1h-2zM1 6h4v1h-4zM8 6h2v1h-2zM11 6h1v1h-1zM7 7h1v1h-1zM9 7h1v1h-1zM12 7h1v1h-1zM6 8h2v1h-2zM9 8h1v1h-1zM12 8h1v1h-1zM6 9h1v1h-1zM9 9h1v1h-1zM13 9h1v1h-1zM9 10h1v1h-1zM2 11h3v1h-3zM9 11h1v1h-1zM1 12h1v1h-1zM9 12h1v1h-1zM9 13h1v1h-1zM9 14h1v1h-1z"/><path d="M0 1h1v1h-1zM3 2h1v1h-1zM9 2h1v1h-1zM2 3h2v1h-2zM10 3h1v1h-1zM2 4h2v1h-2zM3 5h1v1h-1zM10 5h2v1h-2zM7 6h1v1h-1zM10 6h1v1h-1zM2 7h2v1h-2zM8 7h1v1h-1zM11 7h1v1h-1zM2 8h2v1h-2zM13 8h1v1h-1zM2 9h2v1h-2zM5 9h1v1h-1zM2 10h3v1h-3zM1 11h1v1h-1zM0 12h1v1h-1zM2 12h1v1h-1z" opacity="0.5"/></g><g id="g155883"><path d="M9 0h1v1h-1zM6 1h7v1h-7zM11 2h1v1h-1zM11 3h1v1h-1zM1 4h4v1h-4zM6 4h8v1h-8zM2 5h1v1h-1zM7 6h6v1h-6zM6 7h1v1h-1zM12 7h1v1h-1zM6 8h7v1h-7zM6 9h1v1h-1zM12 9h1v1h-1zM2 10h3v1h-3zM6 10h7v1h-7zM1 11h3v1h-3zM8 11h1v1h-1zM10 11h1v1h-1zM7 12h1v1h-1zM10 12h1v1h-1zM7 13h1v1h-1zM10 13h1v1h-1zM13 13h1v1h-1zM5 14h1v1h-1zM11 14h3v1h-3z"/><path d="M2 0h2v1h-2zM2 1h2v1h-2zM13 1h1v1h-1zM2 2h2v1h-2zM7 2h1v1h-1zM2 3h2v1h-2zM7 3h2v1h-2zM5 4h1v1h-1zM3 5h1v1h-1zM2 6h2v1h-2zM6 6h1v1h-1zM2 7h2v1h-2zM2 8h2v1h-2zM2 9h2v1h-2zM4 11h1v1h-1zM7 11h1v1h-1zM1 12h1v1h-1zM8 12h1v1h-1zM13 12h1v1h-1zM6 13h1v1h-1zM11 13h1v1h-1zM6 14h1v1h-1zM10 14h1v1h-1z" opacity="0.5"/></g><g id="g15b540d"><path d="M6 0h2v1h-2zM5 1h3v1h-3zM4 2h9v1h-9zM3 3h3v1h-3zM11 3h2v1h-2zM2 4h2v1h-2zM10 4h2v1h-2zM5 5h2v1h-2zM9 5h2v1h-2zM6 6h4v1h-4zM5 7h3v1h-3zM3 8h11v1h-11zM1 9h5v1h-5zM12 9h2v1h-2zM4 10h2v1h-2zM12 10h2v1h-2zM4 11h2v1h-2zM12 11h2v1h-2zM4 12h2v1h-2zM12 12h2v1h-2zM4 13h10v1h-10zM4 14h2v1h-2z"/><path d="M13 2h1v1h-1zM10 3h1v1h-1zM1 4h1v1h-1zM4 4h1v1h-1zM9 4h1v1h-1zM4 5h1v1h-1zM8 5h1v1h-1zM5 6h1v1h-1zM8 7h1v1h-1zM2 8h1v1h-1zM11 9h1v1h-1zM11 10h1v1h-1zM11 11h1v1h-1zM11 12h1v1h-1zM11 14h3v1h-3z" opacity="0.5"/></g><g id="g15b79f0"><path d="M8 0h2v1h-2zM1 1h4v1h-4zM8 1h2v1h-2zM3 2h2v1h-2zM8 2h7v1h-7zM3 3h2v1h-2zM7 3h2v1h-2zM10 3h2v1h-2zM13 3h2v1h-2zM3 4h2v1h-2zM7 4h2v1h-2zM10 4h2v1h-2zM1 5h7v1h-7zM10 5h2v1h-2zM3 6h2v1h-2zM10 6h2v1h-2zM3 7h3v1h-3zM10 7h4v1h-4zM2 8h7v1h-7zM10 8h4v1h-4zM3 9h2v1h-2zM7 9h2v1h-2zM10 9h2v1h-2zM13 9h2v1h-2zM1 10h4v1h-4zM7 10h2v1h-2zM10 10h2v1h-2zM13 10h2v1h-2zM3 11h2v1h-2zM6 11h2v1h-2zM10 11h2v1h-2zM13 11h2v1h-2zM3 12h2v1h-2zM10 12h2v1h-2zM3 13h2v1h-2zM10 13h2v1h-2zM3 14h2v1h-2zM8 14h3v1h-3z"/><path d="M4 0h3v1h-3zM5 1h1v1h-1zM7 1h1v1h-1zM7 2h1v1h-1zM6 4h1v1h-1zM12 4h3v1h-3zM8 5h1v1h-1zM12 5h2v1h-2zM6 6h2v1h-2zM12 6h2v1h-2zM2 7h1v1h-1zM7 7h3v1h-3zM14 8h1v1h-1zM1 9h2v1h-2zM5 9h2v1h-2zM12 9h1v1h-1zM6 10h1v1h-1zM0 11h3v1h-3zM9 13h1v1h-1zM11 14h1v1h-1z" opacity="0.5"/></g><g id="g16b7a0b"><path d="M3 1h4v1h-4zM8 1h7v1h-7zM1 2h4v1h-4zM13 2h2v1h-2zM13 3h2v1h-2zM13 4h2v1h-2zM1 5h6v1h-6zM8 5h7v1h-7zM3 6h2v1h-2zM3 7h3v1h-3zM2 8h14v1h-14zM2 9h5v1h-5zM10 9h2v1h-2zM1 10h2v1h-2zM10 10h2v1h-2zM1 11h2v1h-2zM7 11h9v1h-9zM10 12h2v1h-2zM10 13h2v1h-2zM6 14h10v1h-10z"/><path d="M5 0h2v1h-2zM1 1h2v1h-2zM7 1h1v1h-1zM15 1h1v1h-1zM5 2h1v1h-1zM7 2h3v1h-3zM15 2h1v1h-1zM3 3h3v1h-3zM7 3h3v1h-3zM15 3h1v1h-1zM3 4h3v1h-3zM7 4h3v1h-3zM15 4h1v1h-1zM7 5h1v1h-1zM15 5h1v1h-1zM5 6h1v1h-1zM2 7h1v1h-1zM7 9h1v1h-1zM12 9h1v1h-1zM3 10h3v1h-3zM12 10h1v1h-1zM0 11h1v1h-1zM3 11h3v1h-3zM3 12h3v1h-3zM12 12h1v1h-1zM3 13h3v1h-3zM12 13h1v1h-1zM3 14h3v1h-3zM3 15h3v1h-3z" opacity="0.5"/></g><g id="g16b5e8f"><path d="M8 0h2v1h-2zM8 1h2v1h-2zM2 2h14v1h-14zM2 3h2v1h-2zM2 4h2v1h-2zM2 5h2v1h-2zM5 5h9v1h-9zM2 6h2v1h-2zM11 6h2v1h-2zM2 7h2v1h-2zM7 7h2v1h-2zM10 7h2v1h-2zM2 8h2v1h-2zM9 8h2v1h-2zM2 9h14v1h-14zM2 10h2v1h-2zM9 10h2v1h-2zM13 10h2v1h-2zM2 11h2v1h-2zM9 11h2v1h-2zM12 11h2v1h-2zM9 12h2v1h-2zM1 13h2v1h-2zM9 13h2v1h-2zM1 14h2v1h-2zM9 14h2v1h-2zM1 15h2v1h-2zM6 15h4v1h-4z"/><path d="M10 1h1v1h-1zM4 5h1v1h-1zM6 7h1v1h-1zM9 7h1v1h-1zM8 8h1v1h-1zM11 8h1v1h-1zM8 10h1v1h-1zM15 10h1v1h-1zM1 11h1v1h-1zM8 11h1v1h-1zM14 11h1v1h-1zM1 12h3v1h-3zM8 12h1v1h-1zM12 12h2v1h-2zM3 13h1v1h-1zM8 13h1v1h-1zM8 14h1v1h-1zM10 15h1v1h-1z" opacity="0.5"/></g><g id="g16b6bb5"><path d="M3 1h4v1h-4zM9 1h5v1h-5zM2 2h2v1h-2zM9 2h2v1h-2zM12 2h2v1h-2zM2 3h2v1h-2zM9 3h2v1h-2zM12 3h2v1h-2zM2 4h8v1h-8zM12 4h2v1h-2zM2 5h2v1h-2zM8 5h2v1h-2zM12 5h2v1h-2zM2 6h2v1h-2zM7 6h2v1h-2zM12 6h4v1h-4zM2 7h2v1h-2zM2 8h13v1h-13zM2 9h2v1h-2zM8 9h2v1h-2zM13 9h2v1h-2zM2 10h2v1h-2zM9 10h2v1h-2zM12 10h2v1h-2zM2 11h6v1h-6zM9 11h2v1h-2zM12 11h2v1h-2zM1 12h3v1h-3zM10 12h3v1h-3zM2 13h2v1h-2zM9 13h5v1h-5zM2 14h2v1h-2zM7 14h4v1h-4zM12 14h4v1h-4zM7 15h2v1h-2z"/><path d="M5 0h3v1h-3zM2 1h1v1h-1zM7 1h2v1h-2zM4 2h1v1h-1zM8 2h1v1h-1zM8 3h1v1h-1zM10 4h1v1h-1zM9 6h1v1h-1zM7 7h2v1h-2zM12 9h1v1h-1zM8 10h1v1h-1zM14 10h1v1h-1zM1 11h1v1h-1zM11 11h1v1h-1zM0 12h1v1h-1zM4 12h2v1h-2zM2 15h2v1h-2zM6 15h1v1h-1zM13 15h3v1h-3z" opacity="0.5"/></g><g id="g16bff1a"><path d="M3 4h3v1h-3zM3 5h3v1h-3zM3 12h3v1h-3zM3 13h3v1h-3z"/></g><g id="g166807"><path d="M3 1h1v1h-1zM3 2h1v1h-1zM8 2h6v1h-6zM3 3h1v1h-1zM1 4h5v1h-5zM3 5h1v1h-1zM3 6h2v1h-2zM7 6h8v1h-8zM2 7h4v1h-4zM10 7h1v1h-1zM2 8h2v1h-2zM5 8h1v1h-1zM10 8h1v1h-1zM1 9h1v1h-1zM3 9h1v1h-1zM8 9h1v1h-1zM10 9h1v1h-1zM13 9h1v1h-1zM1 10h1v1h-1zM3 10h1v1h-1zM7 10h1v1h-1zM10 10h1v1h-1zM13 10h1v1h-1zM3 11h1v1h-1zM7 11h1v1h-1zM10 11h1v1h-1zM13 11h1v1h-1zM3 12h1v1h-1zM7 12h1v1h-1zM10 12h1v1h-1zM14 12h1v1h-1zM3 13h1v1h-1zM6 13h1v1h-1zM10 13h1v1h-1zM14 13h1v1h-1zM3 14h1v1h-1zM10 14h1v1h-1zM3 15h1v1h-1zM8 15h3v1h-3z"/><path d="M3 0h2v1h-2zM4 1h1v1h-1zM4 2h1v1h-1zM7 2h1v1h-1zM14 2h1v1h-1zM4 3h1v1h-1zM6 4h1v1h-1zM4 5h1v1h-1zM2 6h1v1h-1zM15 6h1v1h-1zM11 7h1v1h-1zM4 8h1v1h-1zM6 8h1v1h-1zM11 8h1v1h-1zM2 9h1v1h-1zM4 9h1v1h-1zM7 9h1v1h-1zM11 9h2v1h-2zM4 10h1v1h-1zM8 10h1v1h-1zM11 10h1v1h-1zM0 11h2v1h-2zM4 11h1v1h-1zM11 11h1v1h-1zM14 11h1v1h-1zM4 12h1v1h-1zM6 12h1v1h-1zM11 12h1v1h-1zM13 12h1v1h-1zM4 13h1v1h-1zM7 13h1v1h-1zM11 13h1v1h-1zM4 14h1v1h-1zM11 14h1v1h-1zM14 14h1v1h-1zM4 15h1v1h-1z" opacity="0.5"/></g><g id="g169898"><path d="M2 1h5v1h-5zM8 1h7v1h-7zM2 2h1v1h-1zM6 2h1v1h-1zM11 2h1v1h-1zM2 3h5v1h-5zM11 3h1v1h-1zM2 4h1v1h-1zM6 4h1v1h-1zM9 4h5v1h-5zM2 5h5v1h-5zM9 5h1v1h-1zM11 5h1v1h-1zM9 6h1v1h-1zM11 6h1v1h-1zM1 7h7v1h-7zM9 7h1v1h-1zM11 7h1v1h-1zM4 8h1v1h-1zM9 8h1v1h-1zM11 8h1v1h-1zM2 9h1v1h-1zM4 9h1v1h-1zM9 9h1v1h-1zM11 9h1v1h-1zM2 10h1v1h-1zM4 10h4v1h-4zM9 10h2v1h-2zM2 11h1v1h-1zM4 11h1v1h-1zM10 11h1v1h-1zM12 11h2v1h-2zM2 12h3v1h-3zM9 12h1v1h-1zM13 12h2v1h-2zM1 13h1v1h-1zM4 13h1v1h-1zM8 13h1v1h-1zM1 14h1v1h-1zM6 14h9v1h-9z"/><path d="M10 3h1v1h-1zM8 4h1v1h-1zM14 4h1v1h-1zM8 5h1v1h-1zM13 5h2v1h-2zM8 6h1v1h-1zM13 6h2v1h-2zM8 7h1v1h-1zM13 7h2v1h-2zM8 8h1v1h-1zM13 8h2v1h-2zM8 9h1v1h-1zM10 9h1v1h-1zM13 9h2v1h-2zM8 10h1v1h-1zM11 10h4v1h-4zM1 11h1v1h-1zM9 11h1v1h-1zM1 12h1v1h-1zM8 12h1v1h-1zM2 13h2v1h-2zM5 13h1v1h-1zM7 13h1v1h-1zM14 13h1v1h-1zM5 14h1v1h-1z" opacity="0.5"/></g><g id="g16ff1a"><path d="M3 4h2v1h-2zM3 5h2v1h-2zM3 12h2v1h-2zM3 13h2v1h-2z"/></g><g id="g166ce8"><path d="M9 0h1v1h-1zM2 1h2v1h-2zM9 1h1v1h-1zM3 2h2v1h-2zM10 2h1v1h-1zM10 3h1v1h-1zM5 4h10v1h-10zM10 5h1v1h-1zM1 6h2v1h-2zM10 6h1v1h-1zM3 7h1v1h-1zM10 7h1v1h-1zM10 8h1v1h-1zM6 9h8v1h-8zM4 10h1v1h-1zM10 10h1v1h-1zM3 11h1v1h-1zM10 11h1v1h-1zM3 12h1v1h-1zM10 12h1v1h-1zM2 13h1v1h-1zM10 13h1v1h-1zM1 14h2v1h-2zM5 14h10v1h-10z"/><path d="M2 0h1v1h-1zM10 1h1v1h-1zM9 2h1v1h-1zM4 3h1v1h-1zM1 5h1v1h-1zM9 5h1v1h-1zM3 6h1v1h-1zM9 6h1v1h-1zM2 7h1v1h-1zM9 7h1v1h-1zM9 8h1v1h-1zM14 9h1v1h-1zM3 10h1v1h-1zM9 10h1v1h-1zM4 11h1v1h-1zM9 11h1v1h-1zM2 12h1v1h-1zM9 12h1v1h-1zM3 13h1v1h-1zM9 13h1v1h-1zM15 14h1v1h-1z" opacity="0.5"/></g><g id="g1691ca"><path d="M1 1h4v1h-4zM8 1h7v1h-7zM13 2h1v1h-1zM1 3h1v1h-1zM6 3h1v1h-1zM9 3h1v1h-1zM12 3h2v1h-2zM2 4h1v1h-1zM5 4h1v1h-1zM10 4h3v1h-3zM10 5h2v1h-2zM1 6h9v1h-9zM12 6h2v1h-2zM3 7h2v1h-2zM7 7h1v1h-1zM14 7h1v1h-1zM3 8h2v1h-2zM11 8h1v1h-1zM2 9h4v1h-4zM8 9h6v1h-6zM2 10h1v1h-1zM11 10h1v1h-1zM1 11h1v1h-1zM11 11h1v1h-1zM7 12h8v1h-8zM11 13h1v1h-1zM11 14h1v1h-1z"/><path d="M4 0h3v1h-3zM5 1h3v1h-3zM3 2h2v1h-2zM6 2h1v1h-1zM8 2h2v1h-2zM14 2h1v1h-1zM3 3h3v1h-3zM10 3h1v1h-1zM3 4h2v1h-2zM3 5h2v1h-2zM9 5h1v1h-1zM12 5h1v1h-1zM10 6h1v1h-1zM14 6h1v1h-1zM8 7h1v1h-1zM11 7h1v1h-1zM13 7h1v1h-1zM2 8h1v1h-1zM5 8h1v1h-1zM10 8h1v1h-1zM6 9h2v1h-2zM14 9h1v1h-1zM1 10h1v1h-1zM3 10h2v1h-2zM6 10h1v1h-1zM10 10h1v1h-1zM2 11h3v1h-3zM10 11h1v1h-1zM0 12h2v1h-2zM3 12h2v1h-2zM3 13h2v1h-2zM10 13h1v1h-1zM3 14h2v1h-2zM10 14h1v1h-1zM3 15h2v1h-2zM10 15h2v1h-2z" opacity="0.5"/></g><g id="g14ff1a"><path d="M3 3h1v1h-1zM3 4h1v1h-1zM3 11h1v1h-1zM3 12h1v1h-1z"/><path d="M2 3h1v1h-1zM2 4h1v1h-1zM4 4h1v1h-1zM2 11h1v1h-1zM4 11h1v1h-1zM2 12h1v1h-1zM4 12h1v1h-1z" opacity="0.5"/></g><g id="g149519"><path d="M2 1h1v1h-1zM2 2h3v1h-3zM6 2h7v1h-7zM1 3h1v1h-1zM2 5h3v1h-3zM6 5h7v1h-7zM3 6h1v1h-1zM3 7h1v1h-1zM7 7h5v1h-5zM1 8h5v1h-5zM7 8h1v1h-1zM3 9h1v1h-1zM7 9h1v1h-1zM3 10h1v1h-1zM7 10h5v1h-5zM3 11h1v1h-1zM7 11h1v1h-1zM3 12h1v1h-1zM7 12h5v1h-5z"/><path d="M2 0h1v1h-1zM7 0h2v1h-2zM10 0h2v1h-2zM7 1h2v1h-2zM10 1h2v1h-2zM1 2h1v1h-1zM5 2h1v1h-1zM7 3h2v1h-2zM10 3h2v1h-2zM1 4h1v1h-1zM7 4h2v1h-2zM10 4h2v1h-2zM1 5h1v1h-1zM5 5h1v1h-1zM13 5h1v1h-1zM12 7h1v1h-1zM6 8h1v1h-1zM11 8h2v1h-2zM6 9h1v1h-1zM11 9h2v1h-2zM6 10h1v1h-1zM12 10h1v1h-1zM4 11h3v1h-3zM11 11h2v1h-2zM2 12h1v1h-1zM4 12h1v1h-1zM6 12h1v1h-1zM12 12h1v1h-1zM2 13h1v1h-1zM7 13h1v1h-1zM11 13h2v1h-2z" opacity="0.5"/></g><g id="g148bef"><path d="M2 1h1v1h-1zM6 1h6v1h-6zM3 2h1v1h-1zM6 2h1v1h-1zM6 3h1v1h-1zM1 4h3v1h-3zM6 4h6v1h-6zM3 5h1v1h-1zM3 6h1v1h-1zM6 6h7v1h-7zM3 7h1v1h-1zM9 7h1v1h-1zM3 8h1v1h-1zM3 9h1v1h-1zM5 9h8v1h-8zM3 10h1v1h-1zM8 10h2v1h-2zM3 11h2v1h-2zM8 11h1v1h-1zM10 11h1v1h-1zM2 12h2v1h-2zM6 12h2v1h-2zM11 12h1v1h-1zM5 13h1v1h-1zM12 13h1v1h-1z"/><path d="M1 1h1v1h-1zM12 1h1v1h-1zM2 2h1v1h-1zM11 2h2v1h-2zM3 3h1v1h-1zM11 3h2v1h-2zM0 4h1v1h-1zM12 4h1v1h-1zM2 5h1v1h-1zM2 6h1v1h-1zM5 6h1v1h-1zM2 7h1v1h-1zM8 7h1v1h-1zM2 8h1v1h-1zM8 8h2v1h-2zM2 9h1v1h-1zM13 9h1v1h-1zM2 10h1v1h-1zM2 11h1v1h-1zM7 11h1v1h-1zM10 12h1v1h-1zM12 12h1v1h-1zM6 13h1v1h-1z" opacity="0.5"/></g><g id="g144fe1"><path d="M3 1h1v1h-1zM8 1h1v1h-1zM3 2h1v1h-1zM2 3h1v1h-1zM5 3h8v1h-8zM2 4h1v1h-1zM1 5h2v1h-2zM6 5h6v1h-6zM1 6h2v1h-2zM2 7h1v1h-1zM6 7h6v1h-6zM2 8h1v1h-1zM2 9h1v1h-1zM5 9h7v1h-7zM2 10h1v1h-1zM5 10h1v1h-1zM11 10h1v1h-1zM2 11h1v1h-1zM5 11h1v1h-1zM11 11h1v1h-1zM2 12h1v1h-1zM5 12h7v1h-7zM5 13h1v1h-1z"/><path d="M3 0h1v1h-1zM8 0h1v1h-1zM2 2h1v1h-1zM8 2h1v1h-1zM3 3h2v1h-2zM3 4h1v1h-1zM3 5h1v1h-1zM5 5h1v1h-1zM0 6h1v1h-1zM3 6h1v1h-1zM3 7h1v1h-1zM5 7h1v1h-1zM3 8h1v1h-1zM3 9h1v1h-1zM3 10h1v1h-1zM12 10h1v1h-1zM3 11h1v1h-1zM12 11h1v1h-1zM3 12h1v1h-1zM12 12h1v1h-1zM2 13h1v1h-1zM11 13h1v1h-1z" opacity="0.5"/></g><g id="g14606f"><path d="M6 0h1v1h-1zM3 1h8v1h-8zM3 2h1v1h-1zM10 2h1v1h-1zM3 3h1v1h-1zM10 3h1v1h-1zM3 4h8v1h-8zM3 5h1v1h-1zM10 5h1v1h-1zM3 6h8v1h-8zM3 7h1v1h-1zM10 7h1v1h-1zM3 8h8v1h-8zM6 9h1v1h-1zM2 10h1v1h-1zM4 10h1v1h-1zM7 10h1v1h-1zM11 10h1v1h-1zM4 11h1v1h-1zM12 11h1v1h-1zM1 12h1v1h-1zM4 12h1v1h-1zM10 12h1v1h-1zM12 12h1v1h-1zM4 13h6v1h-6z"/><path d="M7 0h1v1h-1zM2 2h1v1h-1zM2 3h1v1h-1zM2 4h1v1h-1zM2 5h1v1h-1zM2 6h1v1h-1zM2 7h1v1h-1zM7 9h1v1h-1zM3 10h1v1h-1zM1 11h3v1h-3zM7 11h1v1h-1zM10 11h2v1h-2zM3 12h1v1h-1zM9 12h1v1h-1zM1 13h1v1h-1z" opacity="0.5"/></g><g id="g144ea4"><path d="M6 0h1v1h-1zM7 1h1v1h-1zM1 2h12v1h-12zM4 4h1v1h-1zM9 4h2v1h-2zM3 5h1v1h-1zM10 5h2v1h-2zM1 6h2v1h-2zM9 6h1v1h-1zM11 6h2v1h-2zM9 7h1v1h-1zM5 8h1v1h-1zM8 8h1v1h-1zM6 9h2v1h-2zM6 10h2v1h-2zM5 11h1v1h-1zM8 11h2v1h-2zM2 12h3v1h-3zM9 12h3v1h-3zM1 13h1v1h-1zM12 13h1v1h-1z"/><path d="M6 1h1v1h-1zM4 3h1v1h-1zM9 3h1v1h-1zM3 4h1v1h-1zM2 5h1v1h-1zM4 6h1v1h-1zM4 7h2v1h-2zM8 7h1v1h-1zM5 9h1v1h-1zM8 9h1v1h-1zM4 11h1v1h-1zM6 11h2v1h-2zM1 12h1v1h-1zM12 12h1v1h-1zM2 13h1v1h-1zM11 13h1v1h-1z" opacity="0.5"/></g><g id="g1453c9"><path d="M1 2h11v1h-11zM11 3h1v1h-1zM3 4h1v1h-1zM6 4h1v1h-1zM10 4h1v1h-1zM7 5h1v1h-1zM10 5h1v1h-1zM4 6h1v1h-1zM9 6h1v1h-1zM5 7h1v1h-1zM9 7h1v1h-1zM5 8h1v1h-1zM8 8h1v1h-1zM6 9h2v1h-2zM6 10h3v1h-3zM4 11h2v1h-2zM8 11h2v1h-2zM2 12h2v1h-2zM10 12h3v1h-3zM1 13h1v1h-1z"/><path d="M2 3h2v1h-2zM10 3h1v1h-1zM11 4h1v1h-1zM3 5h2v1h-2zM6 5h1v1h-1zM9 5h1v1h-1zM7 6h1v1h-1zM10 6h1v1h-1zM4 7h1v1h-1zM8 7h1v1h-1zM6 8h2v1h-2zM5 10h1v1h-1zM3 11h1v1h-1zM10 11h1v1h-1zM1 12h1v1h-1zM4 12h1v1h-1zM9 12h1v1h-1zM2 13h1v1h-1zM12 13h1v1h-1z" opacity="0.5"/></g><g id="g1453c2"><path d="M9 1h1v1h-1zM4 2h8v1h-8zM2 3h5v1h-5zM11 3h1v1h-1zM5 4h1v1h-1zM1 5h12v1h-12zM4 6h1v1h-1zM9 6h1v1h-1zM3 7h1v1h-1zM6 7h2v1h-2zM10 7h1v1h-1zM1 8h2v1h-2zM4 8h2v1h-2zM11 8h2v1h-2zM7 9h2v1h-2zM4 10h3v1h-3zM10 10h1v1h-1zM9 11h1v1h-1zM6 12h2v1h-2zM3 13h2v1h-2z"/><path d="M5 0h2v1h-2zM4 1h2v1h-2zM10 1h1v1h-1zM3 2h1v1h-1zM6 4h1v1h-1zM13 5h1v1h-1zM10 6h1v1h-1zM2 7h1v1h-1zM4 7h1v1h-1zM11 7h1v1h-1zM3 8h1v1h-1zM6 8h1v1h-1zM8 8h1v1h-1zM1 9h1v1h-1zM6 9h1v1h-1zM12 9h1v1h-1zM4 11h1v1h-1zM8 11h1v1h-1zM10 11h1v1h-1zM4 12h2v1h-2zM8 12h1v1h-1zM5 13h1v1h-1z" opacity="0.5"/></g><g id="g148003"><path d="M6 0h1v1h-1zM6 1h1v1h-1zM11 1h1v1h-1zM2 2h8v1h-8zM6 3h1v1h-1zM10 3h1v1h-1zM6 4h1v1h-1zM9 4h1v1h-1zM1 5h12v1h-12zM6 6h1v1h-1zM4 7h8v1h-8zM1 8h2v1h-2zM4 9h7v1h-7zM10 10h1v1h-1zM10 11h1v1h-1zM9 12h1v1h-1zM6 13h4v1h-4z"/><path d="M10 2h2v1h-2zM9 3h1v1h-1zM8 4h1v1h-1zM5 6h1v1h-1zM7 6h1v1h-1zM3 7h1v1h-1zM3 8h3v1h-3zM1 9h1v1h-1zM10 12h1v1h-1z" opacity="0.5"/></g><g id="g145730"><path d="M9 0h1v1h-1zM2 1h1v1h-1zM9 1h1v1h-1zM2 2h1v1h-1zM6 2h1v1h-1zM9 2h1v1h-1zM2 3h1v1h-1zM6 3h1v1h-1zM9 3h1v1h-1zM11 3h2v1h-2zM1 4h4v1h-4zM6 4h1v1h-1zM9 4h4v1h-4zM2 5h1v1h-1zM6 5h4v1h-4zM12 5h1v1h-1zM2 6h1v1h-1zM5 6h2v1h-2zM9 6h1v1h-1zM12 6h1v1h-1zM2 7h1v1h-1zM6 7h1v1h-1zM9 7h1v1h-1zM12 7h1v1h-1zM2 8h1v1h-1zM6 8h1v1h-1zM9 8h1v1h-1zM12 8h1v1h-1zM2 9h3v1h-3zM6 9h1v1h-1zM9 9h1v1h-1zM11 9h1v1h-1zM1 10h2v1h-2zM6 10h1v1h-1zM6 11h1v1h-1zM6 12h1v1h-1zM12 12h1v1h-1zM7 13h6v1h-6z"/><path d="M2 0h1v1h-1zM3 1h1v1h-1zM6 1h1v1h-1zM3 2h1v1h-1zM3 3h1v1h-1zM0 4h1v1h-1zM8 4h1v1h-1zM3 5h1v1h-1zM3 6h2v1h-2zM3 7h1v1h-1zM3 8h2v1h-2zM10 9h1v1h-1zM12 9h1v1h-1zM0 10h1v1h-1zM3 10h1v1h-1zM9 10h1v1h-1zM1 11h1v1h-1zM12 11h2v1h-2zM13 12h1v1h-1zM6 13h1v1h-1z" opacity="0.5"/></g><g id="g145740"><path d="M9 1h1v1h-1zM9 2h1v1h-1zM9 3h1v1h-1zM1 4h4v1h-4zM6 4h1v1h-1zM9 4h1v1h-1zM6 5h1v1h-1zM9 5h1v1h-1zM6 6h1v1h-1zM9 6h4v1h-4zM6 7h1v1h-1zM9 7h1v1h-1zM6 8h1v1h-1zM9 8h1v1h-1zM2 9h3v1h-3zM6 9h1v1h-1zM9 9h1v1h-1zM1 10h1v1h-1zM6 10h1v1h-1zM9 10h1v1h-1zM6 11h1v1h-1zM9 11h1v1h-1zM4 12h9v1h-9z"/><path d="M2 0h2v1h-2zM9 0h1v1h-1zM2 1h2v1h-2zM2 2h2v1h-2zM2 3h2v1h-2zM6 3h1v1h-1zM0 4h1v1h-1zM5 4h1v1h-1zM2 5h2v1h-2zM2 6h2v1h-2zM2 7h2v1h-2zM2 8h2v1h-2zM0 10h1v1h-1zM2 10h1v1h-1zM13 12h1v1h-1z" opacity="0.5"/></g><g id="g144fee"><path d="M3 1h1v1h-1zM7 1h1v1h-1zM7 2h6v1h-6zM2 3h1v1h-1zM6 3h2v1h-2zM11 3h1v1h-1zM2 4h1v1h-1zM5 4h1v1h-1zM8 4h1v1h-1zM10 4h1v1h-1zM1 5h2v1h-2zM4 5h1v1h-1zM9 5h2v1h-2zM2 6h1v1h-1zM4 6h1v1h-1zM7 6h1v1h-1zM11 6h2v1h-2zM2 7h1v1h-1zM4 7h1v1h-1zM9 7h1v1h-1zM2 8h1v1h-1zM4 8h1v1h-1zM8 8h1v1h-1zM2 9h1v1h-1zM4 9h1v1h-1zM10 9h1v1h-1zM2 10h1v1h-1zM4 10h1v1h-1zM8 10h1v1h-1zM12 10h1v1h-1zM2 11h1v1h-1zM11 11h1v1h-1zM2 12h1v1h-1zM8 12h2v1h-2zM2 13h1v1h-1zM6 13h1v1h-1z"/><path d="M3 0h1v1h-1zM8 0h1v1h-1zM8 1h1v1h-1zM2 2h2v1h-2zM1 4h1v1h-1zM4 4h1v1h-1zM6 4h1v1h-1zM9 4h1v1h-1zM11 4h1v1h-1zM8 5h1v1h-1zM0 6h2v1h-2zM5 6h2v1h-2zM8 6h1v1h-1zM10 6h1v1h-1zM5 7h2v1h-2zM12 7h1v1h-1zM7 8h1v1h-1zM11 8h1v1h-1zM7 9h1v1h-1zM9 9h1v1h-1zM7 10h1v1h-1zM9 10h1v1h-1zM4 11h1v1h-1zM7 11h1v1h-1zM10 11h1v1h-1zM12 11h1v1h-1zM7 12h1v1h-1zM10 12h1v1h-1zM7 13h1v1h-1z" opacity="0.5"/></g><g id="g146539"><path d="M8 0h1v1h-1zM1 1h5v1h-5zM8 1h1v1h-1zM5 2h1v1h-1zM8 2h1v1h-1zM5 3h1v1h-1zM8 3h5v1h-5zM5 4h1v1h-1zM7 4h1v1h-1zM11 4h1v1h-1zM1 5h8v1h-8zM11 5h1v1h-1zM1 6h1v1h-1zM6 6h1v1h-1zM8 6h1v1h-1zM11 6h1v1h-1zM1 7h1v1h-1zM10 7h1v1h-1zM1 8h1v1h-1zM9 8h2v1h-2zM1 9h1v1h-1zM9 9h2v1h-2zM1 10h1v1h-1zM4 10h2v1h-2zM9 10h2v1h-2zM1 11h3v1h-3zM8 11h1v1h-1zM11 11h1v1h-1zM1 12h1v1h-1zM6 12h2v1h-2zM11 12h2v1h-2zM6 13h1v1h-1z"/><path d="M7 2h1v1h-1zM7 3h1v1h-1zM13 3h1v1h-1zM8 4h1v1h-1zM2 6h1v1h-1zM10 6h1v1h-1zM2 7h1v1h-1zM8 7h2v1h-2zM11 7h1v1h-1zM2 8h1v1h-1zM2 9h1v1h-1zM2 10h2v1h-2zM8 10h1v1h-1zM4 11h1v1h-1zM7 11h1v1h-1zM9 11h2v1h-2zM2 12h1v1h-1zM8 12h1v1h-1zM12 13h1v1h-1z" opacity="0.5"/></g><g id="g148bca"><path d="M2 1h2v1h-2zM8 1h2v1h-2zM3 2h1v1h-1zM8 2h1v1h-1zM10 2h1v1h-1zM7 3h1v1h-1zM11 3h1v1h-1zM5 4h2v1h-2zM12 4h1v1h-1zM1 5h3v1h-3zM8 5h1v1h-1zM3 6h1v1h-1zM7 6h1v1h-1zM3 7h1v1h-1zM10 7h1v1h-1zM3 8h1v1h-1zM9 8h1v1h-1zM3 9h1v1h-1zM7 9h2v1h-2zM12 9h1v1h-1zM3 10h1v1h-1zM11 10h1v1h-1zM3 11h2v1h-2zM9 11h2v1h-2zM2 12h2v1h-2zM7 12h2v1h-2zM6 13h1v1h-1z"/><path d="M2 0h1v1h-1zM9 0h1v1h-1zM4 2h1v1h-1zM7 2h1v1h-1zM9 2h1v1h-1zM6 3h1v1h-1zM10 3h1v1h-1zM9 4h1v1h-1zM11 4h1v1h-1zM13 4h1v1h-1zM0 5h1v1h-1zM5 5h1v1h-1zM9 5h1v1h-1zM12 5h1v1h-1zM6 6h1v1h-1zM8 6h1v1h-1zM10 6h1v1h-1zM6 7h1v1h-1zM9 7h1v1h-1zM8 8h1v1h-1zM11 9h1v1h-1zM4 10h4v1h-4zM10 10h1v1h-1zM2 11h1v1h-1zM6 12h1v1h-1zM9 12h1v1h-1zM7 13h1v1h-1z" opacity="0.5"/></g><g id="g1465ad"><path d="M12 0h1v1h-1zM1 1h1v1h-1zM9 1h2v1h-2zM1 2h1v1h-1zM3 2h1v1h-1zM6 2h1v1h-1zM8 2h1v1h-1zM1 3h1v1h-1zM3 3h1v1h-1zM6 3h1v1h-1zM8 3h1v1h-1zM1 4h1v1h-1zM8 4h1v1h-1zM1 5h1v1h-1zM3 5h4v1h-4zM8 5h5v1h-5zM1 6h1v1h-1zM4 6h2v1h-2zM8 6h1v1h-1zM11 6h1v1h-1zM1 7h1v1h-1zM4 7h3v1h-3zM8 7h1v1h-1zM11 7h1v1h-1zM1 8h1v1h-1zM3 8h1v1h-1zM8 8h1v1h-1zM11 8h1v1h-1zM1 9h1v1h-1zM8 9h1v1h-1zM11 9h1v1h-1zM1 10h1v1h-1zM8 10h1v1h-1zM11 10h1v1h-1zM1 11h7v1h-7zM11 11h1v1h-1zM7 12h1v1h-1zM11 12h1v1h-1zM11 13h1v1h-1z"/><path d="M1 0h1v1h-1zM4 0h2v1h-2zM11 0h1v1h-1zM3 1h4v1h-4zM8 1h1v1h-1zM11 1h1v1h-1zM4 2h2v1h-2zM4 3h2v1h-2zM4 4h2v1h-2zM2 5h1v1h-1zM7 5h1v1h-1zM13 5h1v1h-1zM3 7h1v1h-1zM2 8h1v1h-1zM4 8h3v1h-3zM2 9h1v1h-1zM4 9h2v1h-2zM4 10h1v1h-1zM7 10h1v1h-1zM8 11h1v1h-1zM7 13h1v1h-1z" opacity="0.5"/></g><g id="g146309"><path d="M9 1h1v1h-1zM6 2h7v1h-7zM1 3h5v1h-5zM12 3h1v1h-1zM5 4h1v1h-1zM8 4h1v1h-1zM12 4h1v1h-1zM8 5h1v1h-1zM5 6h8v1h-8zM3 7h2v1h-2zM7 7h1v1h-1zM11 7h1v1h-1zM1 8h3v1h-3zM6 8h1v1h-1zM6 9h2v1h-2zM10 9h1v1h-1zM8 10h3v1h-3zM8 11h3v1h-3zM7 12h2v1h-2zM11 12h1v1h-1zM1 13h2v1h-2zM5 13h2v1h-2zM12 13h1v1h-1z"/><path d="M2 0h2v1h-2zM8 0h2v1h-2zM2 1h2v1h-2zM8 1h1v1h-1zM2 2h2v1h-2zM5 2h1v1h-1zM0 3h1v1h-1zM6 3h1v1h-1zM2 4h2v1h-2zM6 4h1v1h-1zM2 5h2v1h-2zM7 5h1v1h-1zM2 6h2v1h-2zM13 6h1v1h-1zM2 7h1v1h-1zM10 7h1v1h-1zM0 8h1v1h-1zM4 8h1v1h-1zM7 8h1v1h-1zM10 8h2v1h-2zM1 9h3v1h-3zM2 10h2v1h-2zM7 10h1v1h-1zM2 11h2v1h-2zM2 12h2v1h-2zM6 12h1v1h-1zM10 12h1v1h-1zM12 12h1v1h-1z" opacity="0.5"/></g><g id="g144e0b"><path d="M1 1h12v1h-12zM6 2h1v1h-1zM6 3h1v1h-1zM6 4h1v1h-1zM6 5h3v1h-3zM6 6h1v1h-1zM9 6h2v1h-2zM6 7h1v1h-1zM10 7h2v1h-2zM6 8h1v1h-1zM6 9h1v1h-1zM6 10h1v1h-1zM6 11h1v1h-1zM6 12h1v1h-1zM6 13h1v1h-1z"/><path d="M7 2h1v1h-1zM7 4h1v1h-1zM7 6h2v1h-2zM11 8h1v1h-1z" opacity="0.5"/></g><g id="g144ee5"><path d="M11 1h1v1h-1zM2 2h1v1h-1zM6 2h1v1h-1zM11 2h1v1h-1zM2 3h1v1h-1zM6 3h1v1h-1zM2 4h1v1h-1zM7 4h1v1h-1zM10 4h1v1h-1zM2 5h1v1h-1zM10 5h1v1h-1zM2 6h1v1h-1zM10 6h1v1h-1zM2 7h1v1h-1zM10 7h1v1h-1zM2 8h1v1h-1zM9 8h1v1h-1zM2 9h1v1h-1zM5 9h1v1h-1zM9 9h2v1h-2zM2 10h2v1h-2zM8 10h1v1h-1zM10 10h2v1h-2zM7 11h1v1h-1zM11 11h1v1h-1zM5 12h2v1h-2zM12 12h1v1h-1z"/><path d="M2 1h1v1h-1zM10 1h1v1h-1zM3 2h1v1h-1zM5 2h1v1h-1zM10 2h1v1h-1zM3 3h1v1h-1zM7 3h1v1h-1zM10 3h2v1h-2zM3 4h1v1h-1zM11 4h1v1h-1zM3 5h1v1h-1zM7 5h1v1h-1zM3 6h1v1h-1zM3 7h1v1h-1zM9 7h1v1h-1zM3 8h1v1h-1zM6 8h1v1h-1zM10 8h1v1h-1zM3 9h2v1h-2zM6 9h1v1h-1zM8 9h1v1h-1zM4 10h1v1h-1zM9 10h1v1h-1zM1 11h2v1h-2zM6 11h1v1h-1zM8 11h1v1h-1zM12 11h1v1h-1z" opacity="0.5"/></g><g id="g1483b7"><path d="M4 0h1v1h-1zM9 0h1v1h-1zM1 1h12v1h-12zM4 2h1v1h-1zM9 2h1v1h-1zM2 4h1v1h-1zM4 4h1v1h-1zM10 4h1v1h-1zM2 5h2v1h-2zM11 5h1v1h-1zM2 6h2v1h-2zM1 7h1v1h-1zM5 7h8v1h-8zM3 8h2v1h-2zM8 8h2v1h-2zM2 9h3v1h-3zM8 9h2v1h-2zM1 10h1v1h-1zM4 10h1v1h-1zM8 10h1v1h-1zM4 11h1v1h-1zM7 11h1v1h-1zM10 11h1v1h-1zM6 12h1v1h-1zM11 12h1v1h-1zM2 13h2v1h-2zM5 13h1v1h-1zM12 13h1v1h-1z"/><path d="M4 3h1v1h-1zM9 3h1v1h-1zM1 4h1v1h-1zM8 4h2v1h-2zM11 4h1v1h-1zM4 5h1v1h-1zM8 5h2v1h-2zM1 6h1v1h-1zM8 6h2v1h-2zM11 6h1v1h-1zM3 7h2v1h-2zM2 10h1v1h-1zM7 10h1v1h-1zM9 10h2v1h-2zM11 11h1v1h-1zM3 12h2v1h-2zM7 12h1v1h-1zM12 12h1v1h-1zM1 13h1v1h-1zM6 13h1v1h-1z" opacity="0.5"/></g><g id="g1453d6"><path d="M1 1h6v1h-6zM5 2h1v1h-1zM7 2h6v1h-6zM5 3h1v1h-1zM8 3h1v1h-1zM12 3h1v1h-1zM2 4h4v1h-4zM8 4h1v1h-1zM5 5h1v1h-1zM8 5h1v1h-1zM11 5h1v1h-1zM5 6h1v1h-1zM11 6h1v1h-1zM2 7h4v1h-4zM9 7h1v1h-1zM11 7h1v1h-1zM5 8h1v1h-1zM9 8h2v1h-2zM5 9h1v1h-1zM10 9h1v1h-1zM1 10h6v1h-6zM9 10h2v1h-2zM1 11h1v1h-1zM5 11h1v1h-1zM9 11h1v1h-1zM11 11h1v1h-1zM5 12h1v1h-1zM8 12h1v1h-1zM11 12h2v1h-2zM5 13h1v1h-1zM7 13h1v1h-1z"/><path d="M0 1h1v1h-1zM1 2h2v1h-2zM1 3h2v1h-2zM1 4h1v1h-1zM11 4h2v1h-2zM1 5h2v1h-2zM12 5h1v1h-1zM1 6h2v1h-2zM8 6h2v1h-2zM1 7h1v1h-1zM10 7h1v1h-1zM1 8h2v1h-2zM11 8h1v1h-1zM1 9h2v1h-2zM9 9h1v1h-1zM0 11h1v1h-1zM2 11h2v1h-2zM8 11h1v1h-1zM10 11h1v1h-1zM7 12h1v1h-1zM12 13h1v1h-1z" opacity="0.5"/></g><g id="g143002"><path d="M2 9h2v1h-2zM1 10h1v1h-1zM4 10h1v1h-1zM4 11h1v1h-1zM1 12h1v1h-1zM2 13h1v1h-1z"/><path d="M1 9h1v1h-1zM0 11h2v1h-2zM3 12h2v1h-2zM3 13h1v1h-1z" opacity="0.5"/></g><g id="g145f00"><path d="M1 1h12v1h-12zM4 2h1v1h-1zM9 2h1v1h-1zM4 3h1v1h-1zM9 3h1v1h-1zM4 4h1v1h-1zM9 4h1v1h-1zM4 5h1v1h-1zM9 5h1v1h-1zM1 6h12v1h-12zM4 7h1v1h-1zM9 7h1v1h-1zM4 8h1v1h-1zM9 8h1v1h-1zM4 9h1v1h-1zM9 9h1v1h-1zM3 10h1v1h-1zM9 10h1v1h-1zM2 11h2v1h-2zM9 11h1v1h-1zM1 12h2v1h-2zM9 12h1v1h-1zM1 13h1v1h-1zM9 13h1v1h-1z"/><path d="M3 9h1v1h-1zM4 10h1v1h-1z" opacity="0.5"/></g><g id="g1459cb"><path d="M2 1h1v1h-1zM8 1h1v1h-1zM2 2h1v1h-1zM8 2h1v1h-1zM1 3h4v1h-4zM7 3h1v1h-1zM11 3h1v1h-1zM2 4h1v1h-1zM4 4h1v1h-1zM7 4h1v1h-1zM12 4h1v1h-1zM4 5h1v1h-1zM6 5h7v1h-7zM4 6h1v1h-1zM1 7h1v1h-1zM4 7h1v1h-1zM1 8h1v1h-1zM4 8h1v1h-1zM7 8h6v1h-6zM2 9h2v1h-2zM12 9h1v1h-1zM3 10h2v1h-2zM12 10h1v1h-1zM2 11h1v1h-1zM12 11h1v1h-1zM1 12h1v1h-1zM7 12h6v1h-6z"/><path d="M2 0h2v1h-2zM8 0h2v1h-2zM7 2h1v1h-1zM10 2h2v1h-2zM0 3h1v1h-1zM5 3h1v1h-1zM6 4h1v1h-1zM11 4h1v1h-1zM1 5h2v1h-2zM5 5h1v1h-1zM1 6h2v1h-2zM6 6h2v1h-2zM12 6h2v1h-2zM2 8h2v1h-2zM6 8h1v1h-1zM4 9h1v1h-1zM6 9h2v1h-2zM11 9h1v1h-1zM6 10h2v1h-2zM11 10h1v1h-1zM3 11h5v1h-5zM11 11h1v1h-1zM2 12h1v1h-1zM6 12h1v1h-1zM1 13h1v1h-1zM6 13h2v1h-2zM12 13h1v1h-1z" opacity="0.5"/></g><g id="g144eff"><path d="M3 1h1v1h-1zM9 1h1v1h-1zM3 2h1v1h-1zM9 2h1v1h-1zM2 3h1v1h-1zM5 3h8v1h-8zM2 4h1v1h-1zM7 4h1v1h-1zM1 5h2v1h-2zM7 5h1v1h-1zM2 6h1v1h-1zM7 6h5v1h-5zM2 7h1v1h-1zM7 7h1v1h-1zM11 7h1v1h-1zM2 8h1v1h-1zM11 8h1v1h-1zM2 9h1v1h-1zM6 9h1v1h-1zM11 9h1v1h-1zM2 10h1v1h-1zM6 10h1v1h-1zM11 10h1v1h-1zM2 11h1v1h-1zM6 11h1v1h-1zM11 11h1v1h-1zM2 12h1v1h-1zM5 12h1v1h-1zM11 12h1v1h-1zM2 13h1v1h-1zM4 13h1v1h-1zM9 13h2v1h-2z"/><path d="M3 0h2v1h-2zM8 0h2v1h-2zM4 1h1v1h-1zM8 1h1v1h-1zM3 3h2v1h-2zM13 3h1v1h-1zM1 4h1v1h-1zM3 4h1v1h-1zM3 5h1v1h-1zM0 6h2v1h-2zM3 6h1v1h-1zM12 6h1v1h-1zM3 7h1v1h-1zM6 7h1v1h-1zM12 7h1v1h-1zM3 8h1v1h-1zM6 8h2v1h-2zM12 8h1v1h-1zM3 9h1v1h-1zM7 9h1v1h-1zM3 10h1v1h-1zM3 11h1v1h-1zM5 11h1v1h-1zM3 12h2v1h-2zM3 13h1v1h-1zM5 13h1v1h-1zM8 13h1v1h-1zM11 13h1v1h-1z" opacity="0.5"/></g><g id="g14771f"><path d="M1 1h12v1h-12zM6 2h1v1h-1zM3 3h8v1h-8zM3 4h1v1h-1zM10 4h1v1h-1zM3 5h8v1h-8zM3 6h1v1h-1zM10 6h1v1h-1zM3 7h8v1h-8zM3 8h8v1h-8zM3 9h1v1h-1zM10 9h1v1h-1zM1 10h12v1h-12zM3 12h2v1h-2zM10 12h2v1h-2zM1 13h1v1h-1zM12 13h1v1h-1z"/><path d="M6 0h2v1h-2zM7 2h1v1h-1zM4 11h1v1h-1zM9 11h1v1h-1zM2 12h1v1h-1zM9 12h1v1h-1zM2 13h1v1h-1zM11 13h1v1h-1z" opacity="0.5"/></g><g id="g14897f"><path d="M1 1h12v1h-12zM5 2h1v1h-1zM8 2h1v1h-1zM5 3h1v1h-1zM8 3h1v1h-1zM2 4h10v1h-10zM5 5h1v1h-1zM8 5h1v1h-1zM5 6h1v1h-1zM8 6h1v1h-1zM4 7h1v1h-1zM8 7h1v1h-1zM2 8h2v1h-2zM8 8h4v1h-4zM2 9h1v1h-1zM2 12h10v1h-10z"/><path d="M1 4h1v1h-1zM12 4h1v1h-1zM1 5h2v1h-2zM11 5h2v1h-2zM1 6h2v1h-2zM4 6h1v1h-1zM11 6h2v1h-2zM1 7h2v1h-2zM5 7h1v1h-1zM11 7h2v1h-2zM1 8h1v1h-1zM4 8h1v1h-1zM12 8h1v1h-1zM1 9h1v1h-1zM3 9h1v1h-1zM11 9h2v1h-2zM1 10h2v1h-2zM11 10h2v1h-2zM1 11h2v1h-2zM11 11h2v1h-2zM1 12h1v1h-1zM12 12h1v1h-1zM1 13h2v1h-2zM11 13h2v1h-2z" opacity="0.5"/></g><g id="g1495e8"><path d="M2 1h1v1h-1zM5 1h8v1h-8zM3 2h1v1h-1zM12 2h1v1h-1zM12 3h1v1h-1zM1 4h1v1h-1zM12 4h1v1h-1zM1 5h1v1h-1zM12 5h1v1h-1zM1 6h1v1h-1zM12 6h1v1h-1zM1 7h1v1h-1zM12 7h1v1h-1zM1 8h1v1h-1zM12 8h1v1h-1zM1 9h1v1h-1zM12 9h1v1h-1zM1 10h1v1h-1zM12 10h1v1h-1zM1 11h1v1h-1zM12 11h1v1h-1zM1 12h1v1h-1zM12 12h1v1h-1zM1 13h1v1h-1zM9 13h3v1h-3z"/><path d="M2 0h1v1h-1zM3 1h1v1h-1zM11 2h1v1h-1zM1 3h1v1h-1zM3 3h1v1h-1zM11 3h1v1h-1zM2 4h1v1h-1zM11 4h1v1h-1zM2 5h1v1h-1zM11 5h1v1h-1zM2 6h1v1h-1zM11 6h1v1h-1zM2 7h1v1h-1zM11 7h1v1h-1zM2 8h1v1h-1zM11 8h1v1h-1zM2 9h1v1h-1zM11 9h1v1h-1zM2 10h1v1h-1zM11 10h1v1h-1zM2 11h1v1h-1zM11 11h1v1h-1zM2 12h1v1h-1zM11 12h1v1h-1zM2 13h1v1h-1zM12 13h1v1h-1z" opacity="0.5"/></g><g id="g145b50"><path d="M2 1h10v1h-10zM10 2h1v1h-1zM8 3h2v1h-2zM7 4h1v1h-1zM7 5h1v1h-1zM1 7h12v1h-12zM4 13h3v1h-3z"/><path d="M9 2h1v1h-1zM8 4h1v1h-1zM6 5h1v1h-1zM6 6h2v1h-2zM0 7h1v1h-1zM13 7h1v1h-1zM6 8h2v1h-2zM6 9h2v1h-2zM6 10h2v1h-2zM6 11h2v1h-2zM6 12h2v1h-2z" opacity="0.5"/></g><g id="g146267"><path d="M7 1h1v1h-1zM7 2h1v1h-1zM1 3h10v1h-10zM7 4h1v1h-1zM7 5h1v1h-1zM7 6h1v1h-1zM2 7h3v1h-3zM6 7h2v1h-2zM1 8h2v1h-2zM7 8h2v1h-2zM9 9h2v1h-2zM6 10h1v1h-1zM6 11h1v1h-1zM5 12h1v1h-1zM11 12h1v1h-1zM1 13h2v1h-2zM4 13h1v1h-1zM11 13h2v1h-2z"/><path d="M2 0h2v1h-2zM7 0h2v1h-2zM2 1h2v1h-2zM8 1h1v1h-1zM2 2h2v1h-2zM8 2h1v1h-1zM0 3h1v1h-1zM11 3h1v1h-1zM2 4h2v1h-2zM8 4h1v1h-1zM10 4h2v1h-2zM2 5h2v1h-2zM10 5h2v1h-2zM2 6h5v1h-5zM10 6h2v1h-2zM1 7h1v1h-1zM10 7h2v1h-2zM0 8h1v1h-1zM3 8h1v1h-1zM9 8h3v1h-3zM2 9h2v1h-2zM6 9h3v1h-3zM11 9h1v1h-1zM2 10h2v1h-2zM10 10h2v1h-2zM2 11h2v1h-2zM5 11h1v1h-1zM10 11h4v1h-4zM2 12h3v1h-3zM12 12h2v1h-2zM5 13h1v1h-1z" opacity="0.5"/></g><g id="g14884c"><path d="M3 1h1v1h-1zM6 1h7v1h-7zM2 2h1v1h-1zM1 3h1v1h-1zM4 3h1v1h-1zM3 4h2v1h-2zM3 5h1v1h-1zM6 5h7v1h-7zM2 6h2v1h-2zM10 6h1v1h-1zM1 7h3v1h-3zM10 7h1v1h-1zM3 8h1v1h-1zM10 8h1v1h-1zM3 9h1v1h-1zM10 9h1v1h-1zM3 10h1v1h-1zM10 10h1v1h-1zM3 11h1v1h-1zM10 11h1v1h-1zM3 12h1v1h-1zM10 12h1v1h-1zM3 13h1v1h-1zM8 13h3v1h-3z"/><path d="M3 0h2v1h-2zM2 1h1v1h-1zM1 2h1v1h-1zM0 3h1v1h-1zM2 5h1v1h-1zM5 5h1v1h-1zM13 5h1v1h-1zM1 6h1v1h-1zM0 7h1v1h-1zM1 8h2v1h-2zM2 9h1v1h-1zM2 10h1v1h-1zM2 11h1v1h-1zM2 12h1v1h-1zM2 13h1v1h-1z" opacity="0.5"/></g><g id="g145de5"><path d="M2 2h10v1h-10zM6 3h1v1h-1zM6 4h1v1h-1zM6 5h1v1h-1zM6 6h1v1h-1zM6 7h1v1h-1zM6 8h1v1h-1zM6 9h1v1h-1zM6 10h1v1h-1zM6 11h1v1h-1zM1 12h12v1h-12z"/><path d="M1 2h1v1h-1zM12 2h1v1h-1zM7 3h1v1h-1zM7 4h1v1h-1zM7 5h1v1h-1zM7 6h1v1h-1zM7 7h1v1h-1zM7 8h1v1h-1zM7 9h1v1h-1zM7 10h1v1h-1zM7 11h1v1h-1zM13 12h1v1h-1z" opacity="0.5"/></g><g id="g145177"><path d="M3 1h8v1h-8zM3 2h1v1h-1zM10 2h1v1h-1zM3 3h8v1h-8zM3 4h1v1h-1zM10 4h1v1h-1zM3 5h8v1h-8zM3 6h1v1h-1zM10 6h1v1h-1zM3 7h8v1h-8zM3 8h1v1h-1zM10 8h1v1h-1zM3 9h1v1h-1zM10 9h1v1h-1zM1 10h12v1h-12zM4 11h1v1h-1zM9 11h1v1h-1zM2 12h2v1h-2zM10 12h2v1h-2zM1 13h1v1h-1zM12 13h1v1h-1z"/><path d="M13 10h1v1h-1zM10 11h1v1h-1zM4 12h1v1h-1zM12 12h1v1h-1zM2 13h1v1h-1zM11 13h1v1h-1z" opacity="0.5"/></g><g id="g145f97"><path d="M3 0h1v1h-1zM6 0h6v1h-6zM3 1h1v1h-1zM6 1h1v1h-1zM11 1h1v1h-1zM2 2h1v1h-1zM6 2h1v1h-1zM11 2h1v1h-1zM1 3h1v1h-1zM6 3h6v1h-6zM3 4h1v1h-1zM6 4h1v1h-1zM11 4h1v1h-1zM3 5h1v1h-1zM6 5h6v1h-6zM2 6h1v1h-1zM1 7h2v1h-2zM5 7h8v1h-8zM10 8h1v1h-1zM5 9h8v1h-8zM10 10h1v1h-1zM7 11h1v1h-1zM10 11h1v1h-1zM10 12h1v1h-1zM9 13h2v1h-2z"/><path d="M12 0h1v1h-1zM2 1h1v1h-1zM12 1h1v1h-1zM1 2h1v1h-1zM12 2h1v1h-1zM12 3h1v1h-1zM4 4h1v1h-1zM12 4h1v1h-1zM2 5h1v1h-1zM12 5h1v1h-1zM3 6h1v1h-1zM0 7h1v1h-1zM3 7h1v1h-1zM0 8h4v1h-4zM2 9h3v1h-3zM13 9h1v1h-1zM2 10h2v1h-2zM6 10h1v1h-1zM2 11h2v1h-2zM6 11h1v1h-1zM2 12h2v1h-2zM7 12h1v1h-1zM2 13h2v1h-2zM8 13h1v1h-1z" opacity="0.5"/></g><g id="g18b4f4d"><path d="M5 0h2v1h-2zM11 0h2v1h-2zM4 1h2v1h-2zM11 1h2v1h-2zM4 2h2v1h-2zM11 2h2v1h-2zM3 3h3v1h-3zM7 3h10v1h-10zM3 4h2v1h-2zM2 5h3v1h-3zM8 5h2v1h-2zM14 5h2v1h-2zM1 6h4v1h-4zM8 6h2v1h-2zM14 6h2v1h-2zM1 7h4v1h-4zM8 7h2v1h-2zM14 7h2v1h-2zM3 8h2v1h-2zM8 8h3v1h-3zM14 8h2v1h-2zM3 9h2v1h-2zM9 9h2v1h-2zM13 9h2v1h-2zM3 10h2v1h-2zM9 10h2v1h-2zM13 10h2v1h-2zM3 11h2v1h-2zM9 11h2v1h-2zM13 11h2v1h-2zM3 12h2v1h-2zM9 12h2v1h-2zM13 12h2v1h-2zM3 13h2v1h-2zM9 13h2v1h-2zM13 13h2v1h-2zM3 14h2v1h-2zM12 14h3v1h-3zM3 15h2v1h-2zM6 15h12v1h-12zM3 16h2v1h-2z"/><path d="M4 0h1v1h-1zM10 0h1v1h-1zM6 1h1v1h-1zM13 1h1v1h-1zM3 2h1v1h-1zM7 2h4v1h-4zM13 2h4v1h-4zM6 3h1v1h-1zM17 3h1v1h-1zM2 4h1v1h-1zM5 4h1v1h-1zM5 5h1v1h-1zM5 6h1v1h-1zM10 6h1v1h-1zM5 7h1v1h-1zM10 7h1v1h-1zM13 7h1v1h-1zM5 8h1v1h-1zM13 8h1v1h-1zM5 9h1v1h-1zM8 9h1v1h-1zM15 9h1v1h-1zM5 10h1v1h-1zM8 10h1v1h-1zM15 10h1v1h-1zM5 11h1v1h-1zM5 12h1v1h-1zM12 12h1v1h-1zM5 13h1v1h-1zM12 13h1v1h-1zM5 14h1v1h-1zM5 15h1v1h-1zM5 16h1v1h-1z" opacity="0.5"/></g><g id="g18b6ed1"><path d="M2 0h3v1h-3zM7 0h9v1h-9zM3 1h3v1h-3zM7 1h2v1h-2zM14 1h2v1h-2zM7 2h6v1h-6zM14 2h2v1h-2zM7 3h2v1h-2zM11 3h2v1h-2zM14 3h2v1h-2zM7 4h2v1h-2zM11 4h2v1h-2zM14 4h2v1h-2zM1 5h3v1h-3zM5 5h13v1h-13zM2 6h5v1h-5zM16 6h2v1h-2zM3 7h4v1h-4zM16 7h2v1h-2zM7 8h9v1h-9zM7 9h2v1h-2zM14 9h2v1h-2zM4 10h2v1h-2zM7 10h9v1h-9zM4 11h2v1h-2zM7 11h2v1h-2zM14 11h2v1h-2zM3 12h2v1h-2zM7 12h2v1h-2zM14 12h2v1h-2zM3 13h2v1h-2zM7 13h9v1h-9zM2 14h2v1h-2zM7 14h2v1h-2zM14 14h2v1h-2zM2 15h2v1h-2zM7 15h2v1h-2zM14 15h2v1h-2zM7 16h2v1h-2zM12 16h4v1h-4z"/><path d="M6 1h1v1h-1zM9 1h1v1h-1zM4 2h2v1h-2zM9 3h1v1h-1zM9 4h1v1h-1zM7 6h1v1h-1zM7 7h1v1h-1zM16 8h1v1h-1zM16 9h1v1h-1zM16 10h1v1h-1zM3 11h1v1h-1zM9 11h1v1h-1zM16 11h1v1h-1zM5 12h1v1h-1zM16 12h1v1h-1zM2 13h1v1h-1zM16 13h1v1h-1zM4 14h1v1h-1zM16 14h1v1h-1zM1 15h1v1h-1zM16 15h1v1h-1zM2 16h2v1h-2z" opacity="0.5"/></g><g id="g18b5757"><path d="M3 0h2v1h-2zM11 0h2v1h-2zM3 1h2v1h-2zM11 1h2v1h-2zM3 2h2v1h-2zM10 2h3v1h-3zM3 3h2v1h-2zM7 3h10v1h-10zM1 4h6v1h-6zM11 4h2v1h-2zM15 4h2v1h-2zM3 5h2v1h-2zM11 5h2v1h-2zM15 5h2v1h-2zM3 6h2v1h-2zM11 6h2v1h-2zM15 6h2v1h-2zM3 7h2v1h-2zM11 7h2v1h-2zM15 7h2v1h-2zM3 8h2v1h-2zM7 8h11v1h-11zM3 9h2v1h-2zM10 9h4v1h-4zM3 10h4v1h-4zM10 10h4v1h-4zM2 11h4v1h-4zM10 11h4v1h-4zM1 12h3v1h-3zM9 12h2v1h-2zM13 12h2v1h-2zM8 13h3v1h-3zM13 13h3v1h-3zM7 14h3v1h-3zM14 14h3v1h-3zM6 15h3v1h-3zM15 15h3v1h-3z"/><path d="M5 0h1v1h-1zM10 0h1v1h-1zM5 1h1v1h-1zM10 1h1v1h-1zM5 2h1v1h-1zM5 3h1v1h-1zM7 4h1v1h-1zM10 4h1v1h-1zM14 4h1v1h-1zM5 5h1v1h-1zM10 5h1v1h-1zM14 5h1v1h-1zM5 6h1v1h-1zM10 6h1v1h-1zM14 6h1v1h-1zM5 7h1v1h-1zM10 7h1v1h-1zM14 7h1v1h-1zM5 8h2v1h-2zM5 9h1v1h-1zM7 10h1v1h-1zM1 11h1v1h-1zM6 11h1v1h-1zM9 11h1v1h-1zM14 11h1v1h-1zM4 12h1v1h-1zM11 12h2v1h-2zM1 13h2v1h-2zM5 15h1v1h-1zM14 15h1v1h-1zM6 16h2v1h-2zM16 16h2v1h-2z" opacity="0.5"/></g><g id="g18b5341"><path d="M8 0h3v1h-3zM8 1h3v1h-3zM8 2h3v1h-3zM8 3h3v1h-3zM8 4h3v1h-3zM8 5h3v1h-3zM8 6h3v1h-3zM1 7h17v1h-17zM8 8h3v1h-3zM8 9h3v1h-3zM8 10h3v1h-3zM8 11h3v1h-3zM8 12h3v1h-3zM8 13h3v1h-3zM8 14h3v1h-3zM8 15h3v1h-3z"/><path d="M1 6h7v1h-7zM11 6h7v1h-7zM8 16h3v1h-3z" opacity="0.5"/></g><g id="g18b8fdb"><path d="M2 0h2v1h-2zM9 0h2v1h-2zM13 0h2v1h-2zM3 1h2v1h-2zM9 1h2v1h-2zM13 1h2v1h-2zM3 2h3v1h-3zM9 2h2v1h-2zM13 2h2v1h-2zM6 3h12v1h-12zM9 4h2v1h-2zM13 4h2v1h-2zM9 5h2v1h-2zM13 5h2v1h-2zM1 6h5v1h-5zM9 6h2v1h-2zM13 6h2v1h-2zM3 7h3v1h-3zM9 7h2v1h-2zM13 7h2v1h-2zM3 8h15v1h-15zM3 9h3v1h-3zM8 9h3v1h-3zM13 9h2v1h-2zM3 10h3v1h-3zM8 10h2v1h-2zM13 10h2v1h-2zM3 11h3v1h-3zM8 11h2v1h-2zM13 11h2v1h-2zM3 12h3v1h-3zM7 12h2v1h-2zM13 12h2v1h-2zM3 13h3v1h-3zM13 13h2v1h-2zM2 14h2v1h-2zM5 14h3v1h-3zM1 15h2v1h-2zM7 15h11v1h-11z"/><path d="M4 0h1v1h-1zM8 0h1v1h-1zM15 0h1v1h-1zM2 1h1v1h-1zM8 1h1v1h-1zM15 1h1v1h-1zM8 2h1v1h-1zM12 2h1v1h-1zM15 2h1v1h-1zM4 3h2v1h-2zM8 4h1v1h-1zM15 4h1v1h-1zM8 5h1v1h-1zM15 5h1v1h-1zM8 6h1v1h-1zM15 6h1v1h-1zM8 7h1v1h-1zM12 7h1v1h-1zM15 7h1v1h-1zM15 9h1v1h-1zM10 10h1v1h-1zM15 10h1v1h-1zM7 11h1v1h-1zM15 11h1v1h-1zM6 12h1v1h-1zM9 12h1v1h-1zM15 12h1v1h-1zM2 13h1v1h-1zM6 13h3v1h-3zM1 14h1v1h-1zM4 14h1v1h-1zM8 14h1v1h-1zM16 14h2v1h-2zM3 15h1v1h-1zM6 15h1v1h-1z" opacity="0.5"/></g><g id="g18b5236"><path d="M2 0h5v1h-5zM15 0h3v1h-3zM2 1h2v1h-2zM5 1h2v1h-2zM12 1h2v1h-2zM15 1h3v1h-3zM2 2h9v1h-9zM12 2h2v1h-2zM15 2h3v1h-3zM1 3h3v1h-3zM5 3h2v1h-2zM12 3h2v1h-2zM15 3h3v1h-3zM1 4h2v1h-2zM5 4h2v1h-2zM12 4h2v1h-2zM15 4h3v1h-3zM1 5h13v1h-13zM15 5h3v1h-3zM5 6h2v1h-2zM12 6h2v1h-2zM15 6h3v1h-3zM5 7h2v1h-2zM12 7h2v1h-2zM15 7h3v1h-3zM5 8h2v1h-2zM12 8h2v1h-2zM15 8h3v1h-3zM2 9h9v1h-9zM12 9h2v1h-2zM15 9h3v1h-3zM2 10h2v1h-2zM5 10h2v1h-2zM9 10h2v1h-2zM12 10h2v1h-2zM15 10h3v1h-3zM2 11h2v1h-2zM5 11h2v1h-2zM9 11h2v1h-2zM15 11h3v1h-3zM2 12h2v1h-2zM5 12h2v1h-2zM9 12h2v1h-2zM15 12h3v1h-3zM2 13h2v1h-2zM5 13h2v1h-2zM9 13h2v1h-2zM15 13h3v1h-3zM2 14h2v1h-2zM5 14h6v1h-6zM15 14h3v1h-3zM5 15h2v1h-2zM13 15h4v1h-4z"/><path d="M7 0h1v1h-1zM4 1h1v1h-1zM7 1h1v1h-1zM14 1h1v1h-1zM14 2h1v1h-1zM7 3h1v1h-1zM14 3h1v1h-1zM7 4h1v1h-1zM14 4h1v1h-1zM14 5h1v1h-1zM7 6h1v1h-1zM14 6h1v1h-1zM7 7h1v1h-1zM14 7h1v1h-1zM7 8h1v1h-1zM14 8h1v1h-1zM1 9h1v1h-1zM14 9h1v1h-1zM1 10h1v1h-1zM7 10h1v1h-1zM14 10h1v1h-1zM1 11h1v1h-1zM7 11h1v1h-1zM12 11h2v1h-2zM1 12h1v1h-1zM7 12h1v1h-1zM1 13h1v1h-1zM7 13h1v1h-1zM1 14h1v1h-1zM7 15h1v1h-1zM17 15h1v1h-1zM5 16h3v1h-3zM13 16h3v1h-3z" opacity="0.5"/></g><g id="g18b503c"><path d="M4 0h2v1h-2zM11 0h2v1h-2zM4 1h14v1h-14zM3 2h3v1h-3zM10 2h3v1h-3zM3 3h2v1h-2zM10 3h2v1h-2zM2 4h3v1h-3zM7 4h10v1h-10zM2 5h3v1h-3zM7 5h2v1h-2zM14 5h3v1h-3zM1 6h4v1h-4zM7 6h2v1h-2zM14 6h3v1h-3zM1 7h4v1h-4zM7 7h10v1h-10zM3 8h2v1h-2zM7 8h2v1h-2zM14 8h3v1h-3zM3 9h2v1h-2zM7 9h2v1h-2zM14 9h3v1h-3zM3 10h2v1h-2zM7 10h10v1h-10zM3 11h2v1h-2zM7 11h2v1h-2zM14 11h3v1h-3zM3 12h2v1h-2zM7 12h10v1h-10zM3 13h2v1h-2zM7 13h2v1h-2zM14 13h3v1h-3zM3 14h2v1h-2zM7 14h2v1h-2zM14 14h3v1h-3zM3 15h15v1h-15zM3 16h2v1h-2z"/><path d="M6 0h1v1h-1zM10 0h1v1h-1zM3 1h1v1h-1zM12 3h1v1h-1zM1 5h1v1h-1z" opacity="0.5"/></g></defs></svg><div class="" style="left:0px;top:0px;width:1280px;height:21px;background:linear-gradient(90deg,#808080,#C0C0C0)"></div>
<div class="" style="left:21px;top:2px;width:452px;height:15px;background:#10F4F8;border-radius:8px"></div>
<svg style="left:0px;top:0px" width="22" height="19">
<rect x="2" y="1" width="18" height="17" fill="#E2DEE6"/>
<path d="M2.5 1v17" stroke="#000" stroke-width="1.3"/>
<path d="M3 4.5h15M3 12.5h6" stroke="#303030"/>
<path d="M5.5 2v5M8.5 2v5M5.5 10v5M8.5 10v5" stroke="#404040" stroke-width="1.2"/>
<path d="M15 2.5q-1.5 2 0 4M17.5 2.5q1.5 2 0 4" stroke="#303030" fill="none"/>
<path d="M11 9.5l9 9" stroke="#E8A030" stroke-width="3.2"/>
<path d="M13 11.5l7 7" stroke="#B02000" stroke-width="1.6"/>
<path d="M10 8l3 1.5-1.5 1.5z" fill="#000"/>
</svg>
<div class="tx" style="left:27px;top:3px;font-weight:bold;height:14px;line-height:14px;font-size:14px">LAD/STL/FBD&nbsp;&nbsp;-&nbsp;[@OB1&nbsp;--&nbsp;fs14\A02\CPU&nbsp;314C-2&nbsp;DP&nbsp;&nbsp;ONLINE]</div>
<div class="ra" style="left:1219px;top:2px;width:18px;height:16px;"></div>
<div class="" style="left:1223px;top:12px;width:7px;height:2px;background:#000"></div>
<div class="ra" style="left:1238px;top:2px;width:18px;height:16px;"></div>
<div class="" style="left:1244px;top:4px;width:7px;height:6px;border:1px solid #000;border-top-width:2px"></div>
<div class="" style="left:1241px;top:8px;width:7px;height:6px;border:1px solid #000;border-top-width:2px;background:#D4D0C8"></div>
<div class="ra" style="left:1259px;top:2px;width:18px;height:16px;"></div>
<svg style="left:1259px;top:2px" width="18" height="16"><path d="M5 3L13 12M13 3L5 12" stroke="#000" stroke-width="1.8"/></svg>
<div class="" style="left:0px;top:21px;width:1280px;height:24px;background:#D4D0C8"></div>
<div class="" style="left:0px;top:44px;width:1280px;height:1px;background:#808080"></div>
<div class="" style="left:0px;top:45px;width:1280px;height:1px;background:#fff"></div>
<svg style="left:5px;top:27px" width="17" height="12"><rect x="3" y="1" width="11" height="10" fill="#B8B8D8" stroke="#10106A" stroke-width="2"/><rect x="0" y="4" width="3" height="4" fill="#10106A"/><rect x="14" y="4" width="3" height="4" fill="#10106A"/></svg>
<div class="tx" style="left:30px;top:26px;line-height:14px;height:14px;color:#808080"><svg class="c" width="28" height="14" fill="currentColor"><use href="#g146587" x="0"/><use href="#g144ef6" x="14"/></svg><span style="font-size:13px;letter-spacing:-1px;position:relative;top:1px">(F)</span></div>
<div class="tx" style="left:93px;top:26px;line-height:14px;height:14px;color:#808080"><svg class="c" width="28" height="14" fill="currentColor"><use href="#g147f16" x="0"/><use href="#g148f91" x="14"/></svg><span style="font-size:13px;letter-spacing:-1px;position:relative;top:1px">(E)</span></div>
<div class="tx" style="left:156px;top:26px;line-height:14px;height:14px;color:#808080"><svg class="c" width="28" height="14" fill="currentColor"><use href="#g1463d2" x="0"/><use href="#g145165" x="14"/></svg><span style="font-size:13px;letter-spacing:-1px;position:relative;top:1px">(I)</span></div>
<div class="tx" style="left:218px;top:26px;line-height:14px;height:14px;color:#808080"><span style="font-size:13px;letter-spacing:-1px;position:relative;top:1px">PLC</span></div>
<div class="tx" style="left:253px;top:26px;line-height:14px;height:14px;color:#808080"><svg class="c" width="28" height="14" fill="currentColor"><use href="#g148c03" x="0"/><use href="#g148bd5" x="14"/></svg><span style="font-size:13px;letter-spacing:-1px;position:relative;top:1px">(D)</span></div>
<div class="tx" style="left:316px;top:26px;line-height:14px;height:14px;color:#808080"><svg class="c" width="28" height="14" fill="currentColor"><use href="#g1489c6" x="0"/><use href="#g1456fe" x="14"/></svg><span style="font-size:13px;letter-spacing:-1px;position:relative;top:1px">(V)</span></div>
<div class="tx" style="left:379px;top:26px;line-height:14px;height:14px;color:#808080"><svg class="c" width="28" height="14" fill="currentColor"><use href="#g149009" x="0"/><use href="#g149879" x="14"/></svg><span style="font-size:13px;letter-spacing:-1px;position:relative;top:1px">(O)</span></div>
<div class="tx" style="left:442px;top:26px;line-height:14px;height:14px;color:#808080"><svg class="c" width="28" height="14" fill="currentColor"><use href="#g147a97" x="0"/><use href="#g1453e3" x="14"/></svg><span style="font-size:13px;letter-spacing:-1px;position:relative;top:1px">(W)</span></div>
<div class="tx" style="left:505px;top:26px;line-height:14px;height:14px;color:#808080"><svg class="c" width="28" height="14" fill="currentColor"><use href="#g145e2e" x="0"/><use href="#g1452a9" x="14"/></svg><span style="font-size:13px;letter-spacing:-1px;position:relative;top:1px">(H)</span></div>
<div class="ra" style="left:1219px;top:24px;width:18px;height:16px;"></div>
<div class="" style="left:1223px;top:34px;width:7px;height:2px;background:#000"></div>
<div class="ra" style="left:1238px;top:24px;width:18px;height:16px;"></div>
<div class="" style="left:1244px;top:26px;width:7px;height:6px;border:1px solid #000;border-top-width:2px"></div>
<div class="" style="left:1241px;top:30px;width:7px;height:6px;border:1px solid #000;border-top-width:2px;background:#D4D0C8"></div>
<div class="ra" style="left:1259px;top:24px;width:18px;height:16px;"></div>
<svg style="left:1259px;top:24px" width="18" height="16"><path d="M5 3L13 12M13 3L5 12" stroke="#000" stroke-width="1.8"/></svg>
<div class="" style="left:0px;top:68px;width:1280px;height:1px;background:#808080"></div>
<div class="" style="left:0px;top:69px;width:1280px;height:1px;background:#fff"></div>
<div class="" style="left:101px;top:48px;width:2px;height:18px;border-left:1px solid #808080;border-right:1px solid #fff"></div>
<div class="" style="left:130px;top:48px;width:2px;height:18px;border-left:1px solid #808080;border-right:1px solid #fff"></div>
<div class="" style="left:206px;top:48px;width:2px;height:18px;border-left:1px solid #808080;border-right:1px solid #fff"></div>
<div class="" style="left:258px;top:48px;width:2px;height:18px;border-left:1px solid #808080;border-right:1px solid #fff"></div>
<div class="" style="left:309px;top:48px;width:2px;height:18px;border-left:1px solid #808080;border-right:1px solid #fff"></div>
<div class="" style="left:339px;top:48px;width:2px;height:18px;border-left:1px solid #808080;border-right:1px solid #fff"></div>
<div class="" style="left:391px;top:48px;width:2px;height:18px;border-left:1px solid #808080;border-right:1px solid #fff"></div>
<div class="" style="left:442px;top:48px;width:2px;height:18px;border-left:1px solid #808080;border-right:1px solid #fff"></div>
<div class="" style="left:495px;top:48px;width:2px;height:18px;border-left:1px solid #808080;border-right:1px solid #fff"></div>
<div class="" style="left:523px;top:48px;width:2px;height:18px;border-left:1px solid #808080;border-right:1px solid #fff"></div>
<div class="" style="left:691px;top:48px;width:2px;height:18px;border-left:1px solid #808080;border-right:1px solid #fff"></div>
<div class="" style="left:717px;top:47px;width:1px;height:20px;background:#808080"></div>
<div class="" style="left:5px;top:74px;width:163px;height:2px;background:#fff"></div>
<div class="" style="left:5px;top:76px;width:163px;height:1px;background:#808080"></div>
<div class="" style="left:5px;top:78px;width:163px;height:2px;background:#fff"></div>
<div class="" style="left:5px;top:80px;width:163px;height:1px;background:#808080"></div>
<div class="ra1" style="left:170px;top:71px;width:13px;height:12px;"></div>
<svg style="left:173px;top:75px" width="7" height="4"><path d="M0 0h7L3.5 4z" fill="#808080"/></svg>
<div class="ra1" style="left:184px;top:71px;width:13px;height:12px;"></div>
<svg style="left:187px;top:74px" width="7" height="6"><path d="M0 0L7 6M7 0L0 6" stroke="#000" stroke-width="1.6"/></svg>
<div class="" style="left:6px;top:86px;width:188px;height:731px;border-left:1px solid #fff;border-top:1px solid #fff;border-right:1px solid #000;border-bottom:1px solid #000"></div>
<div class="" style="left:8px;top:89px;width:181px;height:724px;border:1px solid #000;background:#D4D0C8"></div>
<div class="" style="left:9px;top:90px;width:179px;height:21px;background:#D4D0C8;border-top:1px solid #fff;box-shadow:inset 0 -1px #404040,inset 0 -2px #fff"></div>
<div class="" style="left:9px;top:111px;width:178px;height:657px;background:#fff;border-right:1px solid #fff"></div>
<div class="sk1" style="left:10px;top:768px;width:155px;height:42px;"></div>
<div class="ra1" style="left:165px;top:768px;width:23px;height:21px;"></div>
<svg style="left:168px;top:771px" width="16" height="14"><path d="M2 1h6M4 1v7M1 4l3-3 3 3M9 7l-3 3 3 3M8 13h6" stroke="#000" fill="none" stroke-width="1.5"/></svg>
<div class="" style="left:203px;top:69px;width:1px;height:778px;background:#fff"></div>
<div class="" style="left:13px;top:815px;width:87px;height:26px;background:#D4D0C8;border-left:1px solid #fff;border-right:1px solid #404040;border-bottom:1px solid #404040"></div>
<div class="" style="left:100px;top:815px;width:84px;height:23px;background:#D4D0C8;border-right:1px solid #404040;border-bottom:1px solid #404040"></div>
<svg style="left:19px;top:820px" width="18" height="16"><rect x="1" y="1" width="7" height="14" fill="#fff" stroke="#000"/><rect x="3" y="3" width="3" height="3" fill="#FFD000"/><rect x="3" y="8" width="3" height="5" fill="#2020C0"/><path d="M9 2h5l3 3v10H9z" fill="#fff" stroke="#000"/></svg>
<div class="tx" style="left:37px;top:819px;line-height:14px;height:14px;"><svg class="c" width="28" height="14" fill="currentColor"><use href="#g147a0b" x="0"/><use href="#g145e8f" x="14"/></svg><span style="font-size:13px;letter-spacing:-1px;position:relative;top:1px">?..</span></div>
<svg style="left:103px;top:820px" width="16" height="16"><path d="M2 1v14M2 2h3M2 8h3M2 14h3M7 4h8M7 8h8M7 12h8" stroke="#000" fill="none"/></svg>
<div class="tx" style="left:120px;top:818px;line-height:14px;height:14px;"><svg class="c" width="56" height="14" fill="currentColor"><use href="#g148c03" x="0"/><use href="#g147528" x="14"/><use href="#g147ed3" x="28"/><use href="#g146784" x="42"/></svg></div>
<div style="left:19px;top:119px;width:1px;height:319px;background-image:linear-gradient(#808080 50%,transparent 50%);background-size:1px 2px"></div>
<div style="left:20px;top:118px;width:10px;height:1px;background-image:linear-gradient(90deg,#808080 50%,transparent 50%);background-size:2px 1px"></div>
<svg style="left:30px;top:111px" width="16" height="14"><rect x="1" y="0" width="15" height="9" fill="#C0C0C0"/><path d="M2 1v7M5 1v7M2 4h3M7 1v7M10 1l-3 3 3 3M12 1a3 3.5 0 0 1 0 7" stroke="#000" fill="none"/><path d="M1 11h4M7 11h2M11 11h2M14 11h2" stroke="#000" stroke-width="2"/></svg>
<div class="tx" style="left:51px;top:112px;line-height:14px;height:14px;"><svg class="c" width="70" height="14" fill="currentColor"><use href="#g1465b0" x="0"/><use href="#g145efa" x="14"/><use href="#g147a0b" x="28"/><use href="#g145e8f" x="42"/><use href="#g146bb5" x="56"/></svg></div>
<div style="left:20px;top:134px;width:10px;height:1px;background-image:linear-gradient(90deg,#808080 50%,transparent 50%);background-size:2px 1px"></div>
<div class="" style="left:15px;top:130px;width:9px;height:9px;background:#fff;border:1px solid #808080"></div>
<div class="" style="left:17px;top:134px;width:5px;height:1px;background:#000"></div>
<div class="" style="left:19px;top:132px;width:1px;height:5px;background:#000"></div>
<svg style="left:30px;top:127px" width="17" height="15"><path d="M1.5 3.5V2.5l1-1h4l1 2h7v10h-13z" fill="#F0F0A0" stroke="#909050"/><path d="M2 13.5h13.5V4" stroke="#000" fill="none"/><path d="M2 4.5h12" stroke="#fff"/><path d="M3 9h3M6.5 6v6M10 6v6" stroke="#000" stroke-width="1.6"/></svg>
<div class="tx" style="left:51px;top:128px;line-height:14px;height:14px;"><svg class="c" width="42" height="14" fill="currentColor"><use href="#g144f4d" x="0"/><use href="#g14903b" x="14"/><use href="#g148f91" x="28"/></svg></div>
<div style="left:20px;top:150px;width:10px;height:1px;background-image:linear-gradient(90deg,#808080 50%,transparent 50%);background-size:2px 1px"></div>
<div class="" style="left:15px;top:146px;width:9px;height:9px;background:#fff;border:1px solid #808080"></div>
<div class="" style="left:17px;top:150px;width:5px;height:1px;background:#000"></div>
<div class="" style="left:19px;top:148px;width:1px;height:5px;background:#000"></div>
<svg style="left:30px;top:143px" width="17" height="15"><path d="M1.5 3.5V2.5l1-1h4l1 2h7v10h-13z" fill="#F0F0A0" stroke="#909050"/><path d="M2 13.5h13.5V4" stroke="#000" fill="none"/><path d="M2 4.5h12" stroke="#fff"/><path d="M11 5.5L5 9l6 3.5" stroke="#000" stroke-width="1.8" fill="none"/></svg>
<div class="tx" style="left:51px;top:144px;line-height:14px;height:14px;"><svg class="c" width="42" height="14" fill="currentColor"><use href="#g146bd4" x="0"/><use href="#g148f83" x="14"/><use href="#g145668" x="28"/></svg></div>
<div style="left:20px;top:166px;width:10px;height:1px;background-image:linear-gradient(90deg,#808080 50%,transparent 50%);background-size:2px 1px"></div>
<div class="" style="left:15px;top:162px;width:9px;height:9px;background:#fff;border:1px solid #808080"></div>
<div class="" style="left:17px;top:166px;width:5px;height:1px;background:#000"></div>
<div class="" style="left:19px;top:164px;width:1px;height:5px;background:#000"></div>
<svg style="left:30px;top:159px" width="17" height="15"><path d="M1.5 3.5V2.5l1-1h4l1 2h7v10h-13z" fill="#F0F0A0" stroke="#909050"/><path d="M2 13.5h13.5V4" stroke="#000" fill="none"/><path d="M2 4.5h12" stroke="#fff"/><path d="M4 8l2-2 2 2zM9 9h4l-2 2z" fill="#000" stroke="#000"/><path d="M3.5 8.5h5" stroke="#000"/></svg>
<div class="tx" style="left:51px;top:160px;line-height:14px;height:14px;"><svg class="c" width="42" height="14" fill="currentColor"><use href="#g148f6c" x="0"/><use href="#g146362" x="14"/><use href="#g145668" x="28"/></svg></div>
<div style="left:20px;top:182px;width:10px;height:1px;background-image:linear-gradient(90deg,#808080 50%,transparent 50%);background-size:2px 1px"></div>
<div class="" style="left:15px;top:178px;width:9px;height:9px;background:#fff;border:1px solid #808080"></div>
<div class="" style="left:17px;top:182px;width:5px;height:1px;background:#000"></div>
<div class="" style="left:19px;top:180px;width:1px;height:5px;background:#000"></div>
<svg style="left:30px;top:175px" width="17" height="15"><path d="M1.5 3.5V2.5l1-1h4l1 2h7v10h-13z" fill="#F0F0A0" stroke="#909050"/><path d="M2 13.5h13.5V4" stroke="#000" fill="none"/><path d="M2 4.5h12" stroke="#fff"/><path d="M3 9h4M5 7v4M10.5 6v6M9 7l1.5-1" stroke="#000" stroke-width="1.6"/></svg>
<div class="tx" style="left:51px;top:176px;line-height:14px;height:14px;"><svg class="c" width="42" height="14" fill="currentColor"><use href="#g148ba1" x="0"/><use href="#g146570" x="14"/><use href="#g145668" x="28"/></svg></div>
<div style="left:20px;top:198px;width:10px;height:1px;background-image:linear-gradient(90deg,#808080 50%,transparent 50%);background-size:2px 1px"></div>
<div class="" style="left:15px;top:194px;width:9px;height:9px;background:#fff;border:1px solid #808080"></div>
<div class="" style="left:17px;top:198px;width:5px;height:1px;background:#000"></div>
<div class="" style="left:19px;top:196px;width:1px;height:5px;background:#000"></div>
<svg style="left:30px;top:191px" width="17" height="15"><path d="M1.5 3.5V2.5l1-1h4l1 2h7v10h-13z" fill="#F0F0A0" stroke="#909050"/><path d="M2 13.5h13.5V4" stroke="#000" fill="none"/><path d="M2 4.5h12" stroke="#fff"/><text x="8.3" y="12" font-size="7.5" font-family="Liberation Sans" font-weight="bold" text-anchor="middle" fill="#000">DB</text></svg>
<div class="tx" style="left:51px;top:192px;line-height:14px;height:14px;"><span style="font-size:13px;letter-spacing:-1px;position:relative;top:1px">DB&nbsp;</span><svg class="c" width="28" height="14" fill="currentColor"><use href="#g148c03" x="0"/><use href="#g147528" x="14"/></svg></div>
<div style="left:20px;top:214px;width:10px;height:1px;background-image:linear-gradient(90deg,#808080 50%,transparent 50%);background-size:2px 1px"></div>
<div class="" style="left:15px;top:210px;width:9px;height:9px;background:#fff;border:1px solid #808080"></div>
<div class="" style="left:17px;top:214px;width:5px;height:1px;background:#000"></div>
<div class="" style="left:19px;top:212px;width:1px;height:5px;background:#000"></div>
<svg style="left:30px;top:207px" width="17" height="15"><path d="M1.5 3.5V2.5l1-1h4l1 2h7v10h-13z" fill="#F0F0A0" stroke="#909050"/><path d="M2 13.5h13.5V4" stroke="#000" fill="none"/><path d="M2 4.5h12" stroke="#fff"/><path d="M5 5v5h6M9 8l2 2-2 2" stroke="#000" stroke-width="1.6" fill="none"/></svg>
<div class="tx" style="left:51px;top:208px;line-height:14px;height:14px;"><svg class="c" width="28" height="14" fill="currentColor"><use href="#g148df3" x="0"/><use href="#g148f6c" x="14"/></svg></div>
<div style="left:20px;top:230px;width:10px;height:1px;background-image:linear-gradient(90deg,#808080 50%,transparent 50%);background-size:2px 1px"></div>
<div class="" style="left:15px;top:226px;width:9px;height:9px;background:#fff;border:1px solid #808080"></div>
<div class="" style="left:17px;top:230px;width:5px;height:1px;background:#000"></div>
<div class="" style="left:19px;top:228px;width:1px;height:5px;background:#000"></div>
<svg style="left:30px;top:223px" width="17" height="15"><path d="M1.5 3.5V2.5l1-1h4l1 2h7v10h-13z" fill="#F0F0A0" stroke="#909050"/><path d="M2 13.5h13.5V4" stroke="#000" fill="none"/><path d="M2 4.5h12" stroke="#fff"/><path d="M3 7h4M5 5v4M3 11h4M9 5v7M8 5h3M8 12h3" stroke="#000" stroke-width="1.2"/></svg>
<div class="tx" style="left:51px;top:224px;line-height:14px;height:14px;"><svg class="c" width="56" height="14" fill="currentColor"><use href="#g146574" x="0"/><use href="#g146570" x="14"/><use href="#g1451fd" x="28"/><use href="#g146570" x="42"/></svg></div>
<div style="left:20px;top:246px;width:10px;height:1px;background-image:linear-gradient(90deg,#808080 50%,transparent 50%);background-size:2px 1px"></div>
<div class="" style="left:15px;top:242px;width:9px;height:9px;background:#fff;border:1px solid #808080"></div>
<div class="" style="left:17px;top:246px;width:5px;height:1px;background:#000"></div>
<div class="" style="left:19px;top:244px;width:1px;height:5px;background:#000"></div>
<svg style="left:30px;top:239px" width="17" height="15"><path d="M1.5 3.5V2.5l1-1h4l1 2h7v10h-13z" fill="#F0F0A0" stroke="#909050"/><path d="M2 13.5h13.5V4" stroke="#000" fill="none"/><path d="M2 4.5h12" stroke="#fff"/><path d="M3 7h4M5 5v4M3 11h4" stroke="#000" stroke-width="1.2"/><text x="11" y="12" font-size="7.5" font-family="Liberation Sans" font-weight="bold" text-anchor="middle" fill="#000">R</text></svg>
<div class="tx" style="left:51px;top:240px;line-height:14px;height:14px;"><svg class="c" width="70" height="14" fill="currentColor"><use href="#g146d6e" x="0"/><use href="#g1470b9" x="14"/><use href="#g146570" x="28"/><use href="#g1451fd" x="42"/><use href="#g146570" x="56"/></svg></div>
<div style="left:20px;top:262px;width:10px;height:1px;background-image:linear-gradient(90deg,#808080 50%,transparent 50%);background-size:2px 1px"></div>
<div class="" style="left:15px;top:258px;width:9px;height:9px;background:#fff;border:1px solid #808080"></div>
<div class="" style="left:17px;top:262px;width:5px;height:1px;background:#000"></div>
<div class="" style="left:19px;top:260px;width:1px;height:5px;background:#000"></div>
<svg style="left:30px;top:255px" width="17" height="15"><path d="M1.5 3.5V2.5l1-1h4l1 2h7v10h-13z" fill="#F0F0A0" stroke="#909050"/><path d="M2 13.5h13.5V4" stroke="#000" fill="none"/><path d="M2 4.5h12" stroke="#fff"/><path d="M3 11q4-6 8-2" stroke="#000" stroke-width="1.4" fill="none"/><circle cx="12" cy="9.5" r="1.3" fill="#000"/></svg>
<div class="tx" style="left:51px;top:256px;line-height:14px;height:14px;"><svg class="c" width="28" height="14" fill="currentColor"><use href="#g1479fb" x="0"/><use href="#g1452a8" x="14"/></svg></div>
<div style="left:20px;top:278px;width:10px;height:1px;background-image:linear-gradient(90deg,#808080 50%,transparent 50%);background-size:2px 1px"></div>
<div class="" style="left:15px;top:274px;width:9px;height:9px;background:#fff;border:1px solid #808080"></div>
<div class="" style="left:17px;top:278px;width:5px;height:1px;background:#000"></div>
<div class="" style="left:19px;top:276px;width:1px;height:5px;background:#000"></div>
<svg style="left:30px;top:271px" width="17" height="15"><path d="M1.5 3.5V2.5l1-1h4l1 2h7v10h-13z" fill="#F0F0A0" stroke="#909050"/><path d="M2 13.5h13.5V4" stroke="#000" fill="none"/><path d="M2 4.5h12" stroke="#fff"/><path d="M3 7h3v4M4.5 10l1.5 1.5L7.5 10M9 11V7h3M11 5.5l1.5 1.5L11 8.5" stroke="#000" stroke-width="1.4" fill="none"/></svg>
<div class="tx" style="left:51px;top:272px;line-height:14px;height:14px;"><svg class="c" width="56" height="14" fill="currentColor"><use href="#g147a0b" x="0"/><use href="#g145e8f" x="14"/><use href="#g1463a7" x="28"/><use href="#g145236" x="42"/></svg></div>
<div style="left:20px;top:294px;width:10px;height:1px;background-image:linear-gradient(90deg,#808080 50%,transparent 50%);background-size:2px 1px"></div>
<div class="" style="left:15px;top:290px;width:9px;height:9px;background:#fff;border:1px solid #808080"></div>
<div class="" style="left:17px;top:294px;width:5px;height:1px;background:#000"></div>
<div class="" style="left:19px;top:292px;width:1px;height:5px;background:#000"></div>
<svg style="left:30px;top:287px" width="17" height="15"><path d="M1.5 3.5V2.5l1-1h4l1 2h7v10h-13z" fill="#F0F0A0" stroke="#909050"/><path d="M2 13.5h13.5V4" stroke="#000" fill="none"/><path d="M2 4.5h12" stroke="#fff"/><path d="M3 6.5h10M4 5v3M7 5v3M10 5v3M3 11h10M5 9.5l-2 1.5 2 1.5M11 9.5l2 1.5-2 1.5" stroke="#000" stroke-width="1.2" fill="none"/></svg>
<div class="tx" style="left:51px;top:288px;line-height:14px;height:14px;"><svg class="c" width="28" height="14" fill="currentColor"><use href="#g1479fb" x="0"/><use href="#g144f4d" x="14"/></svg><span style="font-size:13px;letter-spacing:-1px;position:relative;top:1px">/</span><svg class="c" width="28" height="14" fill="currentColor"><use href="#g145faa" x="0"/><use href="#g1473af" x="14"/></svg></div>
<div style="left:20px;top:310px;width:10px;height:1px;background-image:linear-gradient(90deg,#808080 50%,transparent 50%);background-size:2px 1px"></div>
<div class="" style="left:15px;top:306px;width:9px;height:9px;background:#fff;border:1px solid #808080"></div>
<div class="" style="left:17px;top:310px;width:5px;height:1px;background:#000"></div>
<div class="" style="left:19px;top:308px;width:1px;height:5px;background:#000"></div>
<svg style="left:30px;top:303px" width="17" height="15"><path d="M1.5 3.5V2.5l1-1h4l1 2h7v10h-13z" fill="#F0F0A0" stroke="#909050"/><path d="M2 13.5h13.5V4" stroke="#000" fill="none"/><path d="M2 4.5h12" stroke="#fff"/><path d="M3 9h2M5.5 6v6M8 6v6" stroke="#000" stroke-width="1.4"/><text x="11.5" y="12" font-size="7" font-family="Liberation Sans" font-weight="bold" text-anchor="middle" fill="#000">?</text></svg>
<div class="tx" style="left:51px;top:304px;line-height:14px;height:14px;"><svg class="c" width="42" height="14" fill="currentColor"><use href="#g1472b6" x="0"/><use href="#g146001" x="14"/><use href="#g144f4d" x="28"/></svg></div>
<div style="left:20px;top:326px;width:10px;height:1px;background-image:linear-gradient(90deg,#808080 50%,transparent 50%);background-size:2px 1px"></div>
<div class="" style="left:15px;top:322px;width:9px;height:9px;background:#fff;border:1px solid #808080"></div>
<div class="" style="left:17px;top:326px;width:5px;height:1px;background:#000"></div>
<div class="" style="left:19px;top:324px;width:1px;height:5px;background:#000"></div>
<svg style="left:30px;top:319px" width="17" height="15"><path d="M1.5 3.5V2.5l1-1h4l1 2h7v10h-13z" fill="#F0F0A0" stroke="#909050"/><path d="M2 13.5h13.5V4" stroke="#000" fill="none"/><path d="M2 4.5h12" stroke="#fff"/><circle cx="8.5" cy="9" r="3.5" fill="none" stroke="#000" stroke-width="1.4"/><path d="M8.5 7v2h2" stroke="#000" fill="none"/></svg>
<div class="tx" style="left:51px;top:320px;line-height:14px;height:14px;"><svg class="c" width="42" height="14" fill="currentColor"><use href="#g145b9a" x="0"/><use href="#g1465f6" x="14"/><use href="#g145668" x="28"/></svg></div>
<div style="left:20px;top:342px;width:10px;height:1px;background-image:linear-gradient(90deg,#808080 50%,transparent 50%);background-size:2px 1px"></div>
<div class="" style="left:15px;top:338px;width:9px;height:9px;background:#fff;border:1px solid #808080"></div>
<div class="" style="left:17px;top:342px;width:5px;height:1px;background:#000"></div>
<div class="" style="left:19px;top:340px;width:1px;height:5px;background:#000"></div>
<svg style="left:30px;top:335px" width="17" height="15"><path d="M1.5 3.5V2.5l1-1h4l1 2h7v10h-13z" fill="#F0F0A0" stroke="#909050"/><path d="M2 13.5h13.5V4" stroke="#000" fill="none"/><path d="M2 4.5h12" stroke="#fff"/><path d="M4 6.5h2M8 6.5h2M3 9h10M4 11.5h2M8 11.5h2" stroke="#000" stroke-width="1.4"/></svg>
<div class="tx" style="left:51px;top:336px;line-height:14px;height:14px;"><svg class="c" width="42" height="14" fill="currentColor"><use href="#g145b57" x="0"/><use href="#g14903b" x="14"/><use href="#g148f91" x="28"/></svg></div>
<div style="left:20px;top:358px;width:10px;height:1px;background-image:linear-gradient(90deg,#808080 50%,transparent 50%);background-size:2px 1px"></div>
<div class="" style="left:15px;top:354px;width:9px;height:9px;background:#fff;border:1px solid #808080"></div>
<div class="" style="left:17px;top:358px;width:5px;height:1px;background:#000"></div>
<div class="" style="left:19px;top:356px;width:1px;height:5px;background:#000"></div>
<svg style="left:30px;top:351px" width="17" height="15"><path d="M1.5 3.5V2.5l1-1h4l1 2h7v10h-13z" fill="#F0F0A0" stroke="#909050"/><path d="M2 13.5h13.5V4" stroke="#000" fill="none"/><rect x="3.5" y="5.5" width="9" height="7" fill="#C8C8E8" stroke="#10106A" stroke-width="1.6"/><path d="M1 9h2.5M12.5 9h2.5" stroke="#10106A" stroke-width="2"/></svg>
<div class="tx" style="left:51px;top:352px;line-height:14px;height:14px;"><span style="font-size:13px;letter-spacing:-1px;position:relative;top:1px">FB&nbsp;</span><svg class="c" width="14" height="14" fill="currentColor"><use href="#g145757" x="0"/></svg></div>
<div style="left:20px;top:374px;width:10px;height:1px;background-image:linear-gradient(90deg,#808080 50%,transparent 50%);background-size:2px 1px"></div>
<div class="" style="left:15px;top:370px;width:9px;height:9px;background:#fff;border:1px solid #808080"></div>
<div class="" style="left:17px;top:374px;width:5px;height:1px;background:#000"></div>
<div class="" style="left:19px;top:372px;width:1px;height:5px;background:#000"></div>
<svg style="left:30px;top:367px" width="17" height="15"><path d="M1.5 3.5V2.5l1-1h4l1 2h7v10h-13z" fill="#F0F0A0" stroke="#909050"/><path d="M2 13.5h13.5V4" stroke="#000" fill="none"/><rect x="3.5" y="5.5" width="9" height="7" fill="#C8C8E8" stroke="#10106A" stroke-width="1.6"/><path d="M1 9h2.5M12.5 9h2.5" stroke="#10106A" stroke-width="2"/></svg>
<div class="tx" style="left:51px;top:368px;line-height:14px;height:14px;"><span style="font-size:13px;letter-spacing:-1px;position:relative;top:1px">FC&nbsp;</span><svg class="c" width="14" height="14" fill="currentColor"><use href="#g145757" x="0"/></svg></div>
<div style="left:20px;top:390px;width:10px;height:1px;background-image:linear-gradient(90deg,#808080 50%,transparent 50%);background-size:2px 1px"></div>
<div class="" style="left:15px;top:386px;width:9px;height:9px;background:#fff;border:1px solid #808080"></div>
<div class="" style="left:17px;top:390px;width:5px;height:1px;background:#000"></div>
<div class="" style="left:19px;top:388px;width:1px;height:5px;background:#000"></div>
<svg style="left:30px;top:383px" width="17" height="15"><path d="M1.5 3.5V2.5l1-1h4l1 2h7v10h-13z" fill="#F0F0A0" stroke="#909050"/><path d="M2 13.5h13.5V4" stroke="#000" fill="none"/><rect x="3.5" y="5.5" width="9" height="7" fill="#C8C8E8" stroke="#10106A" stroke-width="1.6"/><path d="M1 9h2.5M12.5 9h2.5" stroke="#10106A" stroke-width="2"/></svg>
<div class="tx" style="left:51px;top:384px;line-height:14px;height:14px;"><span style="font-size:13px;letter-spacing:-1px;position:relative;top:1px">SFB&nbsp;</span><svg class="c" width="14" height="14" fill="currentColor"><use href="#g145757" x="0"/></svg></div>
<div style="left:20px;top:406px;width:10px;height:1px;background-image:linear-gradient(90deg,#808080 50%,transparent 50%);background-size:2px 1px"></div>
<div class="" style="left:15px;top:402px;width:9px;height:9px;background:#fff;border:1px solid #808080"></div>
<div class="" style="left:17px;top:406px;width:5px;height:1px;background:#000"></div>
<div class="" style="left:19px;top:404px;width:1px;height:5px;background:#000"></div>
<svg style="left:30px;top:399px" width="17" height="15"><path d="M1.5 3.5V2.5l1-1h4l1 2h7v10h-13z" fill="#F0F0A0" stroke="#909050"/><path d="M2 13.5h13.5V4" stroke="#000" fill="none"/><rect x="3.5" y="5.5" width="9" height="7" fill="#C8C8E8" stroke="#10106A" stroke-width="1.6"/><path d="M1 9h2.5M12.5 9h2.5" stroke="#10106A" stroke-width="2"/></svg>
<div class="tx" style="left:51px;top:400px;line-height:14px;height:14px;"><span style="font-size:13px;letter-spacing:-1px;position:relative;top:1px">SFC&nbsp;</span><svg class="c" width="14" height="14" fill="currentColor"><use href="#g145757" x="0"/></svg></div>
<div style="left:20px;top:422px;width:10px;height:1px;background-image:linear-gradient(90deg,#808080 50%,transparent 50%);background-size:2px 1px"></div>
<svg style="left:30px;top:414px" width="16" height="16"><path d="M1 15L5 3h3L4 15z" fill="#800000"/><path d="M5 15L9 2h3L8 15z" fill="#C00020"/><path d="M9 15l3-13h3v13z" fill="#2020A0"/><path d="M1 15h14" stroke="#000"/></svg>
<div class="tx" style="left:51px;top:416px;line-height:14px;height:14px;"><svg class="c" width="56" height="14" fill="currentColor"><use href="#g14591a" x="0"/><use href="#g1491cd" x="14"/><use href="#g145b9e" x="28"/><use href="#g144f8b" x="42"/></svg></div>
<div style="left:20px;top:438px;width:10px;height:1px;background-image:linear-gradient(90deg,#808080 50%,transparent 50%);background-size:2px 1px"></div>
<div class="" style="left:15px;top:434px;width:9px;height:9px;background:#fff;border:1px solid #808080"></div>
<div class="" style="left:17px;top:438px;width:5px;height:1px;background:#000"></div>
<div class="" style="left:19px;top:436px;width:1px;height:5px;background:#000"></div>
<svg style="left:32px;top:431px" width="14" height="15"><rect x="0" y="2" width="5" height="12" fill="#FFFF00"/><rect x="5" y="0" width="4" height="14" fill="#40A0C0"/><rect x="9" y="1" width="4" height="13" fill="#2020A0"/><path d="M1 8h3M6 6h2" stroke="#000"/></svg>
<div class="tx" style="left:51px;top:432px;line-height:14px;height:14px;"><svg class="c" width="14" height="14" fill="currentColor"><use href="#g145e93" x="0"/></svg></div>
<div class="" style="left:207px;top:69px;width:1073px;height:779px;background:#D4D0C8"></div>
<div class="" style="left:207px;top:69px;width:1073px;height:2px;background:#000"></div>
<div class="" style="left:207px;top:69px;width:2px;height:779px;background:#000"></div>
<div class="" style="left:209px;top:71px;width:184px;height:231px;background:#D4D0C8"></div>
<div class="" style="left:209px;top:72px;width:183px;height:23px;border-top:1px solid #fff"></div>
<div class="" style="left:209px;top:95px;width:183px;height:207px;background:#fff;border-top:1px solid #000;border-left:1px solid #000"></div>
<div class="" style="left:393px;top:71px;width:1px;height:232px;background:#fff"></div>
<div class="" style="left:215px;top:103px;width:9px;height:9px;background:#fff;border:1px solid #808080"></div>
<div class="" style="left:217px;top:107px;width:5px;height:1px;background:#000"></div>
<div style="left:223px;top:107px;width:6px;height:1px;background-image:linear-gradient(90deg,#808080 50%,transparent 50%);background-size:2px 1px"></div>
<div style="left:238px;top:114px;width:1px;height:6px;background-image:linear-gradient(#808080 50%,transparent 50%);background-size:1px 2px"></div>
<svg style="left:229px;top:97px" width="17" height="17"><circle cx="8.5" cy="8.5" r="7.5" fill="#fff" stroke="#000"/><rect x="4" y="4" width="9" height="9" fill="#B0B0B0" stroke="#000"/><path d="M1 8.5h3M13 8.5h3" stroke="#000"/></svg>
<div class="" style="left:248px;top:97px;width:37px;height:18px;background:#D4D0C8"></div>
<div class="tx" style="left:250px;top:98px;line-height:15px;height:15px;"><svg class="c" width="30" height="15" fill="currentColor"><use href="#g1563a5" x="0"/><use href="#g1553e3" x="15"/></svg></div>
<div class="" style="left:234px;top:120px;width:9px;height:9px;background:#fff;border:1px solid #808080"></div>
<div class="" style="left:236px;top:124px;width:5px;height:1px;background:#000"></div>
<div class="" style="left:238px;top:122px;width:1px;height:5px;background:#000"></div>
<div style="left:243px;top:124px;width:5px;height:1px;background-image:linear-gradient(90deg,#808080 50%,transparent 50%);background-size:2px 1px"></div>
<svg style="left:248px;top:118px" width="17" height="12"><rect x="4" y="1" width="8" height="9" fill="#8080E0" stroke="#000" stroke-width="1.5"/><path d="M0 5.5h4M12 5.5h5M1 3.5h3" stroke="#000"/></svg>
<div class="tx" style="left:270px;top:116px;line-height:15px;height:15px;"><span style="font-size:15px;letter-spacing:-1px;position:relative;top:1px">TEMP</span></div>
<div class="ra1" style="left:397px;top:72px;width:880px;height:22px;"></div>
<div class="tx" style="left:400px;top:77px;line-height:15px;height:15px;"><svg class="c" width="45" height="15" fill="currentColor"><use href="#g155185" x="0"/><use href="#g155bb9" x="15"/><use href="#g15ff1a" x="30"/></svg></div>
<div class="tx" style="left:454px;top:77px;line-height:15px;height:15px;"><span style="font-size:15px;letter-spacing:-1px;position:relative;top:1px">'</span></div>
<div class="tx" style="left:462px;top:77px;line-height:15px;height:15px;"><svg class="c" width="30" height="15" fill="currentColor"><use href="#g1573af" x="0"/><use href="#g155883" x="15"/></svg><span style="font-size:15px;letter-spacing:-1px;position:relative;top:1px">\</span><svg class="c" width="30" height="15" fill="currentColor"><use href="#g1563a5" x="0"/><use href="#g1553e3" x="15"/></svg></div>
<div class="tx" style="left:533px;top:77px;line-height:15px;height:15px;"><span style="font-size:15px;letter-spacing:-1px;position:relative;top:1px">'</span></div>
<div class="" style="left:397px;top:96px;width:879px;height:206px;background:#D4D0C8;border-left:2px solid #000"></div>
<div class="" style="left:397px;top:96px;width:876px;height:2px;background:#000"></div>
<div class="" style="left:1276px;top:71px;width:1px;height:231px;background:#fff"></div>
<div class="" style="left:1278px;top:69px;width:2px;height:234px;background:#000"></div>
<div class="" style="left:399px;top:98px;width:15px;height:17px;background:#D4D0C8"></div>
<div class="" style="left:414px;top:98px;width:1px;height:17px;background:#000"></div>
<div class="" style="left:399px;top:114px;width:874px;height:1px;background:#000"></div>
<div class="" style="left:1273px;top:96px;width:1px;height:59px;background:#000"></div>
<div class="tx" style="left:417px;top:98px;line-height:15px;height:15px;font-weight:bold"><svg class="c" width="30" height="15" fill="currentColor"><use href="#g15b540d" x="0"/><use href="#g15b79f0" x="15"/></svg></div>
<div class="" style="left:399px;top:115px;width:16px;height:40px;background:#fff"></div>
<svg style="left:399px;top:118px" width="16" height="12"><path d="M0 3.5h3M0 6.5h3M12 5.5h4" stroke="#000"/><rect x="3" y="1" width="8" height="9" fill="#8080E0" stroke="#000" stroke-width="1.5"/></svg>
<div class="" style="left:415px;top:115px;width:858px;height:20px;background:#D4D0C8;border-left:1px solid #404040;border-bottom:1px solid #404040"></div>
<div class="tx" style="left:417px;top:116px;line-height:15px;height:15px;"><span style="font-size:15px;letter-spacing:-1px;position:relative;top:1px">TEMP</span></div>
<svg style="left:400px;top:139px" width="14" height="10"><rect x="3" y="2" width="10" height="7" fill="#fff" stroke="#000" stroke-width="1.5"/><path d="M0 0l3 2" stroke="#000"/></svg>
<div class="" style="left:209px;top:302px;width:1069px;height:1px;background:#fff"></div>
<div class="" style="left:207px;top:303px;width:1073px;height:1px;background:#000"></div>
<div class="" style="left:207px;top:304px;width:1073px;height:5px;background:#D4D0C8"></div>
<div class="" style="left:207px;top:309px;width:1073px;height:2px;background:#000"></div>
<div class="" style="left:209px;top:311px;width:1051px;height:512px;background:#fff"></div>
<div class="dith" style="left:1260px;top:311px;width:18px;height:512px;"></div>
<div class="" style="left:1260px;top:311px;width:18px;height:1px;background:#D4D0C8"></div>
<div class="ra" style="left:1261px;top:312px;width:17px;height:17px;"></div>
<svg style="left:1266px;top:318px" width="7" height="4"><path d="M3.5 0L7 4H0z" fill="#000"/></svg>
<div class="ra" style="left:1261px;top:334px;width:17px;height:18px;"></div>
<div class="ra" style="left:1261px;top:806px;width:17px;height:17px;"></div>
<svg style="left:1266px;top:813px" width="7" height="4"><path d="M0 0h7L3.5 4z" fill="#000"/></svg>
<div class="" style="left:1278px;top:311px;width:2px;height:537px;background:#D4D0C8"></div>
<div class="dith" style="left:209px;top:823px;width:1051px;height:19px;"></div>
<div class="ra" style="left:209px;top:824px;width:17px;height:18px;"></div>
<svg style="left:215px;top:829px" width="4" height="7"><path d="M0 3.5L4 0V7z" fill="#000"/></svg>
<div class="ra" style="left:226px;top:824px;width:18px;height:18px;"></div>
<div class="" style="left:1260px;top:823px;width:20px;height:19px;background:#D4D0C8"></div>
<div class="" style="left:207px;top:842px;width:1073px;height:6px;background:#D4D0C8;border-top:1px solid #fff"></div>
<div class="" style="left:224px;top:343px;width:1px;height:253px;background:#000"></div>
<div class="" style="left:225px;top:379px;width:113px;height:2px;background:#00F000"></div>
<div class="" style="left:534px;top:379px;width:114px;height:2px;background:#00F000"></div>
<div class="" style="left:338px;top:352px;width:197px;height:217px;border:2px solid #00F000;background:#fff"></div>
<div class="tx" style="left:408px;top:357px;font-size:15px;letter-spacing:-1px;line-height:16px;height:16px;">FC105</div>
<div class="tx" style="left:341px;top:373px;font-size:15px;letter-spacing:-1px;line-height:16px;height:16px;">EN</div>
<div class="tx" style="left:496px;top:373px;font-size:15px;letter-spacing:-1px;line-height:16px;height:16px;">ENO</div>
<div style="left:280px;top:393px;width:54px;height:16px;background:#C0C0C0"></div>
<div class="tx" style="left:289px;top:395px;font-size:15px;font-weight:bold;line-height:16px;height:16px">20000</div>
<div class="tx" style="left:278px;top:409px;font-size:15px;letter-spacing:-1px;line-height:16px;height:16px;">PIW272</div>
<div class="" style="left:329px;top:416px;width:8px;height:1px;background:#000"></div>
<div class="tx" style="left:341px;top:409px;font-size:15px;letter-spacing:-1px;line-height:16px;height:16px;">IN0</div>
<div class="tx" style="left:464px;top:409px;font-size:15px;letter-spacing:-1px;line-height:16px;height:16px;">RET_VAL</div>
<div style="left:537px;top:393px;width:64px;height:16px;background:#C0C0C0"></div>
<div class="tx" style="left:538px;top:395px;font-size:15px;font-weight:bold;line-height:16px;height:16px">16#0000</div>
<div class="" style="left:537px;top:416px;width:8px;height:1px;background:#000"></div>
<div class="tx" style="left:545px;top:409px;font-size:15px;letter-spacing:-1px;line-height:16px;height:16px;">MW10</div>
<div style="left:226px;top:429px;width:108px;height:16px;background:#C0C0C0"></div>
<div class="tx" style="left:226px;top:431px;font-size:15px;font-weight:bold;line-height:16px;height:16px">000000000025</div>
<div class="tx" style="left:246px;top:446px;font-size:15px;letter-spacing:-1px;line-height:16px;height:16px;">2.500000e+</div>
<div style="left:537px;top:429px;width:109px;height:16px;background:#C0C0C0"></div>
<div class="tx" style="left:538px;top:431px;font-size:15px;font-weight:bold;line-height:16px;height:16px">0000018.0845</div>
<div class="tx" style="left:488px;top:445px;font-size:15px;letter-spacing:-1px;line-height:16px;height:16px;">OUT4</div>
<div class="" style="left:537px;top:452px;width:8px;height:1px;background:#000"></div>
<div class="tx" style="left:545px;top:446px;font-size:15px;letter-spacing:-1px;line-height:16px;height:16px;">DB10.DBD0</div>
<div class="tx" style="left:302px;top:463px;font-size:15px;letter-spacing:-1px;line-height:16px;height:16px;">001</div>
<div class="" style="left:329px;top:470px;width:8px;height:1px;background:#000"></div>
<div class="tx" style="left:341px;top:463px;font-size:15px;letter-spacing:-1px;line-height:16px;height:16px;">IN1</div>
<div style="left:226px;top:485px;width:108px;height:16px;background:#C0C0C0"></div>
<div class="tx" style="left:226px;top:487px;font-size:15px;font-weight:bold;line-height:16px;height:16px">000000000000</div>
<div class="tx" style="left:246px;top:501px;font-size:15px;letter-spacing:-1px;line-height:16px;height:16px;">0.000000e+</div>
<div class="tx" style="left:302px;top:518px;font-size:15px;letter-spacing:-1px;line-height:16px;height:16px;">000</div>
<div class="" style="left:329px;top:525px;width:8px;height:1px;background:#000"></div>
<div class="tx" style="left:341px;top:518px;font-size:15px;letter-spacing:-1px;line-height:16px;height:16px;">IN2</div>
<div style="left:316px;top:539px;width:18px;height:16px;background:#C0C0C0"></div>
<div class="tx" style="left:325px;top:541px;font-size:15px;font-weight:bold;line-height:16px;height:16px">0</div>
<div class="tx" style="left:294px;top:553px;font-size:15px;letter-spacing:-1px;line-height:16px;height:16px;">M0.0</div>
<div class="" style="left:329px;top:560px;width:8px;height:1px;background:#000"></div>
<div class="tx" style="left:341px;top:553px;font-size:15px;letter-spacing:-1px;line-height:16px;height:16px;">IN3</div>
<div class="tx" style="left:224px;top:617px;line-height:16px;height:16px;font-weight:bold"><svg class="c" width="48" height="16" fill="currentColor"><use href="#g16b7a0b" x="0"/><use href="#g16b5e8f" x="16"/><use href="#g16b6bb5" x="32"/></svg><span style="font-size:15px;position:relative;top:1px">&nbsp;2</span><svg class="c" width="16" height="16" fill="currentColor"><use href="#g16bff1a" x="0"/></svg></div>
<div class="tx" style="left:306px;top:617px;line-height:16px;height:16px;"><svg class="c" width="48" height="16" fill="currentColor"><use href="#g166807" x="0"/><use href="#g169898" x="16"/><use href="#g16ff1a" x="32"/></svg></div>
<div class="" style="left:224px;top:644px;width:240px;height:45px;background:#C0C0C0;border:1px solid #000"></div>
<div class="tx" style="left:226px;top:648px;line-height:16px;height:16px;"><svg class="c" width="48" height="16" fill="currentColor"><use href="#g166ce8" x="0"/><use href="#g1691ca" x="16"/><use href="#g16ff1a" x="32"/></svg></div>
<div class="" style="left:224px;top:713px;width:1px;height:110px;background:#000"></div>
<div class="" style="left:225px;top:749px;width:113px;height:1px;background:#000"></div>
<div class="" style="left:429px;top:749px;width:17px;height:1px;background:#000"></div>
<div class="" style="left:338px;top:722px;width:91px;height:110px;border:1px solid #000;background:#fff"></div>
<div class="tx sans" style="left:361px;top:725px;font-size:13px;font-weight:bold;line-height:14px;height:14px">SUB_R</div>
<div class="tx" style="left:341px;top:742px;font-size:15px;letter-spacing:-1px;line-height:16px;height:16px;">EN</div>
<div class="tx" style="left:390px;top:742px;font-size:15px;letter-spacing:-1px;line-height:16px;height:16px;">ENO</div>
<div style="left:226px;top:762px;width:108px;height:16px;background:#C0C0C0"></div>
<div class="tx" style="left:226px;top:764px;font-size:15px;font-weight:bold;line-height:16px;height:16px">0000018.0845</div>
<div class="tx" style="left:254px;top:778px;font-size:15px;letter-spacing:-1px;line-height:16px;height:16px;">DB10.DBD0</div>
<div class="" style="left:329px;top:785px;width:8px;height:1px;background:#000"></div>
<div class="tx" style="left:341px;top:778px;font-size:15px;letter-spacing:-1px;line-height:16px;height:16px;">IN1</div>
<div class="tx" style="left:390px;top:778px;font-size:15px;letter-spacing:-1px;line-height:16px;height:16px;">OUT</div>
<div class="" style="left:430px;top:785px;width:8px;height:1px;background:#000"></div>
<div class="tx" style="left:438px;top:778px;font-size:15px;letter-spacing:-1px;line-height:16px;height:16px;">D</div>
<div style="left:432px;top:762px;width:18px;height:16px;background:#C0C0C0"></div>
<div class="tx" style="left:433px;top:764px;font-size:15px;font-weight:bold;line-height:16px;height:16px">00</div>
<div style="left:226px;top:798px;width:108px;height:16px;background:#C0C0C0"></div>
<div class="tx" style="left:226px;top:800px;font-size:15px;font-weight:bold;line-height:16px;height:16px">0000000000.2</div>
<div class="tx" style="left:246px;top:814px;font-size:15px;letter-spacing:-1px;line-height:16px;height:16px;">2.000000e-</div>
<div class="dith" style="left:209px;top:823px;width:1051px;height:19px;"></div>
<div class="ra" style="left:209px;top:824px;width:17px;height:18px;"></div>
<svg style="left:215px;top:829px" width="4" height="7"><path d="M0 3.5L4 0V7z" fill="#000"/></svg>
<div class="ra" style="left:226px;top:824px;width:18px;height:18px;"></div>
<div class="" style="left:0px;top:848px;width:1280px;height:1px;background:#404040"></div>
<div class="" style="left:0px;top:849px;width:1280px;height:119px;background:#D4D0C8"></div>
<div class="ra1" style="left:5px;top:854px;width:12px;height:11px;"></div>
<svg style="left:8px;top:856px" width="7" height="6"><path d="M0 0L7 6M7 0L0 6" stroke="#000" stroke-width="1.6"/></svg>
<div class="ra1" style="left:5px;top:866px;width:12px;height:12px;"></div>
<svg style="left:9px;top:868px" width="4" height="7"><path d="M0 0L4 3.5L0 7z" fill="#808080"/></svg>
<div class="" style="left:7px;top:880px;width:3px;height:84px;border-left:1px solid #fff;border-right:1px solid #808080"></div>
<div class="" style="left:11px;top:880px;width:3px;height:84px;border-left:1px solid #fff;border-right:1px solid #808080"></div>
<div class="" style="left:19px;top:853px;width:1261px;height:113px;background:#D4D0C8"></div>
<div class="" style="left:19px;top:853px;width:1257px;height:1px;background:#404040"></div>
<div class="" style="left:19px;top:853px;width:1px;height:112px;background:#404040"></div>
<div class="" style="left:20px;top:854px;width:1px;height:111px;background:#000"></div>
<div class="" style="left:21px;top:854px;width:1255px;height:92px;background:#fff"></div>
<div class="" style="left:1276px;top:853px;width:1px;height:113px;background:#fff"></div>
<div class="" style="left:21px;top:946px;width:1255px;height:18px;background:#D4D0C8"></div>
<div class="" style="left:96px;top:946px;width:1180px;height:1px;background:#000"></div>
<div class="" style="left:21px;top:963px;width:76px;height:1px;background:#000"></div>
<div class="" style="left:19px;top:965px;width:1258px;height:1px;background:#fff"></div>
<div class="ra1" style="left:21px;top:947px;width:18px;height:16px;"></div>
<div class="ra1" style="left:40px;top:947px;width:18px;height:16px;"></div>
<div class="ra1" style="left:59px;top:947px;width:18px;height:16px;"></div>
<div class="ra1" style="left:78px;top:947px;width:18px;height:16px;"></div>
<svg style="left:21px;top:947px" width="18" height="16"><path d="M4 3v10" stroke="#808080" stroke-width="2"/><path d="M13 3L7 8l6 5z" fill="#808080"/></svg>
<svg style="left:40px;top:947px" width="18" height="16"><path d="M12 3L6 8l6 5z" fill="#808080"/></svg>
<svg style="left:59px;top:947px" width="18" height="16"><path d="M6 3l6 5-6 5z" fill="#808080"/></svg>
<svg style="left:78px;top:947px" width="18" height="16"><path d="M5 3l6 5-6 5z" fill="#808080"/><path d="M14 3v10" stroke="#808080" stroke-width="2"/></svg>
<svg style="left:0;top:0" width="1280" height="1024"><path d="M96.5 946.5L102.5 963.5H184.5L187.5 946.5" fill="#D4D0C8" stroke="#000"/><path d="M187.5 946.5L193.5 963.5H275.5L278.5 946.5" fill="#fff" stroke="#000"/><path d="M278.5 946.5L284.5 963.5H411.5L414.5 946.5" fill="#D4D0C8" stroke="#000"/><path d="M414.5 946.5L420.5 963.5H548.5L551.5 946.5" fill="#D4D0C8" stroke="#000"/><path d="M551.5 946.5L557.5 963.5H646.5L649.5 946.5" fill="#D4D0C8" stroke="#000"/><path d="M649.5 946.5L655.5 963.5H742.5L745.5 946.5" fill="#D4D0C8" stroke="#000"/><path d="M745.5 946.5L751.5 963.5H839.5L842.5 946.5" fill="#D4D0C8" stroke="#000"/><rect x="189" y="945" width="88" height="2" fill="#fff"/></svg>
<div class="tx" style="left:119px;top:948px;line-height:14px;height:14px;"><span style="font-size:13px;letter-spacing:-1px;position:relative;top:1px">1</span><svg class="c" width="42" height="14" fill="currentColor"><use href="#g14ff1a" x="0"/><use href="#g149519" x="14"/><use href="#g148bef" x="28"/></svg></div>
<div class="tx" style="left:209px;top:948px;line-height:14px;height:14px;"><span style="font-size:13px;letter-spacing:-1px;position:relative;top:1px">2</span><svg class="c" width="42" height="14" fill="currentColor"><use href="#g14ff1a" x="0"/><use href="#g144fe1" x="14"/><use href="#g14606f" x="28"/></svg></div>
<div class="tx" style="left:310px;top:948px;line-height:14px;height:14px;"><span style="font-size:13px;letter-spacing:-1px;position:relative;top:1px">3</span><svg class="c" width="70" height="14" fill="currentColor"><use href="#g14ff1a" x="0"/><use href="#g144ea4" x="14"/><use href="#g1453c9" x="28"/><use href="#g1453c2" x="42"/><use href="#g148003" x="56"/></svg></div>
<div class="tx" style="left:446px;top:948px;line-height:14px;height:14px;"><span style="font-size:13px;letter-spacing:-1px;position:relative;top:1px">4</span><svg class="c" width="70" height="14" fill="currentColor"><use href="#g14ff1a" x="0"/><use href="#g145730" x="14"/><use href="#g145740" x="28"/><use href="#g144fe1" x="42"/><use href="#g14606f" x="56"/></svg></div>
<div class="tx" style="left:578px;top:948px;line-height:14px;height:14px;"><span style="font-size:13px;letter-spacing:-1px;position:relative;top:1px">5</span><svg class="c" width="42" height="14" fill="currentColor"><use href="#g14ff1a" x="0"/><use href="#g144fee" x="14"/><use href="#g146539" x="28"/></svg></div>
<div class="tx" style="left:673px;top:948px;line-height:14px;height:14px;"><span style="font-size:13px;letter-spacing:-1px;position:relative;top:1px">6</span><svg class="c" width="42" height="14" fill="currentColor"><use href="#g14ff1a" x="0"/><use href="#g148bca" x="14"/><use href="#g1465ad" x="28"/></svg></div>
<div class="tx" style="left:770px;top:948px;line-height:14px;height:14px;"><span style="font-size:13px;letter-spacing:-1px;position:relative;top:1px">7</span><svg class="c" width="42" height="14" fill="currentColor"><use href="#g14ff1a" x="0"/><use href="#g146bd4" x="14"/><use href="#g148f83" x="28"/></svg></div>
<div class="" style="left:0px;top:968px;width:1280px;height:26px;background:#D4D0C8;border-top:1px solid #808080"></div>
<div class="tx" style="left:2px;top:974px;line-height:14px;height:14px;"><svg class="c" width="28" height="14" fill="currentColor"><use href="#g146309" x="0"/><use href="#g144e0b" x="14"/></svg><span style="font-size:13px;letter-spacing:-1px;position:relative;top:1px">&nbsp;F1&nbsp;</span><svg class="c" width="84" height="14" fill="currentColor"><use href="#g144ee5" x="0"/><use href="#g1483b7" x="14"/><use href="#g1453d6" x="28"/><use href="#g145e2e" x="42"/><use href="#g1452a9" x="56"/><use href="#g143002" x="70"/></svg></div>
<svg style="left:327px;top:973px" width="17" height="16"><path d="M3 3h11l2 3v4l-2 3H3l-2-3V6z" fill="#fff" stroke="#000"/><rect x="5" y="5" width="7" height="6" fill="#1A3A4A"/><path d="M6 7h3" stroke="#8FF"/></svg>
<div class="sk1" style="left:364px;top:973px;width:69px;height:18px;"></div>
<svg style="left:441px;top:974px" width="16" height="16"><path d="M8 1l7 7-7 7-7-7z" fill="#fff" stroke="#10106A" stroke-width="1.5"/><path d="M8 4v8" stroke="#000" stroke-width="2"/></svg>
<div class="sk1" style="left:463px;top:973px;width:189px;height:18px;"></div>
<div class="" style="left:465px;top:974px;width:62px;height:16px;background:#00F800"></div>
<div class="tx" style="left:466px;top:976px;line-height:14px;height:14px;"><span style="font-size:13px;letter-spacing:-1px;position:relative;top:1px">RUN</span></div>
<div class="sk1" style="left:654px;top:973px;width:139px;height:18px;"></div>
<div class="tx" style="left:657px;top:976px;line-height:14px;height:14px;"><span style="font-size:13px;letter-spacing:-1px;position:relative;top:1px">Abs&nbsp;&lt;&nbsp;5.2</span></div>
<div class="sk1" style="left:795px;top:973px;width:216px;height:18px;"></div>
<div class="sk1" style="left:1013px;top:973px;width:69px;height:18px;"></div>
<div class="tx" style="left:1015px;top:976px;line-height:14px;height:14px;"><span style="font-size:13px;letter-spacing:-1px;position:relative;top:1px">Rd</span></div>
<div class="sk1" style="left:1083px;top:973px;width:65px;height:18px;"></div>
<div class="sk1" style="left:1149px;top:973px;width:131px;height:18px;"></div>
<div class="" style="left:0px;top:994px;width:1280px;height:30px;background:#D4D0C8;border-top:1px solid #D4D0C8;box-shadow:inset 0 1px 0 #fff"></div>
<div class="" style="left:0px;top:995px;width:1280px;height:1px;background:#fff"></div>
<div class="ra" style="left:2px;top:997px;width:53px;height:23px;"></div>
<svg style="left:4px;top:1000px" width="18" height="16"><path d="M2 3q3-2 6 0v5q-3-2-6 0z" fill="#F04020"/><path d="M9 3q3 2 6 0v5q-3 2-6 0z" fill="#30B030"/><path d="M2 9q3-2 6 0v5q-3-2-6 0z" fill="#2060E0"/><path d="M9 9q3 2 6 0v5q-3 2-6 0z" fill="#F0C020"/></svg>
<div class="tx" style="left:23px;top:1001px;line-height:14px;height:14px;"><svg class="c" width="28" height="14" fill="currentColor"><use href="#g145f00" x="0"/><use href="#g1459cb" x="14"/></svg></div>
<div class="" style="left:59px;top:998px;width:39px;height:22px;box-shadow:inset 1px 1px #fff,inset -1px -1px #808080"></div>
<svg style="left:67px;top:1001px" width="20" height="19"><circle cx="6" cy="5" r="4" fill="#F0A020"/><circle cx="14" cy="5" r="4" fill="#40A0E0"/><circle cx="6" cy="13" r="4" fill="#F0C030"/><circle cx="14" cy="13" r="4" fill="#E04040"/><circle cx="10" cy="9" r="3" fill="#60C040"/></svg>
<svg style="left:105px;top:1000px" width="18" height="18"><rect x="2" y="2" width="13" height="14" rx="2" fill="#3060C0" stroke="#102060"/><path d="M5 6h7M5 9h7M5 12h5" stroke="#fff"/><path d="M10 3l5-2v4z" fill="#fff"/></svg>
<svg style="left:130px;top:1000px" width="18" height="18"><circle cx="9" cy="9" r="8" fill="#5090E0" stroke="#2050A0"/><circle cx="9" cy="9" r="5.5" fill="#fff"/><path d="M6 12V7h6v5M9 7v5" stroke="#2050A0" stroke-width="1.5" fill="none"/></svg>
<svg style="left:155px;top:1000px" width="18" height="18"><path d="M3 15L7 3h10l-2 4H10l-1 3h5l-2 4H8z" fill="#E03020"/><path d="M2 8q5-6 13-4" stroke="#2070D0" stroke-width="2" fill="none"/></svg>
<div class="tx" style="left:186px;top:1000px;font-size:13px;font-weight:bold">»</div>
<div class="ra" style="left:200px;top:997px;width:160px;height:23px;"></div>
<svg style="left:204px;top:1000px" width="18" height="18"><circle cx="9" cy="9" r="8" fill="#5090E0" stroke="#2050A0"/><circle cx="9" cy="9" r="5.5" fill="#fff"/><path d="M6 12V7h6v5M9 7v5" stroke="#2050A0" stroke-width="1.5" fill="none"/></svg>
<div class="tx" style="left:227px;top:1003px;line-height:14px;height:14px;"><span style="font-size:13px;letter-spacing:-1px;position:relative;top:1px">s7-300&nbsp;5.4</span><svg class="c" width="28" height="14" fill="currentColor"><use href="#g144eff" x="0"/><use href="#g14771f" x="14"/></svg><span style="font-size:13px;letter-spacing:-1px;position:relative;top:1px">...</span></div>
<div class="ra" style="left:362px;top:997px;width:161px;height:23px;"></div>
<svg style="left:366px;top:1001px" width="17" height="14"><path d="M0.5 2.5h6l1 2h8.5v9H0.5z" fill="#F0D060" stroke="#806010"/><path d="M0.5 13.5l2-7h14l-2 7z" fill="#F8E890" stroke="#806010"/></svg>
<div class="tx" style="left:389px;top:1003px;line-height:14px;height:14px;"><svg class="c" width="42" height="14" fill="currentColor"><use href="#g14897f" x="0"/><use href="#g1495e8" x="14"/><use href="#g145b50" x="28"/></svg></div>
<div class="ra" style="left:526px;top:997px;width:160px;height:23px;"></div>
<svg style="left:529px;top:999px" width="20" height="20"><path d="M2 17l3-4 3 2-2 3z" fill="#202020"/><path d="M5 12l5-9q3-2 5 1l-4 9z" fill="#181818"/><path d="M11 13l3-5 3 1q1 3-2 6l-3 1z" fill="#30A0E0"/><circle cx="7" cy="5" r="1.5" fill="#fff"/></svg>
<div class="tx" style="left:552px;top:1003px;line-height:14px;height:14px;"><span style="font-size:13px;letter-spacing:-1px;position:relative;top:1px">SIMATIC&nbsp;Manager...</span></div>
<div class="" style="left:689px;top:997px;width:160px;height:23px;background:#E8E6E2;box-shadow:inset 1px 1px #404040,inset -1px -1px #fff,inset 2px 2px #808080"></div>
<svg style="left:693px;top:1000px" width="18" height="18"><rect x="1" y="1" width="16" height="16" rx="5" fill="#fff" stroke="#404040" stroke-dasharray="2 1"/><rect x="4" y="4" width="10" height="10" fill="#503030"/><rect x="9" y="5" width="3" height="8" fill="#40C0B0"/></svg>
<div class="tx" style="left:716px;top:1003px;line-height:14px;height:14px;"><span style="font-size:13px;letter-spacing:-1px;position:relative;top:1px">S7-PLCSIM1</span></div>
<div class="ra" style="left:852px;top:997px;width:160px;height:23px;"></div>
<svg style="left:855px;top:1000px" width="20" height="19"><rect x="2" y="1" width="16" height="16" fill="#E2DEE6"/><path d="M2.5 1v16" stroke="#000" stroke-width="1.3"/><path d="M3 4.5h13M3 11.5h6" stroke="#303030"/><path d="M5.5 2v5M8.5 2v5M5.5 9v5M8.5 9v5" stroke="#404040" stroke-width="1.2"/><path d="M14 2.5q-1.5 2 0 4M16.5 2.5q1.5 2 0 4" stroke="#303030" fill="none"/><path d="M10 9.5l8 8" stroke="#E8A030" stroke-width="3"/><path d="M12 11.5l6 6" stroke="#B02000" stroke-width="1.5"/><path d="M9 8l3 1.5-1.5 1.5z" fill="#000"/></svg>
<div class="tx" style="left:877px;top:1003px;line-height:14px;height:14px;"><span style="font-size:13px;letter-spacing:-1px;position:relative;top:1px">LAD/STL/FBD&nbsp;&nbsp;-&nbsp;...</span></div>
<svg style="left:1145px;top:1003px" width="20" height="14"><rect x="1" y="4" width="18" height="9" fill="#fff" stroke="#000"/><path d="M3 7h14M3 10h14M5 5v7M8 5v7M11 5v7M14 5v7" stroke="#000" stroke-width="0.8"/><path d="M10 4V1h4" stroke="#000" fill="none"/></svg>
<div class="" style="left:1168px;top:997px;width:112px;height:24px;box-shadow:inset 1px 1px #808080,inset -1px -1px #fff"></div>
<div class="tx" style="left:1174px;top:1004px;font-size:13px;font-weight:bold">«</div>
<svg style="left:1189px;top:1000px" width="18" height="18"><circle cx="9" cy="9" r="8" fill="#5090E0" stroke="#2050A0"/><circle cx="9" cy="9" r="5.5" fill="#fff"/><path d="M6 12V7h6v5M9 7v5" stroke="#2050A0" stroke-width="1.5" fill="none"/></svg>
<svg style="left:1208px;top:1000px" width="19" height="18"><rect x="7" y="1" width="10" height="8" fill="#60A0F0" stroke="#204080"/><rect x="1" y="7" width="10" height="8" fill="#60A0F0" stroke="#204080"/><path d="M5 15v2M13 9v3" stroke="#204080"/></svg>
<div class="tx" style="left:1234px;top:1003px;line-height:14px;height:14px;"><span style="font-size:13px;letter-spacing:-1px;position:relative;top:1px">17:37</span></div>
<svg style="left:1260px;top:936px" width="20" height="48"><circle cx="26" cy="24" r="22" fill="#38B048" stroke="#D0E8D0" stroke-width="2"/><text x="8" y="28" font-size="11" font-family="Liberation Sans" font-weight="bold" fill="#fff">44</text></svg>
<div class="" style="left:446px;top:460px;width:814px;height:423px;background:#D4D0C8;box-shadow:inset -1px -1px #404040,inset 1px 1px #D4D0C8,inset -2px -2px #808080,inset 2px 2px #fff"></div>
<div class="" style="left:450px;top:464px;width:806px;height:20px;background:linear-gradient(90deg,#0A246A,#A6CAF0)"></div>
<svg style="left:452px;top:465px" width="18" height="18"><rect x="1" y="1" width="16" height="16" rx="5" fill="#fff" stroke="#303030" stroke-dasharray="2 1"/><rect x="4" y="4" width="10" height="10" fill="#503838"/><rect x="9" y="5" width="3" height="8" fill="#40C0B0"/><path d="M4 9h4" stroke="#C08080"/></svg>
<div class="tx" style="left:474px;top:467px;color:#fff;font-weight:bold;font-size:13.33px;line-height:14px;height:14px">S7-PLCSIM1</div>
<div class="ra" style="left:1195px;top:466px;width:18px;height:16px;"></div>
<div class="" style="left:1199px;top:476px;width:7px;height:2px;background:#000"></div>
<div class="ra" style="left:1214px;top:466px;width:18px;height:16px;"></div>
<div class="" style="left:1218px;top:468px;width:9px;height:9px;border:1px solid #000;border-top-width:2px"></div>
<div class="ra" style="left:1235px;top:466px;width:18px;height:16px;"></div>
<svg style="left:1235px;top:466px" width="18" height="16"><path d="M5 3L13 12M13 3L5 12" stroke="#000" stroke-width="1.8"/></svg>
<div class="tx" style="left:457px;top:490px;line-height:14px;height:14px;"><svg class="c" width="28" height="14" fill="currentColor"><use href="#g146587" x="0"/><use href="#g144ef6" x="14"/></svg><span style="font-size:13px;letter-spacing:-1px;position:relative;top:1px">(F)</span></div>
<div class="tx" style="left:520px;top:490px;line-height:14px;height:14px;"><svg class="c" width="28" height="14" fill="currentColor"><use href="#g147f16" x="0"/><use href="#g148f91" x="14"/></svg><span style="font-size:13px;letter-spacing:-1px;position:relative;top:1px">(E)</span></div>
<div class="tx" style="left:583px;top:490px;line-height:14px;height:14px;"><svg class="c" width="28" height="14" fill="currentColor"><use href="#g1489c6" x="0"/><use href="#g1456fe" x="14"/></svg><span style="font-size:13px;letter-spacing:-1px;position:relative;top:1px">(V)</span></div>
<div class="tx" style="left:646px;top:490px;line-height:14px;height:14px;"><svg class="c" width="28" height="14" fill="currentColor"><use href="#g1463d2" x="0"/><use href="#g145165" x="14"/></svg><span style="font-size:13px;letter-spacing:-1px;position:relative;top:1px">(I)</span></div>
<div class="tx" style="left:708px;top:490px;line-height:14px;height:14px;"><span style="font-size:13px;letter-spacing:-1px;position:relative;top:1px">PLC(P)</span></div>
<div class="tx" style="left:765px;top:490px;line-height:14px;height:14px;"><svg class="c" width="28" height="14" fill="currentColor"><use href="#g146267" x="0"/><use href="#g14884c" x="14"/></svg><span style="font-size:13px;letter-spacing:-1px;position:relative;top:1px">(X)</span></div>
<div class="tx" style="left:828px;top:490px;line-height:14px;height:14px;"><svg class="c" width="28" height="14" fill="currentColor"><use href="#g145de5" x="0"/><use href="#g145177" x="14"/></svg><span style="font-size:13px;letter-spacing:-1px;position:relative;top:1px">(T)</span></div>
<div class="tx" style="left:890px;top:490px;line-height:14px;height:14px;"><svg class="c" width="28" height="14" fill="currentColor"><use href="#g147a97" x="0"/><use href="#g1453e3" x="14"/></svg><span style="font-size:13px;letter-spacing:-1px;position:relative;top:1px">(W)</span></div>
<div class="tx" style="left:953px;top:490px;line-height:14px;height:14px;"><svg class="c" width="28" height="14" fill="currentColor"><use href="#g145e2e" x="0"/><use href="#g1452a9" x="14"/></svg><span style="font-size:13px;letter-spacing:-1px;position:relative;top:1px">(H)</span></div>
<div class="" style="left:450px;top:507px;width:806px;height:1px;background:#808080"></div>
<div class="" style="left:450px;top:508px;width:806px;height:1px;background:#fff"></div>
<div class="" style="left:452px;top:510px;width:3px;height:23px;box-shadow:inset 1px 1px #fff,inset -1px -1px #808080"></div>
<div class="" style="left:455px;top:509px;width:796px;height:25px;box-shadow:inset -1px -1px #808080,inset 1px 1px #fff"></div>
<div class="" style="left:690px;top:512px;width:2px;height:19px;border-left:1px solid #808080;border-right:1px solid #fff"></div>
<div class="" style="left:764px;top:512px;width:2px;height:19px;border-left:1px solid #808080;border-right:1px solid #fff"></div>
<div class="" style="left:838px;top:512px;width:2px;height:19px;border-left:1px solid #808080;border-right:1px solid #fff"></div>
<div class="" style="left:872px;top:512px;width:2px;height:19px;border-left:1px solid #808080;border-right:1px solid #fff"></div>
<div class="" style="left:1040px;top:512px;width:2px;height:19px;border-left:1px solid #808080;border-right:1px solid #fff"></div>
<div class="" style="left:1115px;top:512px;width:2px;height:19px;border-left:1px solid #808080;border-right:1px solid #fff"></div>
<div class="" style="left:1167px;top:512px;width:2px;height:19px;border-left:1px solid #808080;border-right:1px solid #fff"></div>
<div class="" style="left:1221px;top:512px;width:2px;height:19px;border-left:1px solid #808080;border-right:1px solid #fff"></div>
<div class="sk" style="left:554px;top:512px;width:131px;height:21px;background:#fff"></div>
<div class="tx" style="left:559px;top:515px;line-height:14px;height:14px;"><span style="font-size:13px;letter-spacing:-1px;position:relative;top:1px">PLCSIM(</span></div>
<div class="tx" style="left:608px;top:515px;line-height:14px;height:14px;font-weight:bold"><span style="font-size:13.33px;position:relative;top:1px">TCP/IP</span></div>
<div class="tx" style="left:656px;top:515px;line-height:14px;height:14px;"><span style="font-size:13px;letter-spacing:-1px;position:relative;top:1px">)</span></div>
<div class="ra" style="left:667px;top:514px;width:16px;height:17px;"></div>
<svg style="left:672px;top:521px" width="7" height="4"><path d="M0 0h7L3.5 4z" fill="#000"/></svg>
<div class="" style="left:450px;top:534px;width:806px;height:325px;background:#808080;box-shadow:inset 1px 1px #808080,inset -1px -1px #fff,inset 2px 2px #404040,inset -2px -2px #D4D0C8"></div>
<div class="" style="left:451px;top:857px;width:804px;height:1px;background:#fff"></div>
<div class="tx" style="left:451px;top:862px;line-height:14px;height:14px;"><svg class="c" width="14" height="14" fill="currentColor"><use href="#g146309" x="0"/></svg><span style="font-size:13px;letter-spacing:-1px;position:relative;top:1px">&nbsp;F1&nbsp;</span><svg class="c" width="70" height="14" fill="currentColor"><use href="#g1483b7" x="0"/><use href="#g145f97" x="14"/><use href="#g145e2e" x="28"/><use href="#g1452a9" x="42"/><use href="#g143002" x="56"/></svg></div>
<div class="sk1" style="left:777px;top:860px;width:462px;height:19px;"></div>
<div class="tx" style="left:780px;top:861px;line-height:14px;height:14px;"><span style="font-size:13px;letter-spacing:-1px;position:relative;top:1px">Default:&nbsp;&nbsp;MPI=2&nbsp;DP=2&nbsp;Local=2&nbsp;IP=192.168.0.1&nbsp;ISO=08-00-12-34-56-78</span></div>
<svg style="left:1240px;top:864px" width="14" height="14"><path d="M13 1L1 13M13 5L5 13M13 9L9 13" stroke="#808080" stroke-width="1"/><path d="M13 2L2 13M13 6L6 13M13 10L10 13" stroke="#fff" stroke-width="1"/></svg>
<div class="" style="left:452px;top:535px;width:184px;height:101px;background:#D4D0C8;box-shadow:inset -1px -1px #404040,inset 1px 1px #D4D0C8,inset -2px -2px #808080,inset 2px 2px #fff"></div>
<div class="" style="left:455px;top:538px;width:178px;height:20px;background:linear-gradient(90deg,#808080,#C0C0C0)"></div>
<svg style="left:456px;top:539px" width="18" height="18"><rect x="0" y="0" width="18" height="18" fill="#1010C0"/><rect x="2" y="2" width="14" height="14" fill="#fff"/><rect x="6" y="4" width="6" height="11" fill="#303030"/><rect x="7" y="6" width="3" height="7" fill="#40C0B0"/></svg>
<div class="tx" style="left:476px;top:542px;color:#D4D0C8;font-weight:bold;font-size:13.33px;line-height:14px;height:14px">CPU</div>
<div class="ra" style="left:571px;top:541px;width:18px;height:15px;"></div>
<div class="" style="left:575px;top:550px;width:7px;height:2px;background:#000"></div>
<div class="ra" style="left:590px;top:541px;width:18px;height:15px;"></div>
<div class="" style="left:595px;top:544px;width:9px;height:9px;border:1px solid #fff;border-top-width:2px"></div>
<div class="" style="left:594px;top:543px;width:9px;height:9px;border:1px solid #808080;border-top-width:2px"></div>
<div class="ra" style="left:611px;top:541px;width:18px;height:15px;"></div>
<svg style="left:611px;top:541px" width="18" height="15"><path d="M5 3L13 11M13 3L5 11" stroke="#000" stroke-width="1.8"/></svg>
<div class="" style="left:456px;top:561px;width:176px;height:72px;box-shadow:inset 1px 1px #808080,inset -1px -1px #fff"></div>
<div class="" style="left:462px;top:563px;width:14px;height:12px;background:#C8C8C8;border:1px solid #303030"></div>
<div class="tx" style="left:479px;top:563px;font-family:'Liberation Sans',sans-serif;font-size:13px;line-height:13px;height:13px;">SF</div>
<div class="" style="left:462px;top:577px;width:14px;height:12px;background:#C8C8C8;border:1px solid #303030"></div>
<div class="tx" style="left:479px;top:577px;font-family:'Liberation Sans',sans-serif;font-size:13px;line-height:13px;height:13px;">DP</div>
<div class="" style="left:462px;top:591px;width:14px;height:12px;background:#00F800;border:1px solid #303030"></div>
<div class="tx" style="left:479px;top:591px;font-family:'Liberation Sans',sans-serif;font-size:13px;line-height:13px;height:13px;">DC</div>
<div class="" style="left:462px;top:605px;width:14px;height:12px;background:#00F800;border:1px solid #303030"></div>
<div class="tx" style="left:479px;top:605px;font-family:'Liberation Sans',sans-serif;font-size:13px;line-height:13px;height:13px;">RUN</div>
<div class="" style="left:462px;top:618px;width:14px;height:12px;background:#C8C8C8;border:1px solid #303030"></div>
<div class="tx" style="left:479px;top:618px;font-family:'Liberation Sans',sans-serif;font-size:13px;line-height:13px;height:13px;">STOP</div>
<div class="sk" style="left:520px;top:569px;width:13px;height:13px;background:#fff"></div>
<div class="tx" style="left:539px;top:570px;font-family:'Liberation Sans',sans-serif;font-size:13px;line-height:13px;height:13px;">RUN-P</div>
<div class="sk" style="left:520px;top:590px;width:13px;height:13px;background:#fff"></div>
<div class="tx" style="left:539px;top:591px;font-family:'Liberation Sans',sans-serif;font-size:13px;line-height:13px;height:13px;">RUN</div>
<div class="sk" style="left:520px;top:611px;width:13px;height:13px;background:#fff"></div>
<div class="tx" style="left:539px;top:612px;font-family:'Liberation Sans',sans-serif;font-size:13px;line-height:13px;height:13px;">STOP</div>
<svg style="left:522px;top:592px" width="9" height="9"><path d="M1 4l2.5 3L8 1" stroke="#000" stroke-width="2" fill="none"/></svg>
<div class="ra" style="left:583px;top:608px;width:49px;height:22px;"></div>
<div class="tx" style="left:591px;top:614px;font-family:'Liberation Sans',sans-serif;font-size:12.5px;line-height:12px;height:12px;">MRES</div>
<div class="" style="left:712px;top:535px;width:260px;height:131px;background:#D4D0C8;box-shadow:inset -1px -1px #404040,inset 1px 1px #D4D0C8,inset -2px -2px #808080,inset 2px 2px #fff"></div>
<div class="" style="left:715px;top:538px;width:254px;height:20px;background:linear-gradient(90deg,#808080,#C0C0C0)"></div>
<svg style="left:716px;top:539px" width="18" height="18"><rect x="1" y="2" width="16" height="14" fill="#fff" stroke="#000"/><path d="M2 6h14" stroke="#000"/><rect x="3" y="8" width="5" height="2" fill="#000"/><rect x="3" y="12" width="9" height="2" fill="#000"/><path d="M11 8h4l-2 2z" fill="#000"/></svg>
<div class="tx" style="left:737px;top:542px;color:#D4D0C8;font-weight:bold;font-size:13.33px;line-height:14px;height:14px">IB&nbsp;&nbsp;&nbsp;&nbsp;&nbsp;&nbsp;0</div>
<div class="ra" style="left:907px;top:541px;width:18px;height:15px;"></div>
<div class="" style="left:911px;top:550px;width:7px;height:2px;background:#000"></div>
<div class="ra" style="left:926px;top:541px;width:18px;height:15px;"></div>
<div class="" style="left:931px;top:544px;width:9px;height:9px;border:1px solid #fff;border-top-width:2px"></div>
<div class="" style="left:930px;top:543px;width:9px;height:9px;border:1px solid #808080;border-top-width:2px"></div>
<div class="ra" style="left:947px;top:541px;width:18px;height:15px;"></div>
<svg style="left:947px;top:541px" width="18" height="15"><path d="M5 3L13 11M13 3L5 11" stroke="#000" stroke-width="1.8"/></svg>
<div class="sk" style="left:725px;top:567px;width:117px;height:31px;background:#fff"></div>
<div class="tx" style="left:729px;top:572px;font-family:'Liberation Sans',sans-serif;font-size:16.5px;line-height:16px;height:16px;">IB&nbsp;&nbsp;&nbsp;&nbsp;0</div>
<div class="sk" style="left:842px;top:567px;width:116px;height:26px;background:#fff"></div>
<div class="tx" style="left:845px;top:572px;line-height:18px;height:18px;"><svg class="c" width="18" height="18" fill="currentColor"><use href="#g18b4f4d" x="0"/></svg></div>
<div class="ra" style="left:939px;top:569px;width:17px;height:22px;"></div>
<svg style="left:944px;top:578px" width="7" height="4"><path d="M0 0h7L3.5 4z" fill="#000"/></svg>
<div class="tx" style="left:732px;top:612px;font-family:'Liberation Sans',sans-serif;font-size:16.5px;line-height:16px;height:16px;font-weight:bold">7</div>
<div class="sk" style="left:728px;top:636px;width:13px;height:13px;background:#fff"></div>
<div class="tx" style="left:760px;top:612px;font-family:'Liberation Sans',sans-serif;font-size:16.5px;line-height:16px;height:16px;font-weight:bold">6</div>
<div class="sk" style="left:756px;top:636px;width:13px;height:13px;background:#fff"></div>
<div class="tx" style="left:786px;top:612px;font-family:'Liberation Sans',sans-serif;font-size:16.5px;line-height:16px;height:16px;font-weight:bold">5</div>
<div class="sk" style="left:783px;top:636px;width:13px;height:13px;background:#fff"></div>
<div class="tx" style="left:815px;top:612px;font-family:'Liberation Sans',sans-serif;font-size:16.5px;line-height:16px;height:16px;font-weight:bold">4</div>
<div class="sk" style="left:811px;top:636px;width:13px;height:13px;background:#fff"></div>
<div class="tx" style="left:857px;top:612px;font-family:'Liberation Sans',sans-serif;font-size:16.5px;line-height:16px;height:16px;font-weight:bold">3</div>
<div class="sk" style="left:853px;top:636px;width:13px;height:13px;background:#fff"></div>
<div class="tx" style="left:885px;top:612px;font-family:'Liberation Sans',sans-serif;font-size:16.5px;line-height:16px;height:16px;font-weight:bold">2</div>
<div class="sk" style="left:880px;top:636px;width:13px;height:13px;background:#fff"></div>
<div class="tx" style="left:912px;top:612px;font-family:'Liberation Sans',sans-serif;font-size:16.5px;line-height:16px;height:16px;font-weight:bold">1</div>
<div class="sk" style="left:908px;top:636px;width:13px;height:13px;background:#fff"></div>
<div class="tx" style="left:937px;top:612px;font-family:'Liberation Sans',sans-serif;font-size:16.5px;line-height:16px;height:16px;font-weight:bold">0</div>
<div class="sk" style="left:935px;top:636px;width:13px;height:13px;background:#fff"></div>
<div class="" style="left:972px;top:535px;width:259px;height:131px;background:#D4D0C8;box-shadow:inset -1px -1px #404040,inset 1px 1px #D4D0C8,inset -2px -2px #808080,inset 2px 2px #fff"></div>
<div class="" style="left:975px;top:538px;width:253px;height:20px;background:linear-gradient(90deg,#0A246A,#A6CAF0)"></div>
<svg style="left:976px;top:539px" width="18" height="18"><rect x="1" y="2" width="16" height="14" fill="#fff" stroke="#000"/><path d="M2 6h14" stroke="#000"/><rect x="3" y="8" width="5" height="2" fill="#000"/><rect x="3" y="12" width="9" height="2" fill="#000"/><path d="M11 8h4l-2 2z" fill="#000"/></svg>
<div class="tx" style="left:997px;top:542px;color:#fff;font-weight:bold;font-size:13.33px;line-height:14px;height:14px">PIW&nbsp;&nbsp;272</div>
<div class="ra" style="left:1166px;top:541px;width:18px;height:15px;"></div>
<div class="" style="left:1170px;top:550px;width:7px;height:2px;background:#000"></div>
<div class="ra" style="left:1185px;top:541px;width:18px;height:15px;"></div>
<div class="" style="left:1190px;top:544px;width:9px;height:9px;border:1px solid #fff;border-top-width:2px"></div>
<div class="" style="left:1189px;top:543px;width:9px;height:9px;border:1px solid #808080;border-top-width:2px"></div>
<div class="ra" style="left:1206px;top:541px;width:18px;height:15px;"></div>
<svg style="left:1206px;top:541px" width="18" height="15"><path d="M5 3L13 11M13 3L5 11" stroke="#000" stroke-width="1.8"/></svg>
<div class="sk" style="left:985px;top:567px;width:117px;height:31px;background:#fff"></div>
<div class="tx" style="left:989px;top:572px;font-family:'Liberation Sans',sans-serif;font-size:16.5px;line-height:16px;height:16px;">PIW&nbsp;272</div>
<div class="sk" style="left:1102px;top:567px;width:117px;height:26px;background:#fff"></div>
<div class="tx" style="left:1105px;top:571px;width:95px;overflow:hidden;height:18px;line-height:18px"><svg class="c" width="36" height="18" fill="currentColor"><use href="#g18b6ed1" x="0"/><use href="#g18b5757" x="18"/></svg><span style="font-size:15px;position:relative;top:1px">:</span><svg class="c" width="54" height="18" fill="currentColor"><use href="#g18b5341" x="0"/><use href="#g18b8fdb" x="18"/><use href="#g18b5236" x="36"/></svg></div>
<div class="ra" style="left:1200px;top:569px;width:17px;height:22px;"></div>
<svg style="left:1205px;top:578px" width="7" height="4"><path d="M0 0h7L3.5 4z" fill="#000"/></svg>
<div class="" style="left:993px;top:611px;width:217px;height:4px;box-shadow:inset 1px 1px #808080,inset 2px 2px #404040,inset -1px -1px #fff"></div>
<div class="ra" style="left:1056px;top:601px;width:12px;height:23px;"></div>
<div class="sk" style="left:985px;top:625px;width:138px;height:31px;background:#fff"></div>
<div class="tx" style="left:988px;top:630px;font-family:'Liberation Sans',sans-serif;font-size:16.5px;line-height:16px;height:16px;">20000</div>
<div class="sk" style="left:1123px;top:625px;width:96px;height:26px;background:#fff"></div>
<div class="tx" style="left:1126px;top:629px;line-height:18px;height:18px;"><svg class="c" width="18" height="18" fill="currentColor"><use href="#g18b503c" x="0"/></svg></div>
<div class="ra" style="left:1200px;top:627px;width:17px;height:22px;"></div>
<svg style="left:1205px;top:636px" width="7" height="4"><path d="M0 0h7L3.5 4z" fill="#000"/></svg>
<div class="dith" style="left:313px;top:46px;width:23px;height:22px;box-shadow:inset 1px 1px #808080,inset -1px -1px #fff"></div>
<div class="dith" style="left:344px;top:46px;width:21px;height:22px;"></div>
<div class="dith" style="left:365px;top:46px;width:22px;height:22px;box-shadow:inset 1px 1px #808080,inset -1px -1px #fff"></div>
<div class="dith" style="left:446px;top:46px;width:22px;height:22px;box-shadow:inset 1px 1px #808080,inset -1px -1px #fff"></div>
<div class="dith" style="left:469px;top:46px;width:22px;height:22px;box-shadow:inset 1px 1px #808080,inset -1px -1px #fff"></div>
<svg style="left:12px;top:49px" width="18" height="16"><path d="M1.5 1.5h7l3 3v10h-10z" fill="#fff" stroke="#000"/><path d="M8.5 1.5v3h3" fill="none" stroke="#000"/></svg>
<svg style="left:32px;top:48px" width="18" height="16"><path d="M1.5 5.5v9h11l3-6h-11l-3 6" fill="#808000" stroke="#000"/><path d="M1.5 14.5v-10h3l1 1h6v3" fill="#F0F080" stroke="#000"/><path d="M9 3q3-3 6 0M15 1v3h-3" stroke="#000" fill="none"/></svg>
<svg style="left:54px;top:48px" width="19" height="16"><rect x="1.5" y="1.5" width="7" height="6" fill="#fff" stroke="#000"/><rect x="3" y="3" width="4" height="3" fill="#2040A0"/><rect x="0" y="8" width="10" height="2" fill="#000"/><rect x="1" y="11" width="7" height="5" fill="#103030"/><path d="M3 13h3" stroke="#8FF"/><path d="M10 10q3-4 6 0l1 2M17 9v3h-3" stroke="#000" fill="none"/></svg>
<svg style="left:79px;top:49px" width="16" height="16"><path d="M0.5 0.5h14v14h-13l-1-1z" fill="#808080"/><rect x="3" y="1" width="9" height="6" fill="#C0C0C0"/><rect x="4" y="9" width="8" height="5" fill="#C0C0C0"/><rect x="9" y="10" width="2" height="3" fill="#808080"/></svg>
<svg style="left:108px;top:49px" width="18" height="16"><path d="M4.5 1.5h8l1 5h-10z" fill="#fff" stroke="#000"/><path d="M1.5 6.5h14v6h-14z" fill="#C0C0C0" stroke="#000"/><path d="M2 9h12" stroke="#808000"/><path d="M2.5 12.5h12l-1 2h-10z" fill="#fff" stroke="#000"/><path d="M6 3h5M6 5h5" stroke="#000"/></svg>
<svg style="left:139px;top:49px" width="14" height="16"><g transform="translate(1,1)"><circle cx="3.5" cy="12" r="2.5" fill="none" stroke="#fff"/><circle cx="9.5" cy="12" r="2.5" fill="none" stroke="#fff"/><path d="M4 10L9 1M9 10L4 1" stroke="#fff"/></g><g><circle cx="3.5" cy="12" r="2.5" fill="none" stroke="#808080"/><circle cx="9.5" cy="12" r="2.5" fill="none" stroke="#808080"/><path d="M4 10L9 1M9 10L4 1" stroke="#808080"/></g></svg>
<svg style="left:161px;top:49px" width="18" height="16"><g transform="translate(1,1)"><path d="M0.5 0.5h6l2 2v7h-8z" fill="none" stroke="#fff"/><path d="M6.5 5.5h6l2 2v7h-8z" fill="#D4D0C8" stroke="#fff"/><path d="M2 4h4M2 6h4M8 9h5M8 11h5" stroke="#fff"/></g><g><path d="M0.5 0.5h6l2 2v7h-8z" fill="none" stroke="#808080"/><path d="M6.5 5.5h6l2 2v7h-8z" fill="#D4D0C8" stroke="#808080"/><path d="M2 4h4M2 6h4M8 9h5M8 11h5" stroke="#808080"/></g></svg>
<svg style="left:183px;top:48px" width="19" height="17"><g transform="translate(1,1)"><rect x="0.5" y="3.5" width="12" height="12" fill="#fff"/><rect x="4" y="1" width="6" height="3" fill="#fff"/><path d="M8.5 9.5h8v6h-8z" fill="#D4D0C8" stroke="#fff"/><path d="M10 12h5" stroke="#fff"/></g><g><rect x="0.5" y="3.5" width="12" height="12" fill="#808080"/><rect x="4" y="1" width="6" height="3" fill="#808080"/><path d="M8.5 9.5h8v6h-8z" fill="#D4D0C8" stroke="#808080"/><path d="M10 12h5" stroke="#808080"/></g></svg>
<svg style="left:213px;top:50px" width="18" height="16"><g transform="translate(1,1)"><path d="M3 5q5-4 10 1q1 4-3 6" stroke="#fff" stroke-width="2" fill="none"/><path d="M1 2v6h6z" fill="#fff"/></g><g><path d="M3 5q5-4 10 1q1 4-3 6" stroke="#808080" stroke-width="2" fill="none"/><path d="M1 2v6h6z" fill="#808080"/></g></svg>
<svg style="left:236px;top:50px" width="18" height="16"><g transform="translate(1,1)"><path d="M13 5q-5-4-10 1q-1 4 3 6" stroke="#fff" stroke-width="2" fill="none"/><path d="M15 2v6H9z" fill="#fff"/></g><g><path d="M13 5q-5-4-10 1q-1 4 3 6" stroke="#808080" stroke-width="2" fill="none"/><path d="M15 2v6H9z" fill="#808080"/></g></svg>
<svg style="left:264px;top:48px" width="18" height="16"><g transform="translate(1,1)"><path d="M6 2H4Q1 2 1 5v6q0 3 3 3h2" stroke="#fff" stroke-width="2.5" fill="none"/><path d="M5 8h4M8 6l2 2-2 2" stroke="#fff" stroke-width="1.5" fill="none"/><path d="M11 2v4M14 2v4M11 9v4M14 9v4" stroke="#fff" stroke-width="1.5"/></g><g><path d="M6 2H4Q1 2 1 5v6q0 3 3 3h2" stroke="#808080" stroke-width="2.5" fill="none"/><path d="M5 8h4M8 6l2 2-2 2" stroke="#808080" stroke-width="1.5" fill="none"/><path d="M11 2v4M14 2v4M11 9v4M14 9v4" stroke="#808080" stroke-width="1.5"/></g></svg>
<svg style="left:287px;top:48px" width="18" height="17"><g transform="translate(1,1)"><path d="M1 7h4l3 3 3-3h5v9H1z" fill="#fff"/><path d="M8 1v6M5 5l3 3 3-3" stroke="#fff" stroke-width="2" fill="none"/></g><g><path d="M1 7h4l3 3 3-3h5v9H1z" fill="#808080"/><path d="M8 1v6M5 5l3 3 3-3" stroke="#808080" stroke-width="2" fill="none"/></g></svg>
<svg style="left:317px;top:52px" width="17" height="12"><path d="M5.5 1.5h9v8h-9l-3-4z" fill="#C8F4F4" stroke="#000"/><path d="M6 4h8" stroke="#80E0E0"/><path d="M0.5 0.5l3 3" stroke="#000"/></svg>
<svg style="left:346px;top:49px" width="17" height="17"><rect x="0.5" y="0.5" width="7" height="6" rx="1.5" fill="#fff" stroke="#808080" stroke-width="1.2"/><path d="M2 3h4M4 7v3M0 10.5h16M13 10v2" stroke="#808080" stroke-width="1.3"/><rect x="9" y="12" width="7" height="5" fill="#808080"/></svg>
<svg style="left:367px;top:50px" width="19" height="16"><ellipse cx="4" cy="10.5" rx="2.8" ry="3.5" fill="#E8F0D8" stroke="#10108A" stroke-width="1.5"/><ellipse cx="11" cy="10.5" rx="2.8" ry="3.5" fill="#E8F0D8" stroke="#10108A" stroke-width="1.5"/><path d="M2 8l3-4 2 3M9 8l5-6 1 4" stroke="#000" stroke-width="1.2" fill="none"/></svg>
<svg style="left:397px;top:49px" width="18" height="16"><g transform="translate(1,1)"><path d="M2 1v9M2 12v2" stroke="#fff" stroke-width="2"/><path d="M10 2L5 8l5 6M14 2L9 8l5 6" stroke="#fff" fill="none"/></g><g><path d="M2 1v9M2 12v2" stroke="#808080" stroke-width="2"/><path d="M10 2L5 8l5 6M14 2L9 8l5 6" stroke="#808080" fill="none"/></g></svg>
<svg style="left:419px;top:49px" width="18" height="16"><g transform="translate(1,1)"><path d="M1 2l5 6-5 6M5 2l5 6-5 6" stroke="#fff" fill="none"/><path d="M14 1v9M14 12v2" stroke="#fff" stroke-width="2"/></g><g><path d="M1 2l5 6-5 6M5 2l5 6-5 6" stroke="#808080" fill="none"/><path d="M14 1v9M14 12v2" stroke="#808080" stroke-width="2"/></g></svg>
<svg style="left:449px;top:49px" width="17" height="16"><rect x="0.5" y="0.5" width="15" height="14" fill="#fff" stroke="#000"/><rect x="1" y="1" width="14" height="2" fill="#10106A"/><rect x="1" y="3" width="4" height="11" fill="#F0E060" stroke="#000" stroke-width="0.5"/></svg>
<svg style="left:472px;top:49px" width="18" height="16"><rect x="0.5" y="0.5" width="15" height="14" fill="#fff" stroke="#000"/><rect x="1" y="1" width="14" height="2" fill="#10106A"/><rect x="1" y="10" width="14" height="4" fill="#F0E060"/><circle cx="7" cy="7" r="3" fill="#80E0E0" stroke="#000"/><path d="M9 9l5 5" stroke="#2040C0" stroke-width="2"/></svg>
<svg style="left:501px;top:48px" width="17" height="16"><g transform="translate(1,1)"><path d="M1 1v6M4 1v6M1 4h3M7 1v6M10 1L7 4l3 3M12 1q3 3 0 6" stroke="#fff" fill="none"/><path d="M1 9v5M1 12h3M6 12h2M10 12h2M14 12h2" stroke="#fff" stroke-width="2"/></g><g><path d="M1 1v6M4 1v6M1 4h3M7 1v6M10 1L7 4l3 3M12 1q3 3 0 6" stroke="#808080" fill="none"/><path d="M1 9v5M1 12h3M6 12h2M10 12h2M14 12h2" stroke="#808080" stroke-width="2"/></g></svg>
<svg style="left:528px;top:49px" width="18" height="16"><g transform="translate(1,1)"><path d="M0 8h5M12 8h5M5 2v12M11 2v12" stroke="#fff" stroke-width="2"/></g><g><path d="M0 8h5M12 8h5M5 2v12M11 2v12" stroke="#808080" stroke-width="2"/></g></svg>
<svg style="left:552px;top:49px" width="18" height="16"><g transform="translate(1,1)"><path d="M0 8h5M12 8h5M5 2v12M11 2v12M6 13l4-10" stroke="#fff" stroke-width="2"/></g><g><path d="M0 8h5M12 8h5M5 2v12M11 2v12M6 13l4-10" stroke="#808080" stroke-width="2"/></g></svg>
<svg style="left:575px;top:49px" width="18" height="16"><g transform="translate(1,1)"><path d="M0 8h4" stroke="#fff" stroke-width="2"/><path d="M8 2q-4 6 0 12M12 2q4 6 0 12" stroke="#fff" stroke-width="2" fill="none"/></g><g><path d="M0 8h4" stroke="#808080" stroke-width="2"/><path d="M8 2q-4 6 0 12M12 2q4 6 0 12" stroke="#808080" stroke-width="2" fill="none"/></g></svg>
<svg style="left:598px;top:49px" width="17" height="16"><g transform="translate(1,1)"><rect x="0.5" y="0.5" width="14" height="14" fill="none" stroke="#fff"/><text x="2" y="10" font-size="9" font-family="Liberation Mono" fill="#fff">??</text></g><g><rect x="0.5" y="0.5" width="14" height="14" fill="none" stroke="#808080"/><text x="2" y="10" font-size="9" font-family="Liberation Mono" fill="#808080">??</text></g></svg>
<svg style="left:622px;top:49px" width="17" height="16"><g transform="translate(1,1)"><path d="M2 1v9h10" stroke="#fff" stroke-width="2" fill="none"/><path d="M10 6l4 4-4 4" stroke="#fff" stroke-width="2" fill="none"/></g><g><path d="M2 1v9h10" stroke="#808080" stroke-width="2" fill="none"/><path d="M10 6l4 4-4 4" stroke="#808080" stroke-width="2" fill="none"/></g></svg>
<svg style="left:644px;top:49px" width="17" height="16"><g transform="translate(1,1)"><path d="M0 11h11V4" stroke="#fff" stroke-width="2" fill="none"/><path d="M7 7l4-4 4 4" stroke="#fff" stroke-width="2" fill="none"/></g><g><path d="M0 11h11V4" stroke="#808080" stroke-width="2" fill="none"/><path d="M7 7l4-4 4 4" stroke="#808080" stroke-width="2" fill="none"/></g></svg>
<svg style="left:667px;top:49px" width="18" height="16"><g transform="translate(1,1)"><path d="M2 2h2v12H2M4 8h9M14 2h-2v12h2" stroke="#fff" stroke-width="1.5" fill="none"/></g><g><path d="M2 2h2v12H2M4 8h9M14 2h-2v12h2" stroke="#808080" stroke-width="1.5" fill="none"/></g></svg>
<svg style="left:696px;top:48px" width="19" height="17"><path d="M1 1v13l3-3 3 5 2-1-3-5h4z" fill="#000"/><text x="9" y="12" font-size="13" font-weight="bold" font-family="Liberation Sans" fill="#10108A">?</text></svg>
<svg style="left:462px;top:513px" width="18" height="16"><path d="M1.5 1.5h7l3 3v10h-10z" fill="#fff" stroke="#000"/><path d="M8.5 1.5v3h3" fill="none" stroke="#000"/></svg>
<svg style="left:483px;top:513px" width="18" height="16"><path d="M1.5 5.5v9h11l3-6h-11l-3 6" fill="#808000" stroke="#000"/><path d="M1.5 14.5v-10h3l1 1h6v3" fill="#F0F080" stroke="#000"/><path d="M9 3q3-3 6 0M15 1v3h-3" stroke="#000" fill="none"/></svg>
<svg style="left:506px;top:513px" width="16" height="16"><rect x="0.5" y="0.5" width="14" height="14" fill="#808000" stroke="#000"/><rect x="3" y="1" width="9" height="6" fill="#fff"/><rect x="3" y="9" width="9" height="5" fill="#000"/><rect x="9" y="10" width="2" height="3" fill="#fff"/></svg>
<svg style="left:528px;top:513px" width="16" height="16"><path d="M3.5 0.5h9v5h-9z" fill="#fff" stroke="#000"/><path d="M0.5 5.5h15v7h-15z" fill="#fff" stroke="#000"/><rect x="4" y="8" width="8" height="3" fill="#40A080"/><path d="M2.5 12.5h11v3h-11z" fill="#fff" stroke="#000"/></svg>
<svg style="left:698px;top:513px" width="14" height="16"><g transform="translate(1,1)"><circle cx="3.5" cy="12" r="2.5" fill="none" stroke="#fff"/><circle cx="9.5" cy="12" r="2.5" fill="none" stroke="#fff"/><path d="M4 10L9 1M9 10L4 1" stroke="#fff"/></g><g><circle cx="3.5" cy="12" r="2.5" fill="none" stroke="#808080"/><circle cx="9.5" cy="12" r="2.5" fill="none" stroke="#808080"/><path d="M4 10L9 1M9 10L4 1" stroke="#808080"/></g></svg>
<svg style="left:720px;top:513px" width="18" height="16"><g transform="translate(1,1)"><path d="M0.5 0.5h6l2 2v7h-8z" fill="none" stroke="#fff"/><path d="M6.5 5.5h6l2 2v7h-8z" fill="#D4D0C8" stroke="#fff"/><path d="M2 4h4M2 6h4M8 9h5M8 11h5" stroke="#fff"/></g><g><path d="M0.5 0.5h6l2 2v7h-8z" fill="none" stroke="#808080"/><path d="M6.5 5.5h6l2 2v7h-8z" fill="#D4D0C8" stroke="#808080"/><path d="M2 4h4M2 6h4M8 9h5M8 11h5" stroke="#808080"/></g></svg>
<svg style="left:743px;top:513px" width="19" height="17"><g transform="translate(1,1)"><rect x="0.5" y="3.5" width="12" height="12" fill="#fff"/><rect x="4" y="1" width="6" height="3" fill="#fff"/><path d="M8.5 9.5h8v6h-8z" fill="#D4D0C8" stroke="#fff"/><path d="M10 12h5" stroke="#fff"/></g><g><rect x="0.5" y="3.5" width="12" height="12" fill="#808080"/><rect x="4" y="1" width="6" height="3" fill="#808080"/><path d="M8.5 9.5h8v6h-8z" fill="#D4D0C8" stroke="#808080"/><path d="M10 12h5" stroke="#808080"/></g></svg>
<svg style="left:778px;top:513px" width="17" height="16"><rect x="1" y="1" width="9" height="4" fill="#10108A"/><rect x="3" y="5" width="9" height="4" fill="#fff" stroke="#10108A"/><rect x="5" y="9" width="10" height="5" fill="#10108A"/><path d="M1 3h9" stroke="#fff"/></svg>
<svg style="left:795px;top:513px" width="17" height="16"><rect x="1.5" y="1.5" width="13" height="12" fill="#fff" stroke="#10108A" stroke-width="2"/><path d="M1 5h14M8 1v13M1 9h14" stroke="#10108A" stroke-width="2"/></svg>
<svg style="left:815px;top:513px" width="17" height="16"><path d="M1 8h5M6 4v8M6 5h6l2 -2v10l-2-2H6" stroke="#000" fill="#fff" stroke-width="1.5"/></svg>
<svg style="left:846px;top:512px" width="19" height="17"><path d="M1 1v13l3-3 3 5 2-1-3-5h4z" fill="#000"/><text x="9" y="12" font-size="13" font-weight="bold" font-family="Liberation Sans" fill="#10108A">?</text></svg>
<svg style="left:879px;top:513px" width="17" height="16"><path d="M1 1l2 2M3 0v3M0 3h3" stroke="#E0C000" stroke-width="1.5"/><rect x="3.5" y="3.5" width="12" height="11" fill="#fff" stroke="#000"/><path d="M6 6v6M6 9h7M9 7l-2 2 2 2" stroke="#000" fill="none"/></svg>
<svg style="left:901px;top:513px" width="17" height="16"><path d="M1 1l2 2M3 0v3M0 3h3" stroke="#E0C000" stroke-width="1.5"/><rect x="3.5" y="3.5" width="12" height="11" fill="#fff" stroke="#000"/><path d="M6 6v6M6 9h6M10 7l2 2-2 2" stroke="#000" fill="none"/></svg>
<svg style="left:925px;top:513px" width="17" height="16"><path d="M1 1l2 2M3 0v3M0 3h3" stroke="#E0C000" stroke-width="1.5"/><rect x="3.5" y="3.5" width="12" height="11" fill="#fff" stroke="#000"/><text x="6" y="13" font-size="8" font-family="Liberation Sans" fill="#000">M</text></svg>
<svg style="left:947px;top:513px" width="17" height="16"><path d="M1 1l2 2M3 0v3M0 3h3" stroke="#E0C000" stroke-width="1.5"/><rect x="3.5" y="3.5" width="12" height="11" fill="#fff" stroke="#000"/><text x="6.5" y="13" font-size="8" font-family="Liberation Sans" fill="#000">T</text></svg>
<svg style="left:970px;top:513px" width="17" height="16"><path d="M1 1l2 2M3 0v3M0 3h3" stroke="#E0C000" stroke-width="1.5"/><rect x="3.5" y="3.5" width="12" height="11" fill="#fff" stroke="#000"/><text x="6" y="13" font-size="8" font-family="Liberation Sans" fill="#000">C</text></svg>
<svg style="left:993px;top:513px" width="17" height="16"><path d="M1 1l2 2M3 0v3M0 3h3" stroke="#E0C000" stroke-width="1.5"/><rect x="3.5" y="3.5" width="12" height="11" fill="#fff" stroke="#000"/><rect x="5.5" y="6.5" width="8" height="4" fill="none" stroke="#000"/><path d="M6 12.5h7" stroke="#000"/></svg>
<svg style="left:1016px;top:513px" width="17" height="16"><path d="M1 1l2 2M3 0v3M0 3h3" stroke="#E0C000" stroke-width="1.5"/><rect x="3.5" y="3.5" width="12" height="11" fill="#fff" stroke="#000"/><rect x="5.5" y="6.5" width="3" height="3" fill="#000"/><path d="M10 6.5h4M10 9.5h4M6 12.5h8" stroke="#000"/></svg>
<svg style="left:1045px;top:513px" width="17" height="16"><path d="M1 1l2 2M3 0v3M0 3h3" stroke="#E0C000" stroke-width="1.5"/><rect x="3.5" y="3.5" width="12" height="11" fill="#fff" stroke="#000"/><path d="M6 6.5h8M6 9.5h8M6 12.5h8" stroke="#000"/></svg>
<svg style="left:1068px;top:513px" width="17" height="16"><path d="M1 1l2 2M3 0v3M0 3h3" stroke="#E0C000" stroke-width="1.5"/><rect x="3.5" y="3.5" width="12" height="11" fill="#fff" stroke="#000"/><text x="6" y="13" font-size="8" font-family="Liberation Sans" fill="#000">A</text></svg>
<svg style="left:1091px;top:513px" width="17" height="16"><path d="M1 1l2 2M3 0v3M0 3h3" stroke="#E0C000" stroke-width="1.5"/><rect x="3.5" y="3.5" width="12" height="11" fill="#fff" stroke="#000"/><text x="6" y="13" font-size="8" font-family="Liberation Sans" fill="#000">R</text></svg>
<svg style="left:1123px;top:513px" width="17" height="16"><rect x="1" y="1" width="6" height="14" fill="#808000" stroke="#000"/><path d="M10 1h3v11M11 10l2 3 2-3" stroke="#000" fill="none"/></svg>
<div class="dith" style="left:1144px;top:511px;width:22px;height:22px;box-shadow:inset 1px 1px #808080,inset -1px -1px #fff"></div>
<svg style="left:1147px;top:513px" width="17" height="16"><rect x="1" y="1" width="6" height="14" fill="#808000" stroke="#000"/><path d="M10 5v9M9 7l2-3 2 3M13 1v10M12 9l2 3 2-3" stroke="#000" fill="none"/></svg>
<svg style="left:1181px;top:515px" width="12" height="16"><rect x="1" y="1" width="3" height="10" fill="#1010C0"/><rect x="7" y="1" width="3" height="10" fill="#1010C0"/></svg>
<div class="tx sans" style="left:1197px;top:515px;font-size:13px;font-weight:bold;color:#A0A0A0">+1</div>
<div class="tx sans" style="left:1226px;top:516px;font-size:10px">T=0</div></body></html>
